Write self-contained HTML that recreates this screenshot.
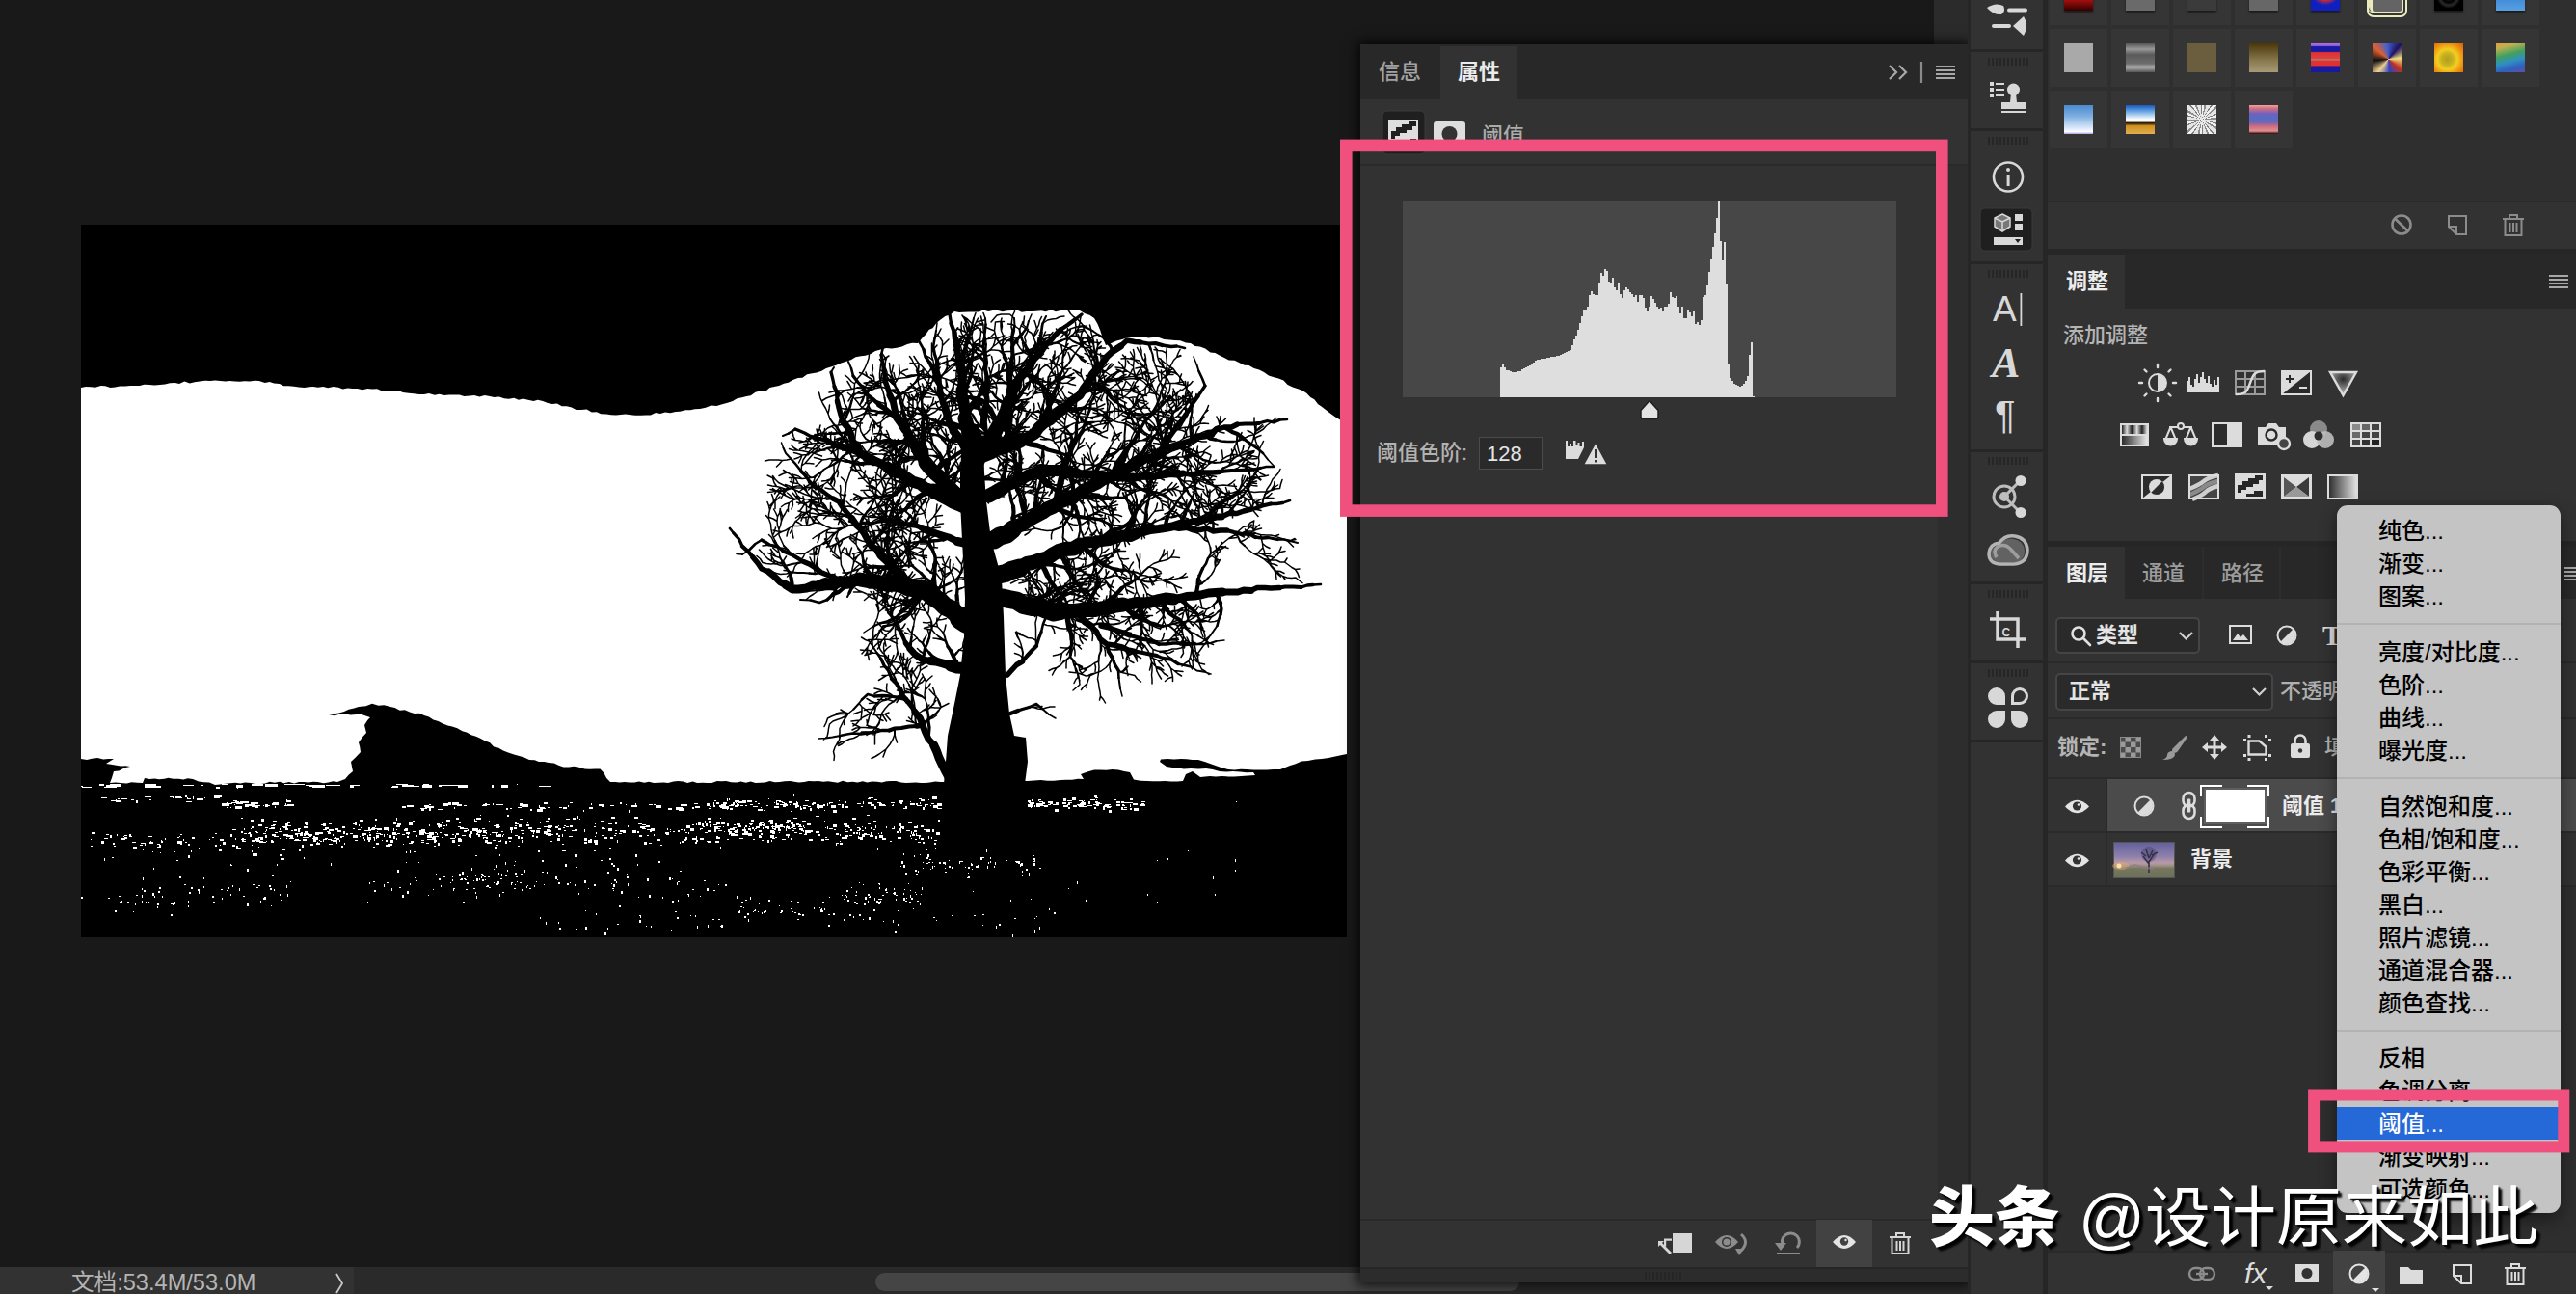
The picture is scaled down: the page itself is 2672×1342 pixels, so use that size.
<!DOCTYPE html>
<html lang="zh-CN"><head><meta charset="utf-8"><title>Photoshop</title>
<style>
html,body{margin:0;padding:0;background:#191919;}
body{width:2672px;height:1342px;overflow:hidden;font-family:"Liberation Sans","Noto Sans CJK SC",sans-serif;}
#root{position:relative;width:2672px;height:1342px;overflow:hidden;background:#191919;}
.abs{position:absolute;}
svg{display:block;}
.t22{font-size:22px;font-weight:500;}
.mi{left:43px;font-size:24px;font-weight:500;line-height:34px;height:34px;white-space:nowrap;}
.wm{color:#fff;font-size:68px;line-height:80px;white-space:nowrap;text-shadow:4px 4px 2px rgba(0,0,0,.9),2px 2px 1px rgba(0,0,0,.8);}

</style></head><body>
<div id="root">
<svg class="abs" style="left:84px;top:233px" width="1313" height="739" viewBox="84 233 1313 739">
<rect x="84" y="233" width="1313" height="739" fill="#000"/>
<polygon fill="#fff" points="84.0,402.0 89.1,401.1 94.3,401.2 98.8,401.7 104.6,399.9 109.1,400.3 114.4,402.0 119.5,401.4 124.2,400.6 130.0,400.4 135.0,399.9 139.3,400.1 145.0,400.1 149.4,398.7 155.0,399.0 160.2,399.6 165.9,398.9 171.1,398.5 176.2,397.3 181.6,397.1 186.0,397.9 191.3,395.6 196.8,397.4 201.9,396.2 207.2,395.6 212.6,394.8 218.2,395.1 223.0,394.5 228.6,395.0 233.8,395.5 238.0,395.0 244.0,395.5 248.7,395.7 253.4,395.2 259.0,395.5 264.0,394.7 268.7,394.9 274.8,397.1 279.7,395.9 284.1,397.5 289.9,397.9 294.3,400.2 299.4,400.2 305.0,400.7 309.9,401.4 315.6,402.0 320.7,401.2 324.8,400.9 329.8,401.8 335.3,400.9 340.1,402.2 345.9,400.9 351.0,401.7 355.5,403.4 360.7,402.5 365.8,403.1 370.9,403.0 375.9,404.2 381.2,403.1 386.0,403.4 391.2,403.3 396.8,405.8 401.7,405.2 407.7,405.4 413.1,405.0 417.9,407.1 423.8,407.7 429.0,408.3 434.8,409.0 440.0,409.0 444.8,407.9 450.9,409.8 455.6,408.8 460.7,409.9 466.0,409.4 471.5,409.6 476.5,409.6 481.4,410.9 487.3,410.6 492.0,410.0 497.3,411.5 502.7,410.0 508.0,411.0 512.6,412.0 517.8,411.4 522.9,413.2 527.7,413.7 533.2,412.8 537.9,414.7 542.6,413.5 547.7,414.7 553.4,415.9 557.8,414.7 563.0,416.0 568.1,417.9 572.8,419.0 577.8,418.4 582.8,421.3 587.9,421.2 592.9,422.5 597.6,425.0 603.0,425.0 608.6,424.5 613.8,427.6 618.9,427.2 623.3,429.3 629.1,429.6 633.9,430.2 639.0,430.6 643.9,429.9 648.8,429.5 654.1,430.3 659.0,430.7 664.8,430.8 670.1,430.6 674.9,430.4 680.1,427.9 685.0,429.0 689.9,427.5 695.3,428.2 700.8,426.9 705.3,426.8 711.0,425.2 716.0,425.2 720.6,424.2 726.0,424.0 732.0,422.8 737.6,420.5 743.3,421.1 748.2,419.5 754.7,417.7 760.0,416.0 764.6,413.2 769.6,412.2 774.4,411.0 778.7,410.3 783.6,406.8 788.4,405.4 794.0,406.0 798.4,402.1 803.0,401.1 808.0,400.0 813.1,397.8 817.7,396.7 822.5,393.9 827.7,391.9 832.4,391.7 837.1,388.3 842.5,387.3 847.1,386.6 852.3,384.8 857.0,382.1 862.0,380.5 867.3,378.7 872.4,376.6 877.1,374.9 882.6,373.3 887.5,370.2 893.1,369.3 897.6,368.8 903.2,366.9 908.0,364.0 913.5,362.4 919.3,361.0 924.9,361.4 930.2,360.8 935.6,359.6 941.1,357.0 946.1,355.7 952.0,356.0 957.0,350.0 960.1,347.1 963.8,341.7 967.5,340.2 971.8,334.4 975.0,332.0 980.4,328.0 985.3,326.5 990.0,323.0 995.1,324.1 999.5,323.7 1005.0,323.6 1009.6,323.4 1015.5,323.5 1019.8,321.6 1025.3,322.9 1029.7,322.0 1035.1,322.0 1039.9,323.3 1044.9,322.2 1049.9,322.1 1055.0,321.4 1059.9,323.7 1064.6,323.1 1070.3,322.9 1075.0,322.8 1080.1,322.3 1084.6,323.3 1090.3,321.2 1095.0,323.3 1100.2,322.0 1104.8,321.3 1110.1,321.3 1114.7,321.6 1120.0,322.0 1125.5,325.2 1130.2,326.8 1135.0,330.0 1138.4,335.8 1141.0,342.0 1142.8,347.6 1144.5,351.9 1147.0,358.0 1152.5,356.1 1158.1,353.5 1164.1,352.1 1169.9,349.9 1175.0,349.0 1180.5,349.1 1186.1,349.3 1191.3,350.4 1196.8,349.8 1202.0,350.0 1207.4,351.9 1213.5,352.6 1218.2,352.9 1224.2,353.3 1230.0,355.5 1235.0,356.0 1239.7,359.1 1244.7,359.5 1250.2,361.6 1255.4,365.5 1260.4,366.1 1264.9,368.4 1270.0,371.0 1274.7,373.5 1280.6,373.7 1285.2,376.1 1290.7,378.7 1295.5,379.1 1300.7,382.1 1306.0,383.4 1311.0,386.0 1315.9,389.6 1320.6,390.9 1326.2,392.5 1331.4,394.5 1335.6,398.9 1340.9,401.4 1346.3,403.3 1351.0,405.0 1355.2,407.8 1359.3,412.0 1363.3,414.2 1367.2,419.3 1370.6,421.5 1374.8,424.7 1379.0,428.0 1385.2,432.6 1391.0,436.0 1397.0,440.0 1397.0,782.0 1390.8,783.3 1385.0,784.5 1378.1,785.9 1371.0,787.0 1364.2,787.4 1356.8,788.9 1350.0,789.5 1343.8,792.3 1338.0,794.0 1328.0,798.0 1321.1,797.9 1314.0,798.4 1307.0,798.6 1300.0,798.5 1293.3,798.1 1287.1,797.7 1280.5,798.4 1274.0,798.0 1265.9,795.8 1258.0,793.0 1250.4,790.2 1243.0,788.0 1236.8,788.1 1230.9,787.3 1225.0,787.0 1217.9,787.5 1211.0,787.1 1204.0,787.5 1203.0,790.0 1210.0,795.0 1216.1,795.9 1222.2,796.5 1228.0,797.5 1235.4,797.0 1243.0,797.5 1251.0,797.0 1257.8,798.0 1265.0,800.0 1272.1,800.5 1278.9,800.0 1286.1,800.5 1293.1,801.2 1300.0,801.0 1302.0,804.0 1294.5,804.6 1287.2,804.9 1280.0,805.5 1273.8,805.4 1267.4,804.9 1261.0,805.5 1255.0,805.0 1245.0,806.0 1237.0,800.0 1230.0,803.0 1227.0,810.0 1221.0,810.4 1214.6,810.5 1208.5,810.1 1202.6,810.2 1196.1,810.2 1190.0,810.0 1183.0,809.7 1176.0,808.5 1172.0,801.0 1166.1,799.9 1160.0,798.5 1153.9,797.9 1147.5,798.7 1141.2,798.5 1135.0,798.5 1128.0,800.4 1121.0,803.0 1124.0,808.0 1118.0,807.7 1112.0,808.7 1106.2,808.8 1100.0,809.0 1093.0,809.7 1086.5,809.8 1079.5,809.1 1072.6,809.5 1066.0,810.0 980.0,811.0 975.4,811.1 970.3,810.6 964.6,811.5 960.0,811.9 955.1,812.0 949.7,811.6 945.2,811.7 939.7,811.9 934.7,811.6 929.3,810.1 924.4,810.0 919.6,810.2 914.7,811.5 909.7,810.8 904.5,810.5 899.4,811.6 894.9,810.2 889.4,811.5 884.5,810.7 879.2,811.2 874.1,809.8 869.0,811.7 864.0,810.9 859.0,810.3 854.0,810.8 848.9,809.9 844.2,810.2 838.7,809.9 834.1,810.9 828.7,811.5 824.0,810.8 819.5,809.9 813.7,810.3 808.7,810.9 803.8,811.3 798.5,810.1 793.7,811.5 788.9,811.7 783.7,812.0 778.6,810.4 773.9,811.8 768.4,810.6 764.2,811.4 758.2,811.2 753.3,809.9 748.2,810.2 743.8,809.9 738.3,812.0 733.6,812.1 729.0,811.7 723.1,812.1 718.6,810.5 713.1,812.1 708.8,810.5 703.3,810.1 698.5,810.6 693.0,812.0 688.5,811.6 683.3,811.8 678.1,812.0 673.0,810.8 668.2,811.7 662.9,810.4 658.2,811.5 653.0,811.5 647.8,811.0 642.6,811.5 638.3,810.9 633.0,811.0 629.1,807.0 626.3,801.4 622.5,797.6 617.4,797.6 611.6,797.8 606.5,797.5 600.7,795.7 595.3,794.7 590.0,795.4 584.5,795.6 579.4,793.7 574.8,791.6 569.1,791.1 564.5,789.9 558.8,790.1 554.6,788.3 549.0,788.0 543.7,785.4 538.5,784.0 533.1,782.6 527.1,780.6 522.0,778.6 516.8,775.5 512.1,774.6 508.2,770.3 503.4,768.4 498.2,765.7 493.8,763.7 488.9,762.3 484.0,759.6 479.5,758.3 474.3,755.3 469.0,753.6 464.5,752.6 459.3,750.6 454.6,748.0 449.4,746.5 444.9,743.6 440.0,742.0 435.1,739.7 429.9,740.0 425.1,738.5 419.9,736.2 414.8,736.8 409.6,734.1 405.0,733.0 398.3,731.2 392.6,731.8 386.0,729.7 379.5,732.2 372.0,733.0 367.2,734.6 361.6,735.8 356.9,738.1 351.3,739.4 346.1,740.3 341.0,741.0 347.1,742.2 352.8,740.5 357.6,740.2 363.5,741.5 369.5,741.0 375.0,741.0 384.0,744.0 381.2,746.9 378.0,752.0 380.0,760.0 375.9,764.5 372.0,770.0 373.2,774.6 374.0,780.0 368.8,785.6 364.0,790.0 364.8,794.0 366.0,800.0 361.6,803.8 358.0,808.0 350.0,811.0 345.3,810.2 340.5,811.6 335.4,812.3 329.7,810.9 325.0,810.8 320.0,811.4 315.3,811.1 310.0,810.9 305.3,812.4 299.8,811.1 294.5,812.3 290.0,810.8 284.7,811.8 279.7,810.7 275.0,812.5 270.3,813.0 264.6,813.1 260.0,812.0 254.2,811.5 249.3,812.4 244.2,811.8 238.7,812.2 233.9,812.8 228.1,813.5 223.0,814.0 217.2,811.4 211.7,811.3 206.0,810.5 200.0,808.0 194.7,807.3 190.3,808.4 185.3,807.7 179.8,807.7 174.5,806.7 170.4,807.7 165.0,808.3 160.4,807.6 155.1,807.9 150.0,807.0 148.0,812.0 142.4,811.8 136.4,811.2 131.5,812.4 125.2,812.1 119.6,811.6 114.0,812.0 116.0,806.7 118.0,800.0 123.3,799.4 129.4,796.2 135.0,795.0 130.3,794.2 125.4,794.6 119.5,793.5 115.0,792.8 110.0,792.0 118.0,787.0 112.1,787.0 107.1,787.5 101.2,786.0 95.3,786.7 90.1,787.9 84.0,787.0"/>
<path fill="#fff" d="M304 813h12v1h-12zM245 814h7v3h-7zM103 813h5v2h-5zM536 813h1v1h-1zM324 814h13v3h-13zM114 813h12v2h-12zM190 814h11v1h-11zM246 816h1v2h-1zM110 814h5v2h-5zM150 814h12v3h-12zM85 816h10v1h-10zM510 814h2v3h-2zM520 814h7v3h-7zM320 815h6v1h-6zM417 813h2v3h-2zM426 815h9v1h-9zM438 814h10v3h-10zM559 815h13v1h-13zM160 815h7v2h-7zM411 813h12v1h-12zM275 813h13v3h-13zM84 815h2v1h-2zM295 813h9v1h-9zM330 814h1v2h-1zM455 814h10v1h-10zM115 813h10v3h-10zM261 813h12v2h-12zM150 813h12v1h-12zM108 816h13v1h-13zM209 814h2v1h-2zM112 814h3v2h-3zM224 816h4v2h-4zM351 814h2v1h-2zM439 813h6v1h-6zM419 814h10v2h-10zM363 814h4v3h-4zM319 814h7v1h-7zM464 814h11v1h-11zM455 814h3v2h-3zM365 814h8v1h-8zM338 814h13v1h-13zM230 813h7v1h-7zM190 814h7v1h-7zM317 814h9v1h-9zM407 815h6v2h-6zM475 814h10v3h-10zM320 814h2v1h-2zM406 816h6v1h-6zM235 837h1v1h-1zM254 834h4v3h-4zM263 833h1v2h-1zM230 833h7v3h-7zM240 832h1v2h-1zM276 835h4v1h-4zM243 834h1v1h-1zM256 834h6v2h-6zM273 835h1v1h-1zM247 837h4v1h-4zM231 833h7v3h-7zM285 836h1v2h-1zM263 832h5v2h-5zM239 837h1v1h-1zM298 834h7v2h-7zM297 829h1v2h-1zM260 832h4v2h-4zM260 834h1v2h-1zM262 832h4v1h-4zM253 832h1v1h-1zM241 832h5v1h-5zM296 833h1v2h-1zM297 830h5v2h-5zM244 831h4v2h-4zM235 832h2v2h-2zM283 832h6v3h-6zM236 833h4v1h-4zM245 832h7v2h-7zM232 834h1v2h-1zM275 834h3v3h-3zM265 836h3v2h-3zM244 836h7v3h-7zM242 830h4v1h-4zM251 831h7v2h-7zM263 835h7v1h-7zM249 831h2v2h-2zM263 835h2v2h-2zM282 833h1v2h-1zM295 835h6v1h-6zM261 834h3v3h-3zM459 833h6v3h-6zM559 837h6v1h-6zM737 835h1v2h-1zM720 833h4v1h-4zM605 840h1v2h-1zM503 833h2v2h-2zM749 836h7v3h-7zM529 838h2v1h-2zM422 835h7v2h-7zM511 833h1v2h-1zM550 839h2v2h-2zM747 837h1v1h-1zM704 838h5v3h-5zM733 833h3v3h-3zM465 832h3v2h-3zM557 839h6v3h-6zM445 838h2v3h-2zM680 835h6v3h-6zM417 836h4v2h-4zM736 836h1v1h-1zM481 835h3v1h-3zM474 834h5v2h-5zM541 834h7v3h-7zM649 834h1v1h-1zM443 836h7v2h-7zM537 837h4v1h-4zM445 834h2v1h-2zM611 837h4v2h-4zM539 833h3v3h-3zM591 832h3v1h-3zM750 835h3v3h-3zM560 838h6v1h-6zM718 837h2v2h-2zM539 833h3v2h-3zM589 835h1v2h-1zM559 835h1v2h-1zM440 835h5v2h-5zM471 837h1v2h-1zM659 833h1v2h-1zM624 835h3v2h-3zM652 840h1v3h-1zM643 832h2v2h-2zM721 836h5v2h-5zM693 838h4v2h-4zM752 832h1v3h-1zM633 835h4v1h-4zM441 836h3v2h-3zM469 832h7v3h-7zM464 834h4v1h-4zM613 833h1v2h-1zM564 832h4v2h-4zM678 834h2v1h-2zM706 834h7v2h-7zM525 838h2v2h-2zM654 835h7v2h-7zM735 838h2v1h-2zM746 835h5v2h-5zM437 839h3v2h-3zM515 834h7v1h-7zM701 837h7v3h-7zM436 838h7v1h-7zM580 837h3v1h-3zM568 837h2v1h-2zM454 839h6v1h-6zM500 835h5v1h-5zM584 837h4v2h-4zM748 834h3v1h-3zM501 834h7v1h-7zM673 834h4v1h-4zM621 834h6v2h-6zM155 829h2v1h-2zM150 826h7v1h-7zM115 830h7v1h-7zM194 828h4v1h-4zM187 827h2v1h-2zM141 830h2v3h-2zM122 828h2v1h-2zM212 827h1v1h-1zM185 826h3v2h-3zM182 826h4v2h-4zM120 829h1v3h-1zM136 829h3v1h-3zM179 826h1v2h-1zM222 825h6v3h-6zM192 825h2v2h-2zM193 831h6v1h-6zM126 828h6v1h-6zM219 824h5v1h-5zM204 828h7v2h-7zM176 826h4v1h-4zM194 827h1v2h-1zM105 827h6v1h-6zM200 826h1v3h-1zM224 825h6v2h-6zM120 830h6v2h-6zM758 864h4v3h-4zM423 864h1v2h-1zM761 862h1v1h-1zM728 854h2v3h-2zM576 858h2v1h-2zM593 861h3v1h-3zM577 864h2v2h-2zM522 865h1v1h-1zM348 869h4v1h-4zM955 856h3v2h-3zM551 861h4v2h-4zM408 853h3v2h-3zM507 851h1v1h-1zM875 854h4v2h-4zM969 874h2v2h-2zM770 860h2v2h-2zM436 861h4v2h-4zM583 882h4v1h-4zM401 865h1v1h-1zM726 869h4v2h-4zM501 868h1v2h-1zM882 860h2v2h-2zM510 863h3v1h-3zM707 872h2v2h-2zM261 858h1v1h-1zM952 873h3v1h-3zM503 861h2v1h-2zM948 857h4v2h-4zM890 867h1v2h-1zM299 856h3v1h-3zM533 858h3v2h-3zM564 857h4v1h-4zM799 866h4v2h-4zM871 872h1v1h-1zM932 854h3v3h-3zM799 867h1v2h-1zM339 858h1v1h-1zM264 866h1v2h-1zM411 860h1v1h-1zM530 861h1v3h-1zM833 856h1v2h-1zM520 862h2v1h-2zM726 859h3v1h-3zM950 866h3v1h-3zM815 865h4v2h-4zM583 875h2v1h-2zM625 859h3v1h-3zM646 861h3v3h-3zM253 859h1v2h-1zM309 864h4v1h-4zM930 862h3v2h-3zM691 863h3v3h-3zM969 871h3v1h-3zM289 862h4v1h-4zM915 869h4v2h-4zM487 866h1v1h-1zM315 864h2v3h-2zM772 862h4v1h-4zM705 873h1v2h-1zM811 870h4v1h-4zM297 869h1v1h-1zM963 867h1v3h-1zM914 863h1v2h-1zM934 857h4v2h-4zM945 869h1v1h-1zM492 859h4v3h-4zM345 865h1v2h-1zM624 858h3v2h-3zM606 860h1v3h-1zM321 865h2v3h-2zM798 850h4v3h-4zM894 861h2v1h-2zM260 850h3v2h-3zM481 859h4v1h-4zM296 859h3v2h-3zM568 848h3v2h-3zM638 853h2v2h-2zM816 850h4v2h-4zM800 857h4v1h-4zM726 860h1v1h-1zM722 854h1v2h-1zM834 865h3v1h-3zM624 866h2v1h-2zM864 855h4v3h-4zM398 865h1v3h-1zM888 863h2v2h-2zM275 858h3v1h-3zM957 873h2v2h-2zM887 855h1v1h-1zM513 863h4v1h-4zM428 851h2v2h-2zM722 871h2v2h-2zM616 871h4v3h-4zM961 860h4v3h-4zM412 854h4v2h-4zM448 868h4v3h-4zM796 858h1v2h-1zM450 871h3v2h-3zM891 863h1v3h-1zM317 853h2v1h-2zM568 864h4v3h-4zM583 865h1v3h-1zM835 861h4v3h-4zM743 857h1v1h-1zM873 868h3v2h-3zM546 855h3v2h-3zM538 855h3v3h-3zM314 868h2v1h-2zM298 853h3v1h-3zM568 856h4v3h-4zM810 852h3v1h-3zM950 864h1v3h-1zM325 868h4v1h-4zM871 874h3v2h-3zM541 871h2v3h-2zM711 863h2v1h-2zM718 855h2v1h-2zM445 855h1v2h-1zM327 863h4v3h-4zM733 872h4v1h-4zM840 861h3v2h-3zM651 856h1v2h-1zM856 870h4v1h-4zM548 858h4v2h-4zM790 871h2v1h-2zM424 853h4v3h-4zM534 866h3v1h-3zM867 864h3v2h-3zM731 851h1v3h-1zM891 858h1v1h-1zM742 872h4v2h-4zM617 854h1v1h-1zM325 867h2v2h-2zM594 848h3v2h-3zM368 853h2v3h-2zM626 868h4v2h-4zM417 865h3v1h-3zM910 879h1v3h-1zM671 860h4v1h-4zM711 868h2v3h-2zM833 861h1v2h-1zM940 861h4v1h-4zM722 867h1v3h-1zM656 861h4v3h-4zM579 856h1v1h-1zM796 871h2v3h-2zM540 861h4v1h-4zM866 855h2v1h-2zM314 870h4v2h-4zM598 856h1v3h-1zM801 863h2v2h-2zM376 864h4v2h-4zM290 859h1v2h-1zM947 865h2v2h-2zM820 852h3v3h-3zM856 868h2v1h-2zM958 860h4v1h-4zM855 851h1v2h-1zM421 863h4v2h-4zM669 857h1v1h-1zM587 849h4v1h-4zM596 860h3v2h-3zM556 867h2v2h-2zM934 862h1v2h-1zM566 851h3v2h-3zM744 869h2v1h-2zM698 862h2v1h-2zM339 862h3v1h-3zM490 859h4v3h-4zM800 871h1v2h-1zM744 868h3v2h-3zM366 854h3v1h-3zM422 867h2v2h-2zM675 859h2v3h-2zM668 873h3v3h-3zM734 861h3v2h-3zM501 861h3v3h-3zM820 869h1v2h-1zM867 874h1v3h-1zM732 852h3v1h-3zM411 856h4v2h-4zM824 863h3v1h-3zM695 862h1v1h-1zM537 877h2v1h-2zM515 876h2v1h-2zM315 857h4v2h-4zM880 858h2v1h-2zM721 873h2v2h-2zM897 858h1v2h-1zM779 850h3v2h-3zM903 863h2v3h-2zM933 860h2v2h-2zM261 857h2v2h-2zM666 855h4v1h-4zM852 870h3v2h-3zM253 864h3v1h-3zM631 854h4v1h-4zM301 866h3v3h-3zM794 857h4v1h-4zM631 859h4v3h-4zM475 857h3v1h-3zM566 865h2v1h-2zM640 871h1v3h-1zM272 873h4v1h-4zM951 856h1v3h-1zM569 861h3v2h-3zM788 868h1v1h-1zM741 861h1v1h-1zM292 856h1v3h-1zM515 856h3v3h-3zM772 860h2v2h-2zM497 860h1v3h-1zM540 868h2v2h-2zM496 866h2v2h-2zM389 856h1v2h-1zM894 865h3v3h-3zM936 858h2v2h-2zM556 861h4v3h-4zM411 848h1v3h-1zM333 855h2v1h-2zM966 868h1v2h-1zM908 867h2v3h-2zM734 848h4v2h-4zM973 850h2v3h-2zM309 860h2v3h-2zM764 854h4v2h-4zM598 846h2v3h-2zM271 872h1v1h-1zM837 854h4v2h-4zM419 860h4v2h-4zM587 857h3v1h-3zM371 860h3v1h-3zM637 866h2v1h-2zM606 873h3v2h-3zM320 854h1v2h-1zM579 866h2v2h-2zM784 857h4v2h-4zM335 856h2v1h-2zM685 876h2v1h-2zM661 862h2v2h-2zM731 863h3v1h-3zM732 855h2v2h-2zM933 859h2v1h-2zM856 858h1v1h-1zM767 869h4v1h-4zM756 862h3v3h-3zM501 868h3v1h-3zM848 852h3v1h-3zM617 874h3v2h-3zM885 863h2v2h-2zM899 845h3v1h-3zM276 860h1v2h-1zM860 859h4v1h-4zM560 852h1v2h-1zM799 861h4v3h-4zM762 865h3v2h-3zM718 869h4v2h-4zM703 861h2v2h-2zM557 859h4v1h-4zM421 861h2v1h-2zM408 859h1v3h-1zM503 871h3v3h-3zM846 862h4v2h-4zM671 866h2v1h-2zM382 860h3v2h-3zM947 863h1v3h-1zM875 868h4v2h-4zM537 867h2v3h-2zM884 848h4v2h-4zM877 856h4v2h-4zM584 858h2v1h-2zM732 854h2v1h-2zM346 869h1v1h-1zM552 866h2v2h-2zM473 848h3v2h-3zM610 871h4v3h-4zM578 869h3v3h-3zM570 842h1v1h-1zM709 860h2v2h-2zM695 860h1v1h-1zM460 859h1v1h-1zM318 868h2v1h-2zM734 873h3v1h-3zM881 866h3v1h-3zM949 870h2v1h-2zM781 870h2v1h-2zM741 857h4v3h-4zM435 861h2v1h-2zM944 866h1v2h-1zM787 867h3v2h-3zM527 868h4v2h-4zM285 863h3v1h-3zM658 847h4v2h-4zM591 856h3v2h-3zM801 862h3v3h-3zM394 859h2v2h-2zM638 861h2v1h-2zM541 864h3v1h-3zM355 857h3v2h-3zM469 865h1v1h-1zM871 865h1v2h-1zM305 860h3v2h-3zM709 870h3v2h-3zM665 866h1v2h-1zM539 849h3v1h-3zM296 854h3v3h-3zM335 854h3v3h-3zM633 868h3v2h-3zM735 851h3v3h-3zM815 857h2v2h-2zM283 855h2v2h-2zM898 865h4v1h-4zM638 864h2v1h-2zM564 862h4v3h-4zM458 852h1v2h-1zM683 852h4v1h-4zM282 865h4v2h-4zM442 874h3v1h-3zM352 862h1v1h-1zM908 856h1v3h-1zM525 880h4v1h-4zM381 867h1v3h-1zM676 859h3v3h-3zM569 856h1v1h-1zM835 863h2v2h-2zM316 862h3v3h-3zM385 859h2v2h-2zM564 864h1v1h-1zM331 871h1v1h-1zM925 859h3v1h-3zM876 860h2v1h-2zM617 867h1v1h-1zM359 864h2v2h-2zM743 867h2v3h-2zM822 855h3v3h-3zM953 866h2v2h-2zM800 866h3v1h-3zM807 860h3v2h-3zM785 858h2v1h-2zM479 866h4v1h-4zM454 855h4v3h-4zM373 867h1v1h-1zM832 851h4v2h-4zM547 853h1v1h-1zM634 847h4v2h-4zM250 848h2v1h-2zM585 856h2v1h-2zM266 863h2v1h-2zM317 854h2v2h-2zM678 865h1v2h-1zM412 864h3v1h-3zM669 859h1v1h-1zM673 874h3v1h-3zM754 870h2v1h-2zM455 857h1v2h-1zM294 857h4v2h-4zM892 868h3v3h-3zM516 857h3v1h-3zM576 857h3v2h-3zM664 857h4v2h-4zM521 866h1v2h-1zM265 869h4v3h-4zM463 855h1v2h-1zM799 866h4v3h-4zM839 870h4v2h-4zM493 851h2v2h-2zM903 858h1v2h-1zM302 861h2v1h-2zM923 872h2v1h-2zM570 872h3v1h-3zM828 857h4v1h-4zM772 863h4v3h-4zM777 857h1v1h-1zM801 856h1v3h-1zM670 856h4v2h-4zM867 874h3v1h-3zM889 861h3v1h-3zM337 858h4v2h-4zM953 868h1v2h-1zM495 861h4v3h-4zM616 857h2v1h-2zM458 868h2v1h-2zM906 851h3v1h-3zM570 865h4v1h-4zM948 861h3v2h-3zM420 859h3v3h-3zM858 857h1v3h-1zM692 859h1v2h-1zM927 857h1v2h-1zM931 868h4v2h-4zM712 856h4v3h-4zM736 855h2v3h-2zM942 852h4v2h-4zM500 866h4v1h-4zM453 854h3v2h-3zM309 859h3v1h-3zM340 863h3v2h-3zM525 852h4v1h-4zM275 862h1v1h-1zM971 863h4v3h-4zM829 864h3v1h-3zM251 872h4v1h-4zM789 864h2v2h-2zM585 861h2v1h-2zM378 861h4v1h-4zM394 865h3v1h-3zM889 858h3v1h-3zM606 869h3v3h-3zM377 868h1v2h-1zM642 864h3v1h-3zM407 863h4v3h-4zM494 862h2v1h-2zM579 859h3v2h-3zM534 856h2v1h-2zM778 861h1v1h-1zM494 865h4v1h-4zM590 867h4v1h-4zM363 864h3v1h-3zM345 871h1v2h-1zM967 860h2v3h-2zM441 864h4v1h-4zM919 857h1v2h-1zM292 857h2v1h-2zM350 861h4v2h-4zM477 858h4v2h-4zM891 859h2v2h-2zM437 860h4v3h-4zM513 878h3v3h-3zM890 868h4v2h-4zM690 863h4v2h-4zM486 865h3v3h-3zM801 869h3v1h-3zM487 866h2v3h-2zM666 857h3v3h-3zM663 866h3v2h-3zM955 869h3v2h-3zM906 860h2v1h-2zM912 866h4v3h-4zM877 862h3v1h-3zM776 859h3v2h-3zM762 861h3v3h-3zM729 855h1v3h-1zM473 864h3v2h-3zM488 862h2v3h-2zM435 863h4v1h-4zM257 864h3v1h-3zM567 860h3v3h-3zM834 858h1v1h-1zM747 878h1v2h-1zM831 861h2v1h-2zM476 853h2v1h-2zM535 854h3v1h-3zM623 851h4v2h-4zM724 853h3v3h-3zM791 858h1v2h-1zM865 860h2v1h-2zM730 857h1v1h-1zM374 858h2v1h-2zM281 856h4v1h-4zM512 856h4v1h-4zM751 862h1v1h-1zM756 865h1v1h-1zM849 865h2v2h-2zM341 854h3v1h-3zM838 861h3v3h-3zM526 845h2v2h-2zM266 869h3v2h-3zM281 858h4v1h-4zM601 849h1v1h-1zM329 873h1v1h-1zM894 857h1v1h-1zM498 845h1v1h-1zM612 870h2v3h-2zM896 864h3v2h-3zM770 864h4v2h-4zM553 863h1v2h-1zM681 870h4v2h-4zM564 863h4v2h-4zM550 861h3v1h-3zM714 863h1v2h-1zM316 853h3v2h-3zM804 868h2v1h-2zM372 855h1v2h-1zM722 870h1v2h-1zM492 849h1v3h-1zM311 865h3v2h-3zM885 863h1v2h-1zM331 863h4v2h-4zM643 861h3v2h-3zM900 854h3v1h-3zM618 863h1v2h-1zM716 859h4v3h-4zM335 860h4v1h-4zM534 853h2v2h-2zM382 858h2v2h-2zM529 858h3v3h-3zM674 861h2v2h-2zM902 866h4v2h-4zM475 869h3v2h-3zM821 861h3v1h-3zM946 865h1v2h-1zM757 859h1v2h-1zM570 856h3v2h-3zM373 850h4v2h-4zM776 864h4v3h-4zM283 851h4v1h-4zM524 872h2v3h-2zM911 864h1v1h-1zM846 846h4v1h-4zM463 850h4v2h-4zM706 860h2v1h-2zM877 866h3v2h-3zM817 866h1v3h-1zM945 862h1v3h-1zM787 866h2v2h-2zM662 854h4v1h-4zM389 849h2v2h-2zM195 875h2v2h-2zM137 873h4v1h-4zM94 870h1v1h-1zM166 884h1v1h-1zM188 872h1v2h-1zM192 873h2v1h-2zM223 876h2v2h-2zM165 876h2v3h-2zM231 873h3v3h-3zM110 865h3v1h-3zM163 875h2v1h-2zM188 874h1v1h-1zM105 872h3v3h-3zM184 872h4v3h-4zM126 869h4v2h-4zM146 874h4v1h-4zM244 869h1v2h-1zM148 880h1v2h-1zM184 868h2v1h-2zM171 869h1v2h-1zM121 865h1v2h-1zM246 879h4v1h-4zM114 866h2v3h-2zM223 864h2v1h-2zM198 882h1v2h-1zM128 867h1v1h-1zM134 867h3v1h-3zM95 863h4v2h-4zM96 863h2v2h-2zM94 877h2v1h-2zM167 871h1v2h-1zM167 872h2v2h-2zM138 878h4v3h-4zM186 867h1v1h-1zM228 876h1v1h-1zM155 873h4v2h-4zM220 868h2v1h-2zM245 877h2v3h-2zM117 874h2v2h-2zM228 870h4v2h-4zM217 870h1v1h-1zM129 866h3v1h-3zM158 883h1v1h-1zM187 865h2v1h-2zM165 875h1v2h-1zM129 868h3v2h-3zM206 879h1v2h-1zM134 865h2v2h-2zM199 868h3v2h-3zM227 881h3v2h-3zM145 876h3v1h-3zM241 876h3v2h-3zM187 875h2v1h-2zM241 860h4v1h-4zM156 872h1v1h-1zM163 878h2v1h-2zM239 865h2v3h-2zM190 870h1v2h-1zM154 867h4v1h-4zM108 869h4v1h-4zM341 860h5v2h-5zM268 878h1v1h-1zM391 862h1v1h-1zM312 863h2v2h-2zM418 875h1v1h-1zM332 872h2v1h-2zM469 865h2v1h-2zM306 870h2v1h-2zM508 865h1v1h-1zM459 856h3v1h-3zM275 866h2v3h-2zM281 871h2v1h-2zM260 859h1v1h-1zM481 861h3v2h-3zM300 869h5v1h-5zM517 865h3v1h-3zM269 872h1v1h-1zM270 868h3v3h-3zM515 866h5v2h-5zM298 866h4v1h-4zM336 870h3v1h-3zM354 877h2v2h-2zM453 864h1v2h-1zM498 861h2v2h-2zM386 858h3v3h-3zM426 872h3v2h-3zM454 874h2v3h-2zM316 864h5v2h-5zM328 874h4v2h-4zM349 869h3v2h-3zM440 863h2v1h-2zM437 871h3v1h-3zM352 871h1v2h-1zM421 863h3v2h-3zM443 866h5v3h-5zM390 874h3v2h-3zM388 869h1v3h-1zM461 865h1v1h-1zM481 861h4v1h-4zM259 865h2v3h-2zM386 859h5v1h-5zM322 875h3v2h-3zM294 865h5v2h-5zM265 870h1v1h-1zM437 873h3v1h-3zM271 849h3v3h-3zM313 876h2v3h-2zM388 859h3v1h-3zM258 863h2v2h-2zM297 866h5v2h-5zM268 855h4v2h-4zM262 885h5v3h-5zM284 867h5v1h-5zM378 870h1v2h-1zM279 859h3v1h-3zM411 869h1v2h-1zM402 875h5v2h-5zM328 868h2v3h-2zM261 871h3v2h-3zM250 862h2v2h-2zM411 865h1v1h-1zM319 865h5v2h-5zM435 863h3v3h-3zM504 868h2v2h-2zM266 871h4v2h-4zM368 871h3v1h-3zM456 863h2v1h-2zM320 858h1v2h-1zM325 870h3v3h-3zM305 871h3v1h-3zM336 870h1v1h-1zM366 859h2v1h-2zM431 866h2v2h-2zM356 862h2v3h-2zM424 874h4v1h-4zM450 877h2v1h-2zM475 876h2v1h-2zM281 872h3v2h-3zM514 864h2v2h-2zM353 867h2v2h-2zM269 872h4v2h-4zM467 869h5v1h-5zM428 862h4v1h-4zM276 872h1v1h-1zM515 855h3v3h-3zM401 876h4v2h-4zM494 864h2v2h-2zM366 866h5v3h-5zM381 866h1v1h-1zM405 871h3v3h-3zM273 864h3v1h-3zM438 863h2v3h-2zM517 872h2v1h-2zM435 862h2v2h-2zM472 866h1v3h-1zM337 869h3v1h-3zM282 859h3v1h-3zM343 871h5v1h-5zM504 863h1v2h-1zM403 866h3v3h-3zM383 863h1v1h-1zM335 870h1v3h-1zM462 865h3v2h-3zM381 868h4v3h-4zM342 863h1v1h-1zM316 868h3v1h-3zM445 863h5v3h-5zM376 865h2v2h-2zM448 868h4v1h-4zM443 870h5v1h-5zM408 867h2v3h-2zM341 875h4v1h-4zM396 871h1v1h-1zM251 869h2v3h-2zM500 859h3v1h-3zM284 855h2v1h-2zM382 871h2v2h-2zM485 860h1v2h-1zM347 868h2v1h-2zM451 863h2v1h-2zM264 862h3v1h-3zM452 867h3v1h-3zM307 871h5v1h-5zM391 859h5v2h-5zM349 873h1v2h-1zM387 868h2v1h-2zM442 864h3v1h-3zM353 867h4v1h-4zM347 859h4v2h-4zM469 871h3v3h-3zM297 865h2v1h-2zM345 871h2v2h-2zM400 871h2v2h-2zM400 876h5v2h-5zM250 870h5v1h-5zM398 858h5v3h-5zM324 869h5v1h-5zM402 859h2v3h-2zM261 876h1v1h-1zM261 882h1v2h-1zM345 871h5v2h-5zM306 864h3v2h-3zM390 864h5v1h-5zM449 867h4v1h-4zM511 871h3v1h-3zM290 869h1v1h-1zM293 880h3v2h-3zM390 866h3v3h-3zM268 868h2v1h-2zM475 870h4v3h-4zM450 873h2v1h-2zM390 868h1v2h-1zM494 848h5v2h-5zM340 870h4v1h-4zM505 873h5v2h-5zM357 874h1v2h-1zM383 865h2v2h-2zM269 873h3v1h-3zM307 870h3v1h-3zM308 865h1v3h-1zM939 836h2v3h-2zM770 830h4v3h-4zM933 831h2v2h-2zM858 833h1v3h-1zM812 834h3v3h-3zM849 835h5v3h-5zM815 834h2v2h-2zM913 834h5v1h-5zM781 836h5v1h-5zM803 836h3v1h-3zM901 827h5v1h-5zM754 828h1v3h-1zM944 833h5v2h-5zM903 834h4v2h-4zM926 834h1v1h-1zM854 834h2v2h-2zM873 835h2v3h-2zM838 836h3v1h-3zM840 838h2v3h-2zM893 836h2v1h-2zM833 835h5v1h-5zM764 833h1v2h-1zM756 828h1v2h-1zM900 828h3v1h-3zM862 835h2v1h-2zM847 834h3v3h-3zM813 833h3v2h-3zM963 829h1v1h-1zM959 834h1v3h-1zM775 830h5v2h-5zM937 838h4v1h-4zM860 832h1v2h-1zM823 823h1v3h-1zM823 833h5v2h-5zM852 836h2v2h-2zM849 837h1v2h-1zM766 831h3v2h-3zM944 831h1v1h-1zM773 835h2v1h-2zM912 834h3v2h-3zM818 831h3v2h-3zM827 832h1v1h-1zM762 830h5v2h-5zM877 836h3v2h-3zM850 835h5v1h-5zM789 837h1v1h-1zM907 836h2v3h-2zM754 838h1v2h-1zM910 832h4v1h-4zM835 830h4v1h-4zM968 835h5v3h-5zM758 834h2v2h-2zM756 835h5v1h-5zM869 834h3v1h-3zM803 836h5v2h-5zM953 828h3v1h-3zM750 832h4v2h-4zM954 832h1v2h-1zM764 834h3v2h-3zM889 833h4v1h-4zM825 835h3v2h-3zM825 836h2v2h-2zM847 837h4v1h-4zM740 835h2v2h-2zM972 838h5v1h-5zM862 835h5v3h-5zM825 835h4v2h-4zM786 833h2v1h-2zM934 832h2v2h-2zM743 832h3v2h-3zM748 837h2v1h-2zM907 829h3v1h-3zM957 837h2v3h-2zM783 831h2v1h-2zM805 831h1v2h-1zM833 837h3v2h-3zM861 832h3v1h-3zM950 833h2v2h-2zM842 833h2v2h-2zM912 833h3v2h-3zM966 833h3v1h-3zM855 840h1v1h-1zM797 828h1v1h-1zM843 832h3v2h-3zM760 832h2v3h-2zM740 832h1v3h-1zM830 838h2v2h-2zM808 831h4v1h-4zM819 834h1v1h-1zM895 831h1v3h-1zM820 841h1v1h-1zM768 835h3v1h-3zM778 834h3v1h-3zM792 840h1v1h-1zM803 832h1v1h-1zM870 830h1v1h-1zM830 836h1v3h-1zM961 834h2v1h-2zM903 833h1v1h-1zM876 831h2v2h-2zM811 832h3v1h-3zM925 835h2v1h-2zM765 831h5v2h-5zM741 830h2v1h-2zM965 835h1v1h-1zM864 840h4v3h-4zM861 832h2v1h-2zM805 830h5v1h-5zM809 834h4v1h-4zM863 835h2v2h-2zM748 834h5v1h-5zM795 835h2v1h-2zM786 839h5v2h-5zM763 832h1v1h-1zM873 834h2v1h-2zM762 835h3v2h-3zM914 835h5v1h-5zM955 829h4v2h-4zM933 830h4v2h-4zM805 833h3v2h-3zM951 835h5v1h-5zM967 826h5v3h-5zM924 832h4v1h-4zM826 831h1v3h-1zM972 833h5v3h-5zM938 838h1v1h-1zM900 832h4v2h-4zM757 838h3v2h-3zM1092 834h4v1h-4zM1139 834h1v2h-1zM1118 834h5v2h-5zM1134 834h4v1h-4zM1170 832h5v1h-5zM1184 833h3v2h-3zM1163 831h3v2h-3zM1117 834h5v1h-5zM1164 834h2v2h-2zM1150 840h3v3h-3zM1066 830h3v2h-3zM1176 838h5v3h-5zM1124 830h1v1h-1zM1172 838h2v2h-2zM1175 833h5v2h-5zM1166 837h3v1h-3zM1131 829h5v1h-5zM1177 833h1v1h-1zM1138 832h3v2h-3zM1077 829h3v1h-3zM1137 833h3v3h-3zM1165 832h5v1h-5zM1108 832h2v3h-2zM1115 835h1v1h-1zM1108 837h2v2h-2zM1069 835h1v3h-1zM1068 832h5v2h-5zM1103 835h5v2h-5zM1103 828h3v3h-3zM1107 830h5v1h-5zM1122 831h2v2h-2zM1102 832h4v2h-4zM1144 837h2v3h-2zM1075 833h4v1h-4zM1164 839h5v1h-5zM1144 836h2v1h-2zM1120 833h4v3h-4zM1147 834h5v1h-5zM1164 835h3v1h-3zM1183 834h5v2h-5zM1172 828h3v2h-3zM1083 835h4v2h-4zM1148 837h4v1h-4zM1166 835h1v1h-1zM1151 836h2v1h-2zM1067 831h1v2h-1zM1112 827h4v3h-4zM1121 832h5v3h-5zM1146 834h4v3h-4zM1094 839h4v3h-4zM1129 831h2v3h-2zM1087 831h5v2h-5zM1184 831h4v1h-4zM1070 829h2v2h-2zM1080 835h3v1h-3zM1158 831h4v2h-4zM1136 827h3v1h-3zM1128 835h5v1h-5zM1136 831h3v2h-3zM1163 837h2v3h-2zM1081 832h3v2h-3zM1119 830h4v1h-4zM1073 835h1v2h-1zM1119 834h5v3h-5zM1137 829h1v1h-1zM1095 832h3v3h-3zM1089 833h3v1h-3zM1145 835h3v1h-3zM1075 834h3v3h-3zM1135 824h3v3h-3zM1155 829h3v1h-3zM1078 833h4v3h-4zM1113 835h4v2h-4zM1138 832h2v2h-2zM1107 834h1v3h-1zM1078 831h4v1h-4zM1135 837h2v2h-2zM1172 834h1v3h-1zM1087 834h3v1h-3zM1140 833h3v1h-3zM1066 834h5v3h-5zM1127 835h1v2h-1zM1150 836h1v1h-1zM1158 834h4v2h-4zM1075 836h4v1h-4zM1103 835h5v2h-5zM1077 830h1v1h-1zM1122 836h5v1h-5zM1177 833h1v1h-1zM1109 832h3v1h-3zM788 853h4v1h-4zM823 859h3v1h-3zM823 848h4v1h-4zM797 851h3v1h-3zM758 859h4v2h-4zM748 853h4v2h-4zM792 854h2v1h-2zM744 859h3v1h-3zM810 857h4v1h-4zM804 854h2v3h-2zM815 859h1v3h-1zM803 859h2v2h-2zM815 853h3v1h-3zM783 859h2v1h-2zM755 860h2v3h-2zM743 853h4v2h-4zM799 851h1v2h-1zM808 856h4v2h-4zM778 855h2v1h-2zM772 858h1v2h-1zM827 855h2v1h-2zM747 848h1v1h-1zM741 860h2v3h-2zM801 859h4v1h-4zM814 852h3v1h-3zM816 856h1v2h-1zM773 863h3v1h-3zM820 858h3v1h-3zM780 858h2v2h-2zM797 852h2v1h-2zM764 860h2v1h-2zM817 859h3v1h-3zM826 854h3v2h-3zM766 856h3v2h-3zM794 858h3v1h-3zM809 855h3v1h-3zM829 855h2v2h-2zM797 858h1v2h-1zM817 857h2v2h-2zM808 863h1v1h-1zM804 856h4v3h-4zM791 855h3v2h-3zM761 855h2v1h-2zM773 856h2v2h-2zM744 857h4v1h-4zM787 854h3v3h-3zM740 855h4v1h-4zM760 858h4v1h-4zM745 861h4v1h-4zM799 852h3v3h-3zM813 857h1v2h-1zM789 855h3v1h-3zM782 860h1v2h-1zM807 858h2v3h-2zM754 854h2v3h-2zM777 854h4v1h-4zM750 857h1v1h-1zM778 859h1v3h-1zM829 859h4v2h-4zM787 861h3v2h-3zM640 900h2v3h-2zM108 890h1v3h-1zM429 883h2v1h-2zM195 887h2v3h-2zM343 895h1v3h-1zM421 883h1v2h-1zM290 886h2v2h-2zM586 896h2v3h-2zM425 882h1v3h-1zM310 881h2v2h-2zM623 892h2v1h-2zM282 907h2v2h-2zM291 890h2v2h-2zM293 890h2v2h-2zM159 900h1v2h-1zM519 871h1v2h-1zM287 896h1v2h-1zM301 914h1v1h-1zM650 909h2v2h-2zM634 895h2v2h-2zM118 877h2v1h-2zM659 886h2v3h-2zM239 896h1v2h-1zM524 894h1v3h-1zM558 882h2v2h-2zM632 879h2v2h-2zM180 883h2v1h-2zM562 892h2v2h-2zM632 890h2v2h-2zM183 892h2v1h-2zM534 893h1v1h-1zM493 887h2v1h-2zM518 886h1v2h-1zM616 882h2v1h-2zM636 897h2v2h-2zM515 897h1v3h-1zM239 897h2v1h-2zM434 894h1v1h-1zM683 893h2v2h-2zM596 886h2v3h-2zM533 897h1v1h-1zM630 904h2v2h-2zM387 878h2v1h-2zM256 901h2v3h-2zM661 896h1v2h-1zM116 889h2v1h-2zM528 872h2v1h-2zM150 874h1v3h-1zM421 894h1v1h-1zM315 889h1v2h-1zM221 935h2v2h-2zM229 922h2v1h-2zM206 924h1v3h-1zM186 909h2v2h-2zM165 920h2v2h-2zM148 910h1v3h-1zM248 921h1v3h-1zM239 927h1v2h-1zM284 922h1v2h-1zM273 931h1v2h-1zM241 918h1v2h-1zM266 920h2v1h-2zM230 931h1v2h-1zM297 918h1v3h-1zM211 919h1v2h-1zM168 929h1v2h-1zM298 927h1v3h-1zM196 925h2v2h-2zM256 937h2v3h-2zM253 929h1v1h-1zM147 921h1v2h-1zM268 918h2v1h-2zM274 930h2v3h-2zM279 918h2v2h-2zM147 928h1v3h-1zM164 924h2v2h-2zM191 917h2v1h-2zM290 927h1v2h-1zM198 920h2v2h-2zM160 929h1v2h-1zM211 910h1v2h-1zM149 923h2v2h-2zM236 920h2v2h-2zM270 934h1v2h-1zM235 923h1v1h-1zM198 920h1v2h-1zM252 929h1v1h-1zM147 934h1v2h-1zM280 921h2v2h-2zM262 917h2v1h-2zM220 929h2v2h-2zM195 934h1v3h-1zM281 939h1v1h-1zM291 933h2v1h-2zM205 922h2v2h-2zM697 934h2v2h-2zM507 920h2v1h-2zM745 917h1v1h-1zM730 913h2v1h-2zM500 912h2v2h-2zM518 927h1v3h-1zM387 914h2v1h-2zM591 915h1v1h-1zM662 930h1v1h-1zM417 928h2v3h-2zM556 914h1v1h-1zM635 921h2v1h-2zM671 911h2v3h-2zM703 914h2v1h-2zM694 910h2v3h-2zM452 906h1v1h-1zM578 912h1v1h-1zM457 918h1v2h-1zM596 917h1v2h-1zM467 915h1v1h-1zM425 916h1v2h-1zM702 915h1v3h-1zM673 928h2v3h-2zM650 906h1v1h-1zM383 915h1v1h-1zM636 923h1v1h-1zM487 911h1v2h-1zM430 910h1v1h-1zM502 909h2v1h-2zM705 903h2v1h-2zM610 921h1v1h-1zM733 921h2v3h-2zM546 919h1v2h-1zM606 913h2v3h-2zM588 916h2v2h-2zM494 929h1v3h-1zM383 915h1v2h-1zM516 914h2v3h-2zM505 918h2v2h-2zM512 901h1v1h-1zM697 911h1v1h-1zM597 899h1v1h-1zM483 922h2v1h-2zM470 921h1v3h-1zM616 917h2v2h-2zM422 924h2v3h-2zM639 914h1v2h-1zM526 902h1v2h-1zM644 924h2v3h-2zM533 921h2v1h-2zM600 926h1v2h-1zM401 915h2v1h-2zM493 925h1v2h-1zM634 916h1v1h-1zM714 927h1v3h-1zM590 908h2v1h-2zM651 916h1v3h-1zM480 935h2v2h-2zM547 918h1v1h-1zM388 923h2v2h-2zM549 921h2v1h-2zM444 928h1v1h-1zM752 917h2v2h-2zM412 902h2v3h-2zM541 922h2v2h-2zM455 911h2v2h-2zM534 917h1v1h-1zM637 912h2v2h-2zM499 909h1v2h-1zM687 930h1v2h-1zM539 915h2v1h-2zM733 923h1v1h-1zM726 929h1v1h-1zM398 917h1v3h-1zM406 921h1v3h-1zM740 923h2v1h-2zM497 911h1v2h-1zM636 917h2v3h-2zM554 918h1v2h-1zM579 915h2v2h-2zM504 919h1v1h-1zM576 909h2v3h-2zM449 922h1v1h-1zM718 922h2v1h-2zM432 913h1v1h-1zM521 925h2v1h-2zM414 920h2v1h-2zM381 935h1v2h-1zM491 921h2v1h-2zM713 927h2v1h-2zM564 917h1v1h-1zM481 911h2v1h-2zM530 915h1v3h-1zM567 904h1v2h-1zM477 912h2v1h-2zM491 913h1v1h-1zM549 908h2v1h-2zM562 904h2v1h-2zM536 914h1v1h-1zM499 906h2v1h-2zM520 906h1v3h-1zM531 915h1v1h-1zM482 912h2v1h-2zM494 911h2v3h-2zM460 909h2v1h-2zM478 911h2v2h-2zM489 900h1v3h-1zM479 904h2v3h-2zM524 907h2v2h-2zM535 908h2v2h-2zM493 907h1v2h-1zM540 906h2v1h-2zM512 915h1v1h-1zM500 907h2v1h-2zM497 912h1v1h-1zM469 908h1v2h-1zM534 905h2v2h-2zM544 902h1v3h-1zM519 911h2v1h-2zM470 921h2v1h-2zM484 915h2v2h-2zM503 912h1v1h-1zM515 916h2v2h-2zM484 909h1v1h-1zM502 908h1v1h-1zM476 906h2v2h-2zM507 908h1v1h-1zM517 905h1v2h-1zM469 912h1v2h-1zM506 909h2v1h-2zM954 886h1v1h-1zM1053 893h2v1h-2zM1054 893h2v2h-2zM1059 895h2v3h-2zM1071 887h2v1h-2zM967 898h1v3h-1zM948 887h1v2h-1zM939 905h2v2h-2zM1060 903h1v2h-1zM935 893h2v3h-2zM1019 889h2v1h-2zM1024 898h1v3h-1zM964 891h2v1h-2zM950 906h2v1h-2zM1014 897h1v3h-1zM1056 893h2v3h-2zM1004 905h1v1h-1zM1058 896h1v3h-1zM1007 896h2v2h-2zM1071 887h1v2h-1zM1007 895h1v1h-1zM1025 895h1v1h-1zM1031 898h1v2h-1zM965 901h1v1h-1zM937 897h2v3h-2zM1027 893h1v2h-1zM974 894h2v2h-2zM1004 899h2v2h-2zM969 898h1v1h-1zM963 894h2v1h-2zM1060 895h1v1h-1zM980 894h1v3h-1zM1072 895h2v3h-2zM934 898h1v1h-1zM937 885h1v2h-1zM1027 889h1v2h-1zM1032 894h1v3h-1zM957 894h1v1h-1zM1017 889h2v3h-2zM1012 898h2v2h-2zM980 900h1v1h-1zM970 879h1v1h-1zM949 902h2v2h-2zM1072 890h2v2h-2zM961 895h2v1h-2zM997 893h2v1h-2zM1067 905h1v3h-1zM1003 910h2v1h-2zM957 900h1v1h-1zM961 880h1v2h-1zM1064 901h2v2h-2zM980 904h2v1h-2zM978 894h2v2h-2zM952 903h1v2h-1zM1025 894h1v1h-1zM1072 893h2v1h-2zM984 892h1v1h-1zM995 893h1v3h-1zM995 893h2v1h-2zM961 889h2v2h-2zM1004 909h2v2h-2zM962 886h2v3h-2zM987 899h2v2h-2zM1078 900h2v1h-2zM1008 901h1v1h-1zM967 894h1v1h-1zM1001 899h1v1h-1zM1044 892h1v1h-1zM1043 902h1v3h-1zM984 898h2v2h-2zM927 921h1v2h-1zM887 928h2v1h-2zM911 935h2v3h-2zM927 925h2v3h-2zM939 934h2v1h-2zM954 936h1v3h-1zM911 916h1v1h-1zM938 922h1v1h-1zM877 928h1v1h-1zM945 931h2v2h-2zM942 916h1v1h-1zM879 933h2v2h-2zM919 925h2v1h-2zM938 931h1v1h-1zM875 932h1v1h-1zM873 928h1v1h-1zM937 931h2v3h-2zM932 929h1v1h-1zM896 937h2v2h-2zM900 927h2v2h-2zM909 934h2v3h-2zM907 931h1v3h-1zM929 932h1v2h-1zM878 929h1v2h-1zM926 926h2v1h-2zM895 917h1v1h-1zM904 919h1v3h-1zM912 920h1v2h-1zM897 930h2v3h-2zM943 935h2v1h-2zM911 932h2v1h-2zM919 921h1v1h-1zM944 923h1v1h-1zM946 931h1v1h-1zM883 920h1v1h-1zM929 928h2v1h-2zM912 916h1v2h-1zM951 934h2v1h-2zM944 928h1v3h-1zM918 923h2v1h-2zM900 934h1v2h-1zM955 927h1v1h-1zM918 922h2v2h-2zM949 925h1v1h-1zM937 926h1v2h-1zM913 934h1v2h-1zM915 928h2v1h-2zM878 923h2v2h-2zM940 931h1v1h-1zM891 915h1v1h-1zM956 920h1v3h-1zM950 927h1v1h-1zM900 927h1v1h-1zM901 930h2v1h-2zM888 924h1v2h-1zM891 948h2v2h-2zM792 945h2v2h-2zM850 941h1v1h-1zM853 935h2v2h-2zM767 944h1v1h-1zM851 943h1v3h-1zM768 940h2v1h-2zM783 943h1v2h-1zM790 946h1v2h-1zM885 950h1v2h-1zM859 948h2v1h-2zM827 953h2v1h-2zM844 941h1v2h-1zM832 948h2v2h-2zM781 945h1v1h-1zM859 959h2v2h-2zM809 946h2v1h-2zM810 944h2v2h-2zM772 950h2v2h-2zM820 942h1v1h-1zM786 945h1v1h-1zM901 951h2v3h-2zM864 947h2v2h-2zM808 939h1v1h-1zM855 942h1v2h-1zM852 944h2v2h-2zM764 929h1v3h-1zM830 948h1v1h-1zM766 945h2v2h-2zM886 935h2v1h-2zM778 930h1v3h-1zM852 942h1v2h-1zM828 947h2v2h-2zM769 935h2v1h-2zM906 943h2v2h-2zM773 933h2v1h-2zM775 947h2v2h-2zM888 937h2v1h-2zM895 953h1v1h-1zM827 935h2v1h-2zM787 937h1v1h-1zM782 944h2v1h-2zM765 945h1v1h-1zM881 948h2v2h-2zM821 945h2v1h-2zM820 934h1v1h-1zM860 930h1v1h-1zM786 936h1v1h-1zM797 933h2v2h-2zM824 946h2v1h-2zM765 940h1v3h-1zM904 941h1v3h-1zM875 953h1v2h-1zM776 953h1v3h-1zM771 941h1v1h-1zM851 943h2v1h-2zM902 929h1v2h-1zM913 932h2v1h-2zM793 944h2v2h-2zM811 945h1v1h-1zM181 935h1v3h-1zM140 937h1v2h-1zM123 929h2v1h-2zM177 937h2v1h-2zM119 944h2v2h-2zM163 937h2v2h-2zM112 931h2v1h-2zM138 945h1v1h-1zM154 935h1v1h-1zM177 948h2v2h-2zM84 930h2v2h-2zM163 940h1v2h-1zM141 928h2v1h-2zM124 935h2v2h-2zM158 926h2v3h-2zM195 939h1v2h-1zM125 934h2v2h-2zM179 937h2v2h-2zM132 935h2v1h-2zM151 935h1v1h-1zM721 949h1v2h-1zM700 945h2v1h-2zM580 962h2v3h-2zM670 960h1v1h-1zM664 950h1v2h-1zM579 956h1v2h-1zM642 939h2v2h-2zM747 960h2v1h-2zM734 959h1v3h-1zM618 947h1v2h-1zM560 951h1v2h-1zM675 960h1v2h-1zM663 954h2v3h-2zM739 953h2v1h-2zM663 949h2v1h-2zM702 951h2v2h-2zM640 958h2v1h-2zM703 933h1v2h-1zM627 967h2v3h-2zM597 963h1v1h-1zM716 949h1v1h-1zM566 956h1v3h-1zM630 962h1v2h-1zM723 960h1v3h-1zM607 961h2v3h-2zM696 964h1v2h-1zM748 959h2v3h-2zM745 953h2v1h-2zM607 944h1v1h-1zM916 955h1v1h-1zM1075 950h1v1h-1zM1019 948h2v1h-2zM1093 946h2v2h-2zM1073 965h1v3h-1zM926 954h1v3h-1zM1010 949h2v1h-2zM987 949h2v1h-2zM968 951h2v1h-2zM1036 958h2v2h-2zM931 944h1v1h-1zM1033 960h1v3h-1zM947 942h1v1h-1zM1032 964h2v1h-2zM971 954h1v1h-1zM1052 952h2v1h-2zM1050 969h1v3h-1zM931 958h2v2h-2zM928 966h2v2h-2zM1281 902h1v2h-1zM1073 891h1v2h-1zM1088 942h1v2h-1zM1258 909h1v3h-1zM1048 933h1v2h-1zM1108 921h1v1h-1zM1260 927h1v2h-1zM1060 907h1v2h-1zM1069 932h1v1h-1zM1117 914h1v3h-1zM1073 952h1v1h-1zM1078 961h1v3h-1zM1023 881h1v3h-1zM1206 908h1v1h-1zM1126 933h1v2h-1zM1200 935h1v1h-1zM1232 882h1v1h-1zM1211 890h1v2h-1zM1190 927h1v2h-1zM1282 831h1v1h-1zM1281 891h1v3h-1zM1019 959h1v1h-1zM1009 924h1v1h-1zM1200 892h1v1h-1z"/>
<g fill="none" stroke="#000" stroke-linecap="round" stroke-linejoin="round">
<polygon fill="#000" stroke="none" points="979,813 981,790 983,763 990,730 996,700 1000,660 1001,620 1000,600 998,560 996,520 996,490 998,456 1006,440 1014,440 1020,456 1021,490 1023,520 1028,560 1039,600 1041,640 1043,700 1047,740 1052,763 1064,765 1066,790 1063,813"/><g transform="scale(.5)">
<path d="M1945 877l-9 0M1980 884l-6-6l-8-5l-7-6M1962 882l-9 0l-8 2M1936 877l-7 6l-6 6M1936 877l-8 1l-9 1M1976 847l2-9M1970 864l8-4l9-2M1976 847l-2-9l-2-9M1978 838l0-9l-1-9M1978 838l4-8l3-8M1949 849l-9-2l-9 0M1949 849l-5-7l-3-9M1931 847l-6 7l-7 6M1931 847l-8-4l-7-5M1926 799l-4-8l-6-7l-7-6M1932 806l-9-2l-9-2M1916 784l0-9l-2-9M1909 778l-9 0l-9 0l-9 2M1909 778l-5-7l-3-9l-5-7M1904 771l2-9l0-9M1896 755l-4-9l-5-7M1949 792l3-9l5-7M1945 809l8-4l9-2M1957 776l5-8l3-8l1-9l-2-9M1957 776l8-5l7-6l7-6l5-6l8-6M1979 759l8-3l8-5M2069 832l12 2M2034 838l7 6l5 7l3 9M2046 851l8 3l8 5M2049 860l6 6l6 7M2049 860l2 9l3 8M2069 832l0 9l1 9M2081 834l9-1l9 0l8-1l9-1M2090 833l8-3l8-4M2116 831l9-2l9-2M2116 831l9 3l9 0M2081 834l7 5l9 2l8 4M2097 841l8-4l9-3M2105 845l9-2l8-3M2105 845l7 6l7 6M2044 833l9 0l9-2l9 1M2053 833l7 6l5 7M2063 778l8-3l8-5M2055 781l-1-9l-2-9M2071 775l1-9l0-9M2079 770l3-8l3-9M2079 770l9-2l9 0M2019 722l-6-10l-5-11M2033 741l-8 4l-8 3l-9 2l-8 4l-8 4M2008 750l-8-4l-8-4M2008 701l-9-2l-9-3M1999 699l-4-8l-3-8M2008 701l-3-9l-4-8l-2-8M2005 692l3-8l2-9M2046 714l-1-11l-4-12M2045 726l-5-7l-8-4M2041 691l-7-6l-6-6l-8-5l-7-6M2028 679l-8 5l-8 5M2013 668l-6-6l-8-5M2041 691l-1-9l0-9l-3-8l-2-9M2040 673l-9-3M2027 811l9 3M2009 812l6 7l4 8M2036 814l8-3l9-1M2036 814l7 5l8 4M2043 819l8-3l8-5M2024 764l3-9M2024 764l-7-6l-7-6M2008 738l-1-9l-2-8M2008 738l-6-6l-8-5M2005 721l-7-6l-7-6M2005 721l0-9l-2-9M2018 746l1-9l-1-9l-8-5l-6-6M2018 728l0-8l4-9M1991 763l-3-8M1996 771l-8-2l-9 0M1988 755l-7-6l-8-5M1988 755l-1-9l-2-9M2018 734l6-6l6-7M2019 713l-2-9l-1-9M2019 713l7-6l7-5M2016 695l-4-8l-3-8M2016 695l2-8l3-9M2026 716l7-5l7-5l9-3M2026 716l8 3l8 3M2049 703l7-5l6-6M2049 703l9-1l9-2M2002 733l3-8l2-9M2002 733l8-4l7-6M2007 716l-2-9M2007 716l3-8l5-8M2033 736l5 8l7 6M2038 744l7-5l9-3M2054 726l6-7l7-5l7-6l8-4M2060 719l3-8l2-9M2082 704l8-4l9-3M2082 704l9 3l9 0M2054 726l9 0l9 1l8 3M2072 727l7 6l7 5M2080 730l9-1l9 0M2080 730l6 7l4 8M2000 697l7-9M1991 706l8 3l9 2l8 4l9-1l9-2M2016 715l7 6l6 6M2007 688l-2-9l-4-8M2007 688l-1-9l-2-9l-3-8l-5-8M2004 670l2-9M2007 688l7-6l7-5l4-9l4-8M2025 668l8-2l9-2M2021 677l9-3l9 0M2081 918l7 6M2098 887l-5-8l-8-1l-9 0M2111 866l2-9l1-9l1-8M2113 857l3-8l6-7M2132 868l5-7l7-6M2126 875l2-9l1-9M2137 861l7 5l8 5M2144 855l2-9l-1-9M2144 855l9-1l8-2M2043 852l-9-3M2052 854l-3-8l-1-9M2034 849l-9-1l-8-2M2034 849l-8-4l-8-2M2022 840l-5 7M2029 835l4 8l2 8M2017 847l-4 9l-5 7M2017 847l-8 5l-7 5M1979 827l-6-7l-5-7l-6-7M1973 820l4-8l1-9M1962 806l-7-5l-8-4M1962 806l1-9l-1-9M1949 846l-9 8l-11 6l-10 6M1969 833l-1 9l-3 9l-5 7l-3 9M1965 851l-2 9l-4 8M1957 867l-1 9l-4 8l-5 8M1957 867l-5 7l-4 8l-5 8M1929 860l-9 0l-9-2M1919 866l-4 8l-3 8l0 9l0 9M1912 882l5 8l3 8M1912 900l4 8l5 8M1912 900l-4 8l-3 9M1919 866l-9 3l-8 4l-7 5l-7 6l-7 6M1895 878l-9 3l-8 4M1953 821l-9-1l-9-1l-8-3M1962 821l-6-6l-6-7M1944 820l-3-8l-2-9M1927 816l-9-1l-9-1M1918 815l-8 4l-9 1M1927 816l-9-3l-8-2l-8-4l-9-3l-9-2M1902 807l-7-6l-6-6M2129 853l9 2M2112 847l8-5l7-6M2138 855l9-1l8-3M2138 855l8 4l7 6M2123 797l0-9l0-9l-5-8l-6-6M2123 779l4-8l3-9M2143 760l4-8l4-8M2142 769l6-6l5-8M2151 744l0-9l1-9l3-9l3-8M2155 717l6-6l7-6M2151 744l8-4l6-6M2158 767l6-6l8-5l9-3M2153 775l2-9l2-9M2181 753l3-8l2-9M2181 753l5-7l7-6l7-5l6-7M2186 746l2-9l0-9M2206 728l5-8l5-7M2206 728l8-3l8-4M2181 753l9 2l8 4l6 6l9 1l9-2M2204 765l4 8l1 9M2054 797l-9-1M2089 795l-7-5l-7-5M2045 796l-7-6l-5-7M2045 796l-8 5l-6 7M2045 796l-7-5l-8-6l-8-3M2115 765l8-5l5-7M2098 771l4 8l5 7M2128 753l2-9l4-8l5-7l4-8l5-8M2139 729l9-2l9-3M2128 753l7-6l4-8l5-8M2135 747l8-2l9-4M2144 731l2-9l2-9M2144 731l5-7l7-6M2078 718l7-6l6-6l8-5M2091 706l9 3l9 1M2099 701l4-8l2-9M2099 701l9 1l9-1M2068 703l-3-9l-2-8M2068 703l8-4l8-3M2063 686l-8-3l-9-4M2063 686l1-9l1-9l9-1l9 0M2081 707l0-12l-4-9l-1-9l0-9l2-8M2077 686l2-9l-1-9M2169 792l9 1l9-1M2145 781l1 9l-2 9l-1 9M2146 790l-9 2l-9 3M2143 808l0 9l-1 9M2143 808l-7 6l-6 7M2187 792l6-6l6-7M2187 792l8-4l9-3l8-3l8-4l8-4M2212 782l9 2l9-1M2187 792l9 0l9 3l9-1M2196 792l7-5l8-5M2214 794l7-5l8-5M2214 794l8 3l9 2M2179 820l7-6l6-6M2203 842l7 5l9 4l8 2l8 4M2203 842l9 2l8 2M2235 857l5 8l3 9M2235 857l9 0l9 3M2235 857l6 7l4 8l6 7l9 1l8 4M2251 879l5 8l6 6M2201 844l7 6l9 3l7 5l8 4l9 2M2208 850l6 7l7 6M2232 862l3 9l3 8M2241 864l9 0l9 2l8 3M2241 864l6 7l7 5l8 4l6 6M2254 876l2 9l3 9M2268 886l8 5l8 5M2268 886l6 8l5 7M2122 729l-6-7l-5-8M2122 729l1-9l-2-9M2111 714l-5-6l-7-6M2111 714l1-9l1-8M2127 717l1-9l-3-9l5-8l3-8M2115 683l4-8l3-8M2115 683l-7-5l-8-5l-9-1M2224 695l10-8M2192 711l9 4l8 4l8 3l8 5l6 6M2201 715l2 8l1 9M2217 722l8-4l9-1M2231 733l8 5l8 3M2231 733l7 6l7 5l8 5M2238 739l5 7l8 5M2224 695l9 3l9 2l9 1M2242 700l2-9l4-8M2251 701l8 4l6 6M2234 687l3-8l3-8l1-9l2-9M2237 679l9-2l9-1M2246 677l8 4M2237 713l10 6l11 7l7 9l5 11M2216 701l9-4M2237 713l8-3l9-1l9-2l8 3l9 1M2258 726l7 4l9 3l8 3l9 2l9 1M2282 736l8 6l8 3M2270 746l6 10l9 9l9 7l10 7l10 7M2285 765l7-5l7-6M2304 779l8-5l9-2M2314 786l9 1l9 0l9-1l9-1M2332 787l7 6l6 6M2350 785l9 0l9-1M2350 785l8 2l9 0M2314 786l3 8l5 8l5 7l9 3l9 0M2327 809l1 9l2 9M2270 746l1 9l3 8l1 9l4 9l5 7M2271 755l-1 9l0 9l-1 8M2270 773l7 6l5 7M2269 781l3 9l3 8M2269 781l-7 6l-8 4M2275 772l9 0l9-3M2284 788l7 5l7 6M2284 788l2 9l2 8l3 9M2288 805l8 4l9 1M2291 814l7 5l9 3M2291 814l-4 8l-3 9M2049 806l-8-9M2082 828l-3-8M2065 823l2-9l1-9l-2-9M2068 805l-8-4l-9-2M2066 796l-5-7l-7-6M2066 796l4-7l6-7M2070 789l2-9l3-9M2041 797l-9-1l-9 2M2041 797l-7-6l-8-4l-8-5M2034 791l-8 4l-8 4M2018 782l-9 0l-8-1M2018 782l-6-7l-7-5M2041 797l-2-9l-1-9l0-9l-4-8l-5-8M2038 770l2-9l4-8M2126 749l7-10M2111 781l-3-9l-2-8l-1-9M2106 764l-6-7l-6-6M2105 755l-6-6l-6-7M2105 755l0-9l-1-9M2133 739l4-8l6-7l7-5l9-3M2143 724l8-3l9 1M2159 716l7-4l8-5M2159 716l8 3l8 4M2133 739l6-6l7-7l4-8l7-6l5-7M2139 733l9-2l9-1M2150 718l3-8l1-9M2162 705l3-9l4-8M2165 696l8-2l9-1M2162 705l8-3l9-1M2121 753l8-5l7-5M2113 757l2-9l0-9M2136 743l0-9l-2-9M2136 743l1-9l-1-9M2136 743l9-1l8 2M2127 730l8-4l8-4l8-4M2118 732l7-5l8-4M2135 726l8 5l7 6M2151 718l3-9l3-8l4-8l0-9l0-9M2151 718l8-3l7-6l5-7M2166 709l-4-8l-6-6M2171 702l7-6l6-7M2101 689l-3-11l1-12l2-12l4-8l-1-9M2104 660l-9-8l-9 0l-9 0l-9 2l-6 7l-6 7M1959 900l-5-7l-4-9M1965 907l-2-9l-2-8M1950 884l4-8l6-7M1950 884l-5-6l-4-9M1950 884l3-8l6-8M1949 904l-5-8l-2-9M1926 898l-9 0l-9 3l-9 3l-6 6l-4 8M1899 904l-9-1l-8-4M1926 898l-7-6l-8-6l-5-7l-6-7l-6-6M1919 892l-2-9l-3-8M1894 866l1-9l-1-9M1894 866l-9-3l-7-5M1885 863l-2-9l0-9M1894 866l-5-7l-6-7M1891 853l-12-3M1938 877l-8 4l-8 5l-7 5M1938 877l-5 7l-4 8M1915 891l2 9l3 9M1915 891l-3 9l-4 8M1915 891l-9 2l-9 0M1902 857l-6 6l-6 7l-3 8M1890 870l-9 0l-9 2M1887 878l-1 9l1 9M1887 878l-8 5l-9 3M1879 850l-8 3l-9 2l-9 0l-9 0M1871 853l-3 8l-1 9M1844 855l-8-4l-7-6M1844 855l-8 5l-6 7M1844 855l-9 0l-9-1M1879 850l-4-8l-2-8l-3-9l-2-9l-5-7l-5-8M1873 834l3-9l2-8M1863 809l-9-1l-9 1M1858 801l-7-5l-6-7l-5-8M1851 796l-2-9l-4-8M1840 781l-6-7l-6-6M1840 781l0-9l-3-8M1858 801l-2-9l-4-8l-3-8M1852 784l-7-5l-8-5M1849 776l2-9l2-9M1979 793l5-11M1964 825l9 2l8 3l8 4M1981 830l2 9l1 9M1989 834l9 0l9-1M1989 834l3 9l3 8M1979 793l7-7l7-5M1984 782l0-9l2-9l0-9M1984 773l7-6l8-4M1986 755l-4-8l-6-7M1986 755l2-9l0-9M1984 782l8-5l9-1l9 0M1992 777l7 6l7 6M2010 776l9-1l9 0M2010 776l8 4l9 2M1895 780l-12 3l-12 1l-12 2M1930 781l-5-8l-6-6l-6-7l-7-6M1919 767l-9 3l-8 2M1906 754l-9 0l-9-1M1906 754l-5-7l-5-8M1883 783l-7-6l-8-4M1859 786l-9 1l-9 1l-9 0l-8 2l-8 4l-7 6M1824 790l-5 8l-6 7M1809 800l-9-2l-8-4M1809 800l-5 8l-5 7l-6 7M1799 815l2 9l-2 9M1793 822l-3 9l-5 7M1793 822l-9 3l-9 1M1809 800l-7 6l-6 7M1859 786l-12 2l-11 3l-12 4l-10 5l-9 8M1847 788l-9-1l-8-3M1824 795l-8-3l-9-3M1805 808l-8-4l-8-5M1805 808l-5 8l-2 9l0 9l4 8l4 7M1798 834l-5 7l-7 6M1805 808l-8 4l-9 3l-9 1l-9 1M1797 812l-4 8l-3 9M1770 817l-5 7l-5 8M2028 800l-4-8l-4-8M2044 822l0-9l2-9M2024 792l3-8l4-8M2020 784l-7-6l-5-8l-5-7l-8-4l-9-2M2003 763l-4-8l-6-7M2020 784l-3-8l-3-9l-4-8l-6-6M2014 767l-9-3l-8-3M2004 753l-9-2l-8-3M2004 753l-8-5l-7-6M1996 748l-8 3l-9 3M2004 753l-4-9l-2-8M2000 744l7-5l8-5M2081 769l11-5l12-1l12-1M2059 779l8 5l8 3M2104 763l6 6l6 6l6 8M2110 769l8 4l9 2M2116 762l8-4l7-6l7-5l8-4l9-2M2124 758l8 3l9 2M2138 747l3-9l0-9M2155 741l6-6l5-8M2155 741l9 2l8 1M2116 762l7 6l6 7l5 7l3 8M2123 768l8 4l7 5M2137 790l7 6l4 8M2137 790l-1 9l-3 8M2030 725l-6-7l-5-7l-4-8l-5-7M2030 725l2-8l1-9l1-9l1-9l-1-9M2015 703l-9 0l-9-3M2010 696l-6-7l-9-4l-8-3M1995 685l-1-8l1-9M2010 696l1-9l1-9l-4-9l-5-7M2044 660l-4-11M1985 984l5-7M1980 1002l7-6l7-6M1990 977l-4-9l-6-6M1990 977l1-9l2-9M1990 977l7-5l8-5l5-7M1953 956l5-8l5-7M1953 956l9 2l8 4M1963 941l4-8l2-9M1963 941l9-3l7-6M1915 949l-8 3l-9 2l-9 0l-8 4l-9 1M1889 954l-9-1l-9-1M1880 950l-12-2l-12-4M1903 949l-5-7l-7-6M1880 950l-7 7l-4 7M1856 944l-9 1l-9 0l-8-3l-9 0M1847 945l-7 5l-8 4M1821 942l-9 1l-9 2M1821 942l-9-1l-9-3M1856 944l-7-5l-7-5l-7-6M1849 939l1-9l-1-9M1835 928l-9-2l-9-1M1835 928l-7-6l-6-6M1910 923l-2-9l-4-8M1914 941l-5-8l-5-8M1904 906l1-8l-1-9M1904 906l-7-6l-4-8M1904 906l1-9l2-8M1983 980l6-7M1969 990l9 1l9 1M1983 980l8-5l9-2M1989 973l3-9l4-7M1989 973l9-3l9-1M1961 963l-6-7M1972 929l3-8l4-8M1972 929l-1-9l2-8M1979 913l3-9l3-8M1979 913l7-6l7-6M1954 911l-5-8l-4-8M1960 917l3-9l4-7M1945 895l-6-6l-6-7M1945 895l0-9l2-9M1974 909l4-9M1969 916l9 3l8 3M1978 900l3-8l6-7M1978 900l5-7l7-6M1942 939l-6-6M1947 946l-8-1l-9 0M1936 933l-9-1l-9-2M1936 933l-4-9l-2-8M2001 921l6-7M1997 929l-5-8l-5-7M2007 914l0-9l2-9M2007 914l7-5l6-7M2064 913l9-1l8-2l9-3M2048 921l3-9l1-8M2073 912l3-9l3-8M2090 907l6-6l5-8M2090 907l8-3l9-4l7-4M2107 900l4-7l5-8M2114 896l3-9l0-9M2114 896l9-1l9 0M2070 945l9 8l9 8l10 6M2052 930l8-4l7-6M2060 926l-2-9l-5-8M2079 953l9 0l8 2l8 4l9 1l9 0M2104 959l5 8l3 8M2098 967l9 2l8 3l9 1l9-2l9-3M2107 969l-1 9l-2 9M2133 971l6-6l8-5M2142 968l7-5l8-5M2142 968l8-3l9-1M2098 967l3 9l2 9l1 9M2101 976l-6 6l-4 8M2104 994l5 7l4 8M2104 994l0 8l-1 9M1875 922l-12 1M1910 932l-1-9l2-9l0-9M1909 923l5-8l4-8M1875 922l-7 6l-6 7M1863 923l-7 6l-5 7l-4 8l-4 8M1851 936l-9 3l-8 3M1843 952l-1 9l-2 9M1843 952l-9 3l-9 1M1863 923l-8-3l-9-1l-9-2l-9 0M1855 920l-9 2l-9 0M1828 917l-8 4l-7 6M1828 917l-7-5l-6-7M1923 875l0-9l-1-9M1920 893l8-4l8-5M1922 857l-4-8l-5-7M1922 857l3-8l1-9M1905 849l-9-2l-9-3M1896 847l-5-7l-8-6M1912 830l2-9l5-8l2-8l4-9M1919 813l-3-8l-3-9M1925 796l2-8l3-9M1925 796l8-3l7-6M1908 803l-3-8l-1-9l0-9M1911 821l4-8l1-9M1904 786l5-8l5-8M1904 777l-3-9M1904 777l1-9l0-9M1931 799l4-11l4-11l2-12M1924 809l8 3l8 3M1939 777l6-7l5-8M1941 765l-4-8l-1-9l-3-9l0-9M1936 748l-7-6l-8-4M1933 730l0-9l0-9M1933 730l5-7l6-7M1941 765l6-7l8-5l8-3l9-3M1955 753l8 3l8 5M1972 747l5-7l5-7M1972 747l9-1l9-1M1850 926l-8 3M1858 922l-5 7l-3 8M1842 929l-9 3l-8 4M1842 929l-9 0l-9-2M1838 905l-8-5M1845 910l-2-9l-4-8M1830 900l-9-1l-9 1M1830 900l-3-9l-3-8M1786 918l-9-2l-9 0l-8-2M1786 918l-5 7l-4 8M1760 914l-5-8l-4-8M1760 914l-9 1l-9 4l-7 4M1751 915l-7 6l-8 5M1735 923l-5 8l-5 8M1735 923l-9 0l-9-1M1760 914l-8-4l-7-6l-7-6l-9 0l-9-1M1738 898l-5-7l-7-6M1791 903l-5-8l-2-9M1791 903l7-5l6-7M1784 886l-7-6l-4-8M1784 886l1-8l1-9M1902 846l2-9l4-7M1887 869l9 2l9 1M1908 830l-3-9l-4-8M1908 830l2-9l1-9M1908 830l6-7l7-6M1914 823l9 1l9 0M1856 814l-8-4l-8-4l-9-3M1848 810l-5-7l-6-7M1831 803l-9 1l-8 2l-8 4M1831 803l-8-2l-9 0M1854 797l6-7l4-7l3-9M1860 790l-4-8l-2-9M1867 774l-1-9l-1-9M1867 774l7-5l9-3M1841 784l-4-8l-1-9l0-9l1-9l-2-9l-5-7M1837 749l3-9M1850 779l-3-8l-1-9l-1-9M1834 869l-7 7l0 9l-2 9M1827 876l-8 3l-8 3M1817 859l-9 2M1802 851l0-9l0-9M1791 847l-9 2l-9 0l-9 0l-7 6l-6 7M1764 849l-9 0l-9-2M1791 847l-7-6l-5-7l-6-7l-7-6M1784 841l3-9l4-8M1766 821l-7-6M1906 787l12-4M1878 816l9-1l8-4M1878 816l6 7l6 7M1895 811l7-5l8-5M1895 811l9 0l9 0M1897 795l5-8l3-8M1918 783l5-7l6-7l6-6M1929 769l4-8l5-7M1935 763l6-7l6-7M1935 763l8-5l7-6M1918 783l9-1l8-1l9 1l9 1l9 3l8 3M1935 781l5-8l7-6M1962 786l2 8l2 9M1970 789l9-2l9-2M1970 789l8 5l7 4l8 4M1985 798l9-1l9 1M1993 802l9-1l9 1M1993 802l3 9l1 9M1832 755l-7-10M1831 724l6-10l7-6M2031 1027l8 4M2005 1021l4-8l4-8M2031 1027l0 8l-2 9M2039 1031l9-1l9-3l8-2M2057 1027l0-9l3-8M2065 1025l9-4l6-6M2065 1025l9 4l9 1M2039 1031l7 6l5 7M2057 982l8-3l9-4M2050 987l6 6l8 6M2074 975l7-5l6-7l7-5M2081 970l0-9l2-9M2074 975l9 1l9 1l9 0M2081 996l4-9l1-8M2116 989l12-1l12 0M2104 990l8 5l6 6M2128 988l8-4l9-2M2140 988l9-1l9 0l9 2l8-2l8-4M2167 989l6 7l8 4M2140 988l9 2l8 4l7 5l9 3l8 3M2164 999l2 9l1 9M2112 1013l11 6l12 3M2103 1006l9 2l8 1l9 0M2112 1008l4 7l5 8M2129 1009l8-5l5-7M2129 1009l9 1l9 2M2135 1022l7-6l8-3M2135 1022l9-2l8-4l8-4l8-4M2144 1020l1-9l0-9M2168 1008l4-8l4-8M2168 1008l9 1l8 3M2135 1022l8 2l8 5l8 4l9 0l9 1M2159 1033l5 8l6 6M1987 979l3-8M1976 994l8 2l8 5M1990 971l-3-9l-4-7l-2-9l-6-7l-8-5M1981 946l1-9l1-9M1990 971l6-7l7-5M1984 955l9-8l8-9M1972 976l-4-8l-4-8M1993 947l9 2l8 4M2001 938l2-9l5-8M2001 938l7-6l6-6l7-6l6-7M2014 926l-1-9l-3-9M2027 913l2-9l4-8M2027 913l8-3l7-6M1937 946l-9-1l-9 0l-9 0M1946 949l-6 7l-5 7M1910 945l-8 4l-7 5M1910 945l-8 4l-9 1l-9-1M1902 949l-6 6l-6 8M1884 949l-7 5l-8 4M1884 949l-7-5l-8-4M1910 945l-9 0l-8 2l-9 0M1893 947l-7 5l-8 5M1884 947l-9 3l-9 1M1884 947l-9-2l-9-1M1935 921l-3-9l-2-8l-1-9l-2-9M1932 912l-7-5l-8-4M1927 886l-3-9l-3-8M1927 886l0-9l3-9M1907 898l-7-9l-6-11l-4-11M1925 914l-1-9l2-9l0-9l-2-9M1924 905l9-1l9-2M1924 878l-5-7l-7-5M1924 878l1-9l1-8M1900 889l-8-5l-8-3l-9-4M1890 867l-3-9l-2-8l1-9l0-9M1885 850l-7-6l-6-6M1886 832l-3-9l-5-7M1886 832l7-6l8-4M1890 867l2-9l2-9l0-9l0-9l-6-7l-3-8M1894 831l4-8l4-8M1926 886l-5-11l-4-11M1929 898l3-8l6-7l6-7M1938 883l9 1l9 3M1944 876l5-8l3-8M1944 876l9-2l8-4M1917 864l-1-9l0-9M1917 864l-6-7l-5-7l-3-9l-1-9M1911 857l-9 0l-9 1M1902 832l-7-5l-9-3M1902 832l-6-6l-5-7M1902 832l1-9l3-8M1917 864l3-8l5-8l6-6M1920 856l-6-6l-8-4M1931 842l4-8l2-9M1931 842l8-5l8-4M1904 1041l-5 8M1909 1034l-8-3l-9-2M1899 1049l-3 8l-3 8M1899 1049l-8 4l-9 2M1897 1058l1 8l1 9l2 9M1898 1066l-3 9l-1 9M1859 1058l-9 0l-9 2M1859 1058l-6-7l-7-6M1841 1060l-5 8l-5 7M1841 1060l-9 3l-8 4M1841 1060l-9 0l-9 0M1832 1060l-5-7l-5-8M1851 1097l-1 9l0 9M1854 1079l6 7l7 6M1851 1097l-7 4l-9 2M1850 1115l-6 6l-8 5M1850 1115l4 8l5 7l6 7M1859 1130l-3 8l-3 9M1865 1137l7 5l8 5M1865 1137l3 9l4 7M1850 1115l-4 8l-5 7M1841 1077l-9 0l-9-2M1849 1075l-8-5l-8-3M1823 1075l-9 4l-7 5M1823 1075l-7-5l-8-6M1856 997l-8-5M1873 1002l-7 5l-5 8M1856 997l-2-9l-3-9M1848 992l-9 1l-9-1M1848 992l-4-8l-4-8M1845 1026l-9 1M1839 1062l0 9l1 9M1839 1062l-5 8l-2 9M1840 1080l6 7l6 7M1840 1080l-3 9l-5 8M1823 1051l-9 4l-6 6l-7 6M1814 1055l-8 2l-8 4M1851 947l-5-7M1857 954l-9 0l-9 0M1846 940l-8-4l-9-2M1846 940l0-9l2-9M1846 931l-5-8l-6-6M1857 934l-6-7M1863 940l-1-8l-5-8M1851 927l4-8l1-8M1851 927l-8-3l-9-3M1851 927l-2-8l-2-9M1881 926l-4-8l-1-9M1888 910l3-9l4-8M1884 918l-4-8l-5-8M1891 901l-3-8l-2-9M1895 893l4-8l4-8M1895 893l8-5l9-2M1888 921l7-6l8-5l4-8l6-7M1903 910l9 0l9-1M1787 947l-5-7l-4-9M1787 947l-9-1l-9 0M1778 931l-5-7l-5-8M1778 931l-2-8l-2-9M1756 954l-8-4M1732 952l-9-1l-9 2l-8 1M1732 952l-6 6l-5 8M1706 954l-7 7l-7 6M1706 954l-9-3l-8-2M1730 940l-2-9l-1-9l-3-9M1730 940l-8-5l-6-6M1727 922l4-8l1-9M1724 913l-8-4l-7-5M1724 913l-1-8l2-9M1739 918l-9-1l-9-1l-9 2M1756 925l-9 0l-9 2M1721 916l-7 6l-7 5M1712 918l-8 4l-7 6l-7 4l-7 6l-7 6M1690 932l-9-2l-9-1M1712 918l-9 1l-9 0l-9 1M1703 919l-7-4l-9-4M1685 920l-7-6l-5-6M1685 920l-8 3l-7 5M1685 920l-9 1l-9 0M1737 888l3-9l2-8l5-8M1742 871l9 2l9 3M1747 863l4-8l5-8M1747 863l6-7l7-6M1722 869l-4-11l-5-11l-6-10l-5-11l-3-12M1718 858l2-9l1-9M1751 907l-4 8l-5 7l-4 9M1751 907l-9 1l-8 3M1738 931l0 9l-1 8M1738 931l-7 5l-7 5M1717 900l-7 6l-6 6M1717 900l-9 0l-9 3l-8 2l-8 4l-7 6M1699 903l-9-2M1676 915l-1 9l-4 8M1675 924l-8 4l-8 4M1676 915l-9 1l-9 2M1717 900l-9-2l-9 1l-8 3l-8 5l-8 4l-7 5M1699 899l-5 8l-4 8M1668 916l-9-2l-9-1l-8-3M1650 913l-4-8l-2-9M1771 820l1-12l1-12M1760 854l-3-9l-5-8l-2-8l-3-9l-6-6l-7-6M1771 820l8-5l8-5l7-6M1779 815l9 2l9-1M1794 804l4-7l6-7M1794 804l9-1l9 0M1773 796l-7-5l-6-7l-7-6M1773 796l6-11l8-9l6-10l5-11l4-11l1-9M1709 974l-10 7l-8 9M1748 947l-5 8l-3 8l-3 9l-3 8l-5 7M1743 955l-9 0l-9 0M1737 972l2 9l-2 8M1729 987l-4 9l-2 8M1729 987l-7 7l-6 6l-7 5M1722 994l-8 3l-9 1M1709 1005l-4 8l-1 9M1709 1005l-8 4l-8 5M1730 963l0 9l1 9l-1 9M1731 981l-5 8l-5 7M1730 990l2 9l-2 9M1730 990l-3 8l-4 8M1709 974l-5 7l-4 8l-6 7l-6 7M1704 981l-9 3l-7 5M1688 1003l-5 7l-6 6M1688 1003l-9 2l-8 5M1691 990l-9 0l-9 2l-6-7l-7-6M1691 990l-3 8l-3 8l-1 9l-1 9l0 9l1 9M1688 998l2 9l2 9M1684 1015l6 7l6 7M1684 1042l7 7l5 7M1691 1049l9 2l9 0M1684 1042l-2 9l-2 9l0 9M1680 1060l-8 5l-6 6M1680 1069l4 7l4 9M1680 1069l-4 8l-1 9M1691 990l-9 1l-9 1l-9 1l-9-1l-9-1M1682 991l-6-6l-5-8M1664 993l-7-5l-9-3M1646 991l-9 0M1646 991l-6-7l-7-4l-8-5M1633 980l-9 3l-8 4M1704 934l-11 4l-12 1M1728 928l-5-8l-6-6l-7-6M1717 914l-3-9l0-9M1710 908l-5-8l-3-8M1704 934l-6-6l-6-7M1681 939l-8 4l-9 1l-3 8l-4 8M1664 944l-7 5l-9 3M1664 944l-9-3l-8-2M1681 939l-8-2l-9-2l-9-1l-9 0l-9-3M1655 934l-8-5l-6-6M1712 906l-2-9l1-8M1835 825l-3-12l-4-11M1837 837l-9-2l-8-3l-9-3l-9 2l-7 5M1811 829l-5-7l-7-6M1828 802l-8-4l-8-3l-8-4M1812 795l-9-2l-9 1M1828 802l-7-6l-7-5l-7-5l-8-5l-8-5l-8-3M1814 791l-1-9l-4-8M1813 782l-8-4M1809 774l2-9l-1-9M1799 781l-3-9M1828 802l-1-9l-2-9l0-9l1-9l1-9l2-9M1827 793l1-9l1-9M1829 748l7-5l8-5M1794 859l-5 11l-8 9l-5 11M1798 847l4 8l3 9l6 7M1802 855l8 4l9 2M1811 871l-4 8l-3 9M1811 871l6 6l5 8M1811 871l3 8l1 9M1814 879l-3 9l-1 9M1776 890l-9-2l-9-3M1776 890l-1 8l-1 9l-2 9l-4 8M1774 907l-8 5l-8 5M1768 924l-3 9l-2 9M1765 933l-7 5l-7 7M1768 924l-7 6l-4 8M1761 930l3 9l2 9M1776 890l-8 4l-7 6l-7 5l-8 5M1768 894l-9 0l-9 3M1754 905l-4 8l-6 7M1746 910l-4 8l-5 7M1742 918l2 8l4 9M1746 910l-8 3l-8 4M1738 913l-1 9l-1 9M1779 804l-12 3l-12 2M1767 807l-4-8l-5-8M1755 809l-8 5l-6 6l-5 8l-2 8M1747 814l-8 3l-8 3l-9 3l-8 3l-8 5M1755 809l-9 1l-9 0l-8 2l-9 2M1737 810l-1 9l1 9M1982 1252l-6-6M1995 1220l8-3M1977 1195l-4-8l-3-9M1980 1204l7-7l5-6M1973 1187l3-8l2-9M1970 1178l-8-4l-7-4M1962 1174l-7 5l-8 5M1970 1178l0-9l1-8M1995 1187l3-9l4-8M1987 1203l9-1l8-2M2002 1170l2-8l3-9l1-9M2002 1170l5-7l7-6M1958 1207l2-9M1959 1234l7-6l8-3M1960 1198l-2-9l-3-8M1960 1198l0-9l0-9l1-9M1960 1189l-6-6l-6-8M1961 1171l-4-8l-2-9M1961 1171l4-8l4-8M1960 1198l7-6l6-6M1911 1199l-9 1l-9 2l-6 7l-5 8M1893 1202l-9-3l-8-4M1858 1178l-12 1l-12 3M1881 1173l-7-6l-6-7l-7-5M1868 1160l-7 5l-9 4M1861 1155l-9 0l-9-1M1861 1155l-5-8l-4-8M1834 1182l-9 2l-8 3l-9 2M1825 1184l-6-6l-7-6M1808 1189l-9 2l-8 4M1808 1189l-9-2l-8-2M1834 1182l-8-4l-9-1l-9-2M1826 1178l-5 8l-6 7M1808 1175l-8 4l-7 5M1808 1175l-8-3l-7-5M1880 1140l-4-11l-5-11M1888 1163l-3-9l-1-9l-2-8M1885 1154l-6-6l-7-6M1882 1137l-5-8l-7-5M1882 1137l1-9l-3-9M1871 1118l-7-5l-5-8l-3-9l-2-8M1864 1113l2-9l5-8M1854 1088l-6-6l-5-8M1854 1088l3-9l2-9M1871 1118l2-8l0-9l3-9l4-8M1873 1101l-2-9l-4-8M1880 1084l3-8l5-8M1880 1084l5-8l5-7M1980 1204l10-7M1952 1212l3-8l1-9M1955 1204l-7-7l-5-7M1956 1195l-3-9l-3-8M1956 1195l8-5l8-4M1990 1197l2-9l3-8l0-9M1992 1188l-6-6l-8-5M1995 1171l-6-8l-5-7M1995 1171l3-9l2-9M1990 1197l9 1l8 2l8 5l9 3l8 3M2015 1205l6 6l8 5M1924 1181l-5-8M1931 1187l4-9l1-9M1919 1173l-6-6l-7-5M1919 1173l-1-9l-2-8M1936 1143l2-9l-1-9M1902 1111l-10-6l-11-6l-10-6M1912 1119l2-9l1-9M1871 1093l-8 4l-7 6M1871 1093l-9-2l-8-2l-9-2M1854 1089l-8 4l-8 5M1845 1087l-9 0l-9 2M1845 1087l-5-8l-3-8M1871 1093l-4-8l-3-8l0-9M1864 1077l6-8l4-8M1864 1068l-3-9l-1-9M1864 1068l3-9l2-9M1926 1097l-1-12l-5-11l-3-12M1927 1108l-8-3l-8-5M1925 1085l6-7l6-6l5-8M1937 1072l9-2l9-1M1942 1064l1-9l1-9M1942 1064l5-7l5-8M1917 1062l-6-7l-7-6l-6-6l-5-8l-3-8M1911 1055l0-9l-2-9M1898 1043l-9-2l-9-1M1890 1027l-8-4l-8-5M1890 1027l-2-9l-3-9l-3-8M1917 1062l4-8l2-9l4-8M1923 1045l-6-6l-7-5M1927 1037l1-9l-1-9M1927 1037l7-5l7-6M1871 1254l-8 3M1887 1246l-8-5l-7-6M1871 1254l-1 9l-1 9M1863 1257l-8 6l-5 7l1 9l1 9M1863 1257l-9 3l-8 4l-9 2M1861 1286l-8 3l-8 3M1868 1280l-3 8l-6 7M1845 1292l-6 6l-7 6l-8 4M1832 1304l-6-7l-6-7M1845 1292l-9 0l-9 1M1846 1309l-6 6l-5 8l-6 7M1846 1309l-9-1l-8-4M1835 1323l1 9l2 8M1829 1330l-3 8l-5 8M1829 1330l-8 4l-6 6l-6 7l-5 8M1815 1320l-5 7l-6 7l-4 8M1827 1307l5 7l7 6M1810 1327l-9 0M1800 1342l-1 9l2 9l2 9M1799 1351l-4 8M1800 1342l-6 7l-6 7M1869 1178l1-9M1869 1187l-9-1l-9-3M1870 1169l-4-8l-4-7M1870 1169l4-8l4-8M1858 1168l4-7M1858 1168l9 1l8-3M1862 1161l-1-9l-3-9M1862 1161l6-7l7-5M1832 1143l3-9l1-9M1815 1122l-6-7l-4-8l-4-8M1826 1136l-9-2l-9-1M1815 1122l1-9l-2-9M1801 1099l-8-4l-7-6l-8-5M1793 1095l3-9l2-9M1778 1084l-9-1l-8-3M1778 1084l-9 0l-8-2M1778 1084l-7-5l-8-4M1801 1099l0-9l-2-9M1829 1125l-2-9l-2-8M1829 1125l6-7l6-7M1825 1108l-2-9l-2-9M1825 1108l5-8l8-5M1830 1100l1-9l-2-8M1877 1172l5-7M1850 1196l8 4l7 5M1862 1183l9-2l9 1M1877 1172l9 1l9-1M1882 1165l2-9l0-9l1-9l-3-8l-5-8M1885 1138l2-8l2-9M1882 1165l8-5l8-3M1890 1160l-1-9l-1-9M1845 1152l-4-8l-2-9M1851 1159l-9-1l-9 1M1839 1135l-4-8l-2-9M1839 1135l-1-9l-1-9M1880 1142l8 4l8 4l9 2M1888 1146l6 7l6 7M1905 1152l9 0l9 1M1905 1152l9 3l9 2M1887 1116l2-8l1-9l-3-9M1884 1134l9-1l8 2M1887 1090l-8-4l-8-3M1887 1090l-7-5l-8-4l-8-6l-8-2l-8-4M1864 1075l-2-8l-2-9M1887 1090l4-8l6-7l5-8l3-8l5-8M1902 1067l9-1l8-3M1903 1129l6-7l6-7l8-4M1897 1135l9 1l8 3M1909 1122l-2-9l0-9M1923 1111l5 7l8 5M1923 1111l5-7l5-8l7-6M1933 1096l9-1l9-1M1940 1090l2-9l0-9M1940 1090l8-3l9-1M1923 1111l9 0l8-2M1795 1167l3-9M1780 1137l-4-8M1786 1144l-9 3l-8 2M1776 1129l-7-6l-6-6M1776 1129l0-9l1-9M1796 1136l6-7M1791 1143l9-2l9 0M1802 1129l2-9l2-9M1802 1129l8-4l9-1M1758 1219l-8 2M1758 1219l-7-5l-8-4M1730 1236l-2 9M1625 1166l-9 1l-8 3M1618 1157l-9-3l-5-7l-5-8M1609 1154l-8-4l-8-3M1618 1157l-1-9l-3-9l-4-8l-5-7M1617 1148l-7-6l-7-6M1605 1124l-4-9l-6-6M1702 1221l-7 6M1717 1211l-9 3l-9 0M1695 1227l-7 5l-8 5l-7 6M1643 1187l-12 3l-12 1M1691 1190l-2-9l0-9l0-9l0-9M1689 1172l-5-7l-4-9M1689 1154l-1-9l0-9M1689 1154l2-9l4-8M1643 1187l-8-3l-7-6l-5-8M1635 1184l-9-1M1623 1170l3-8l5-8M1623 1170l-8-3l-8-4M1623 1170l-2-9l-3-8M1619 1191l-8-2l-9-3l-8 1l-9 0M1632 1173l-12 0l-12-4M1655 1168l-6 7l-3 9l-4 8l-3 8M1646 1184l-6 6l-7 6M1608 1169l-3-8l-5-8M1608 1169l-9 1l-9-1l-8-2l-5-8l-7-6M1608 1169l-7-5l-8-5l-6-6M1601 1164l0-9l-1-9M1587 1153l-6-7l-6-6M1626 1132l-5-11l-5-11l0-12M1635 1141l-9-4l-9-1l-9-1l-8-4M1617 1136l-5-7l-5-8M1600 1131l-9 0l-9 1M1600 1131l-7-5l-8-5M1616 1098l-3-8l-1-9l1-9M1612 1081l-8-5l-8-3M1613 1072l-4-9l-4-7M1613 1072l4-8l2-9M1616 1098l3-8l2-9l3-8M1621 1081l-1-9l-2-9M1624 1073l-3-9l-3-8M1624 1073l5-8l4-8M1608 1122l-5-11l-3-12l-1-12l-4-11M1603 1111l4-9l2-8M1595 1076l-6-7M1595 1076l0-9l2-9l3-8l5-8M1597 1058l-2-9l-3-8M1605 1042l-1-9l-3-8M1605 1042l7-6l6-6M1540 1150l-12-1M1832 1194l-4 8M1836 1186l3 8l5 8M1828 1202l1 9l-2 9M1828 1202l-5 7l-7 6M1802 1178l-6 7l-7 5M1790 1176l-8 4l-8 3l-9 3M1782 1180l-5 7l-4 8M1765 1186l-8 5l-7 4M1765 1186l-8 2l-9 0M1784 1170l-8-5l-7-5l-6-6M1784 1170l-7 6l-6 6M1763 1154l1-9l3-9M1763 1154l-8-5l-8-4M1763 1154l-5-8l-2-9M1854 1116l1-9l-1-9l2-8M1847 1133l-2-9l0-9M1854 1116l8-3l9 0M1854 1098l8-4l8-5M1856 1090l1-9l3-9M1857 1081l8-4l7-6M1856 1090l6-8l7-5l7 5l6 7M1844 1092l-3-8l-3-9l-3-8M1841 1084l5-8l2-9M1853 1058l-2-9l-2-9M1853 1058l-1-9l-4-8l-5-8l-4-8l-3-8M1852 1049l7-6l5-7M1836 1017l9-4l8-3M1836 1017l-4-8l-3-9l-1-9l-7-6l-6-6M1828 991l-1-9l2-9M1836 1017l2-9l4-9l5-7M1838 1008l-3-9l-6-7M1847 992l3-8l2-9M1847 992l7-5l5-8M1853 1058l5-8l5-8l3-8l4-8l3-9l5-7M1858 1050l-4-8l-4-8M1873 1017l2-8l2-9M1878 1010l2-9l1-9l-1-9M1881 992l-4-8l-5-7M1880 983l-2-9l-3-8M1880 983l2-8l1-9M1878 1010l8-5l8-4l9-1l9-2M1894 1001l8 4l9 2M1912 998l7-4l7-6M1912 998l7 5l8 5M1852 1038l0-12M1812 1105l-3-8l-4-8M1812 1105l-8-2l-9-2M1805 1089l-5-8l-6-6M1805 1089l-3-9l-1-9M1848 1101l9-2l9 0l9-1l8-4M1848 1101l8 4l7 6M1856 1105l-3 9l-1 9M1866 1099l8 3l7 6M1883 1094l-2-8l-3-9M1883 1094l3-8l6-7M1883 1094l9-2l8-1l3-8l1-9M1842 1084l-2-9l-2-8l0-9M1840 1075l-9-1l-9-2M1838 1058l-2-9l-1-9M1838 1058l6-7l4-8M1849 1062l7-7l6-6l8-5l6-6l5-8M1862 1049l4-8l2-9M1881 1030l-1-9l-2-9M1880 1021l-6-7l-4-8M1881 1030l6-7l4-8l2-8l1-9l-1-9M1893 1007l8-5l8-4M1852 1026l7-6l8-4M1852 1026l0-9l-1-9l0-9l-1-9l0-9l1-9M1852 1017l5-8l3-8M1851 972l9-2l8-3M1851 972l1-9l4-8l5-7l4-8M1852 963l-1-9l-1-9M1865 940l4-9l5-7M1865 940l6-7l7-6M1851 972l3-8l2-9l2-9M1854 964l7-6l7-5M1858 946l-1-9l1-9M1858 946l1-9l1-9M1852 1026l6-10l7-10l3-12l6-10l2-12l0-12M1858 1016l0-9l-1-9l0-9l-2-9M1858 1007l-9-3l-8-3M1855 980l-8-4l-9-3M1855 980l1-9l3-8M1868 994l9-2l9 0l9 1l3 8l3 9M1895 993l9 1l8 2M1895 993l8 3l9 1M1876 960l-5-7l-5-8l0-9l1-9M1876 960l-5-7l-6-8l-3-8l-3-8M1865 945l-8-1l-9-1M1859 929l-9-2l-9 0M1859 929l-3-9l-4-8M1859 929l2-9l2-9M1876 960l5-8l4-8l1-9l-1-9M1885 944l-7-5l-6-7M1885 926l-6-6l-5-7M1885 926l2-9l2-8M1817 1020l2-12M1791 1072l9-1l9-2l8-4M1809 1069l8 3l9 3M1817 1065l4-8l4-8M1817 1065l9 1l9-1M1816 1032l9-1l9-1l9-1l8-3l9-1M1843 1029l9-1l9-1M1819 1008l-1-9l-1-9l2-9l2-8l5-8l4-8M1818 999l-8-5l-8-2M1830 957l9-3l8-3M1830 957l4-8l5-7M1830 957l5-8l5-7M1819 1008l6-7l5-8l7-5l6-7l6-7M1830 993l5-7l4-8M1849 974l5-7l7-6M1849 974l8-4l7-6M1709 1060l-12-3l-12-2M1756 1070l-9 1l-9-1l-9 0l-9 0l-9-1l-9-1M1747 1071l-5 8l-3 8M1742 1079l5 7l7 7M1702 1068l-6-7l-7-5M1702 1068l-9 3l-8 1M1702 1068l-6-6l-8-6M1733 1064l-9 2l-9-1l-9 0l-9 2M1724 1066l-8 4l-7 6M1697 1067l-4 8l-6 7M1697 1067l-9-2l-9-1M1685 1055l-7 5l-9 4l-7 5l-5 7l-7 6l-5 8M1669 1064l-4 8l-3 8M1645 1090l-2 8l-4 8M1643 1098l1 9l2 9M1645 1090l-7 5l-8 5l-8 3M1638 1095l-4 8l-2 9M1622 1103l-8 4l-7 6M1622 1103l-9-1l-9-2M1685 1055l-8-3l-7-5l-8-5l-6-6M1670 1047l-3-9l-1-9M1656 1036l-9-2l-9-2l-8-4M1647 1034l-7-6l-7-6M1630 1028l-8-4l-8-4M1630 1028l-5-8l-6-6M1656 1036l-6-7l-6-7M1755 1004l4-11l4-12l4-11M1752 1028l-9-3l-7-5l-6-6M1743 1025l1-9l-1-9M1730 1014l-9 0l-9-2M1730 1014l-6-7l-6-6M1755 1004l-4-8l-6-6M1767 970l2-9l-1-9l-2-8l-2-9M1769 961l6-7l6-6M1764 935l-5-7l-7-6M1764 935l1-9l-1-9M1767 970l4-8l5-7l7-6l8-5l7-5l6-7M1776 955l8 5l7 6M1798 939l-5-7l-5-7M1804 932l4-8l4-8l4-8l6-6M1808 924l-1-9l1-9M1822 902l3-9l5-7M1822 902l9-1l9 0M1804 932l7-5l8-5l6-7M1819 922l9 0l8 2M1825 915l2-8l1-9M1825 915l8-3l9-1M1681 1029l-12-4l-11-5l-11-5l-11-3M1704 1033l-8 3l-9 1l-8 4l-9 3M1687 1037l-6 7l-3 9M1670 1044l-5 8l-5 7M1670 1044l-9 0l-8-2M1661 1044l-3-8l-5-7M1681 1029l-6-7l-6-7l-6-7l-7-5M1675 1022l-3-8l-4-8M1663 1008l-9 0l-9 2M1656 1003l-9-1l-8-3M1647 1002l0-9l-2-9M1656 1003l-4-8l-6-7M1636 1012l-6 7l-7 6M1636 1012l-12 4l-7 6l-5 7l-4 8l0 9l0 9M1608 1037l-6 7l-6 6M1624 1016l-9 2l-9-1l-8-2M1636 1012l-11-6l-10-5l-7-7l-8-4l-8-4M1608 994l-5-7M1672 1011l-9 1l-9 0l-9 0l-9 3M1672 1011l-8 4l-7 6M1636 1015l-8 3l-9 1l-9-1M1628 1018l-4 9l-4 7M1610 1018l-8 2l-9 1M1610 1018l-7-5M1636 1015l-8-1l-9-3l-8-2M1619 1011l-7 6l-5 7M1611 1009l-9-1l-9-2M1611 1009l-5-8l-3-9M1662 977l1-11l3-12l7-10l7-9l9-8l7-10l7-10l5-11M1663 966l7-5l6-7l6-7l6-7M1670 961l9 0l9 1M1688 940l8 3l9 3M1688 940l6-6l6-7M1694 934l9 0l9 0M1688 940l8-3l9-3M1696 917l0-9l0-9l-2-9M1696 899l4-9l2-8M1708 896l9-8l11-5l12-1l11-2l11-6l7-6l8-4l8-3M1769 868l-2-9l-3-8M1785 861l8-4l8-5M1785 861l9-3l9-1M1762 874l9 0l9 3l9 1M1771 874l8-4l9-3M1641 952l-9 2l-9 1l-9-1l-9 0l-9 0l-9 2M1623 955l-6 7l-6 6M1625 929l-4-11M1750 1183l-5-11l-1-12M1763 1203l1-9l3-9l2-9l2-8M1764 1194l9-3l9-1M1771 1168l0-9l1-9M1771 1159l8-5l7-6M1771 1168l4-8l5-8M1744 1160l-8-3l-8-6M1744 1160l-6-6l-7-6l-6-7l-4-8M1731 1148l1-9l2-9M1721 1133l-6-7l-4-8M1721 1133l-4-8l-4-8M1744 1160l0-9l-2-9l-2-9M1744 1151l3-9l5-7M1740 1133l-3-8l-4-8M1740 1133l0-9l-3-8M1705 1224l-12 1l-12 1l-12 0l-12 0M1729 1223l-4-8l-2-9l-2-9M1723 1206l5-8l4-8M1721 1197l-7-6l-8-4M1721 1197l-1-9l-4-8M1810 1300l-18 12M1857 1242l-10-5l-11-5l-12-3M1869 1245l-8 5l-7 5M1824 1229l-4-8l-4-8l-6-6M1816 1213l1-8l3-9M1824 1229l-8 3l-9 1l-9-1l-9-4M1807 1233l-7 6l-7 6M1789 1228l-9 0l-9 0M1789 1228l-8-3l-7-5M1824 1229l-7-5l-7-5l-8-5l-8-5M1810 1219l-1-9l-2-9M1794 1209l-8-2l-9-1M1794 1209l-4-8l-2-8M1860 1292l-3 12l0 12l3 11l0 12l2 12M1857 1304l8 3l9 1M1865 1307l8-5l5-8M1862 1351l3 9l3 8l2 9l3 8M1865 1360l8 3l7 6M1873 1385l8 5l8 4M1881 1390l0 9l3 9M1873 1385l1 9l0 9M1862 1351l-2 9l-4 8l-5 7l-5 8l-5 7M1851 1375l-8 4M1885 1126l-11 2M1941 1111l-9-2l-9-2l-8-4M1941 1111l-8 4l-6 7M1915 1103l-9 1l-9 1l-9 3M1906 1104l-5 8l-5 7M1915 1103l-6-6l-6-7l-5-8M1927 1128l-6 7l-6 6M1927 1128l-9 0l-9 0M1915 1141l-1 9l1 9M1915 1141l-8 5l-8 4M1885 1126l-6-6l-4-8M1874 1128l-8 5l-8 3l-9 2l-9 2M1858 1136l-4 8l-5 8M1840 1140l-8 4l-9 1M1840 1140l-8-2l-9-3M1832 1138l-8 5l-7 5M1874 1128l-12-5l-11-2l-12 0l-12 0l-12 2M1851 1121l-6-7l-7-7l-7-5M1845 1114l-9 2l-9 1M1831 1102l-9-1l-9 0M1831 1102l-7-5l-6-7M1827 1121l-7-6l-9-3M1815 1123l-8 3l-9 2M1815 1123l-9 1l-9 0l-9-2l-8-3M1806 1124l-7 5l-8 5M1780 1119l-9-1l-8-4M1780 1119l-8-5l-7-5M1879 1140l-7 10M1923 1125l4 8l5 7l4 8l3 9M1927 1133l9 2l9 1M1939 1157l9 0l9 0M1939 1157l4 8l5 7M1939 1157l-1 9l-2 9M1889 1133l-2 9l-1 9l0 9M1887 1142l8 3l8 3M1886 1160l1 8l-2 9M1886 1160l-1 8l1 9M1872 1150l-6 7l-4 8l-5 7l-6 7l-5 7M1862 1165l-9 3l-9 0M1846 1186l-1 9l-3 8l-1 9l4 9l5 7M1841 1212l-5 7l-6 7M1846 1186l-8 6l-7 4l-9 2M1838 1192l-1 8l-2 9M1822 1198l-7 5l-9 4M1822 1198l-9 1l-8 3M1872 1150l-8 5l-7 5l-6 7l-8 5l-8 2M1864 1155l-8-2l-9-4M1835 1174l-4 8l-7 7M1835 1174l-5 8l-3 8M1835 1174l-9 1l-9-2l-9 1l-9 2l-7 5M1808 1174l-9-3l-9-1M1869 1054l-10-7l-9-7M1895 1079l4-8l4-8l4-8l5-7M1903 1063l-6-6l-8-4M1912 1048l4-8l4-8M1912 1048l6-7l5-8M1879 1061l5-7l6-7M1850 1040l-9-2l-9-2l-8-1l-9-1l-9-2M1832 1036l-7-5l-7-6M1815 1034l-8 5l-7 6M1806 1032l-9 0l-9 1l-9-1M1788 1033l-5 8l-5 7M1806 1032l-8-5l-6-7M1850 1040l-7-5l-8-4l-7-6l-6-7M1835 1031l-9-2l-9 0M1822 1018l-8-4l-6-7M1814 1014l-8-4l-9-2M1822 1018l-6-6l-8-5M1852 1057l-9-9l-10-6l-9-7M1864 1077l-9 0l-9 1l-9-1l-9 1l-9 3M1837 1077l-6-6l-6-7M1833 1042l-6 7l-8 4M1824 1035l-9-1l-9-3l-9 1l-9 0M1815 1034l-7 5l-8 4M1797 1032l-8 4l-6 7M1788 1032l-8 4l-9 2M1788 1032l-8-4l-9-4M1780 1028l-8 5l-7 5M1824 1035l-6-8l-7-5l-7-6M1818 1027l-9 2l-8 2M1804 1016l-9 1l-9 0M1804 1016l-1-9l0-9M1820 1050l-4-11l-2-12l-4-11l-6-10M1835 1069l-9 2l-9 2l-9 0l-9-2l-8-4M1826 1071l-7-6l-6-6M1791 1067l-9 0l-9-2M1791 1067l-7-5l-7-6l-8-4M1777 1056l-6 6l-8 5M1769 1052l-9-2l-9 1M1769 1052l-7-6l-6-6M1820 1050l5-7l5-7l4-8M1830 1036l1-9l2-9M1834 1028l0-9l0-9M1834 1028l7-6l9-3M1804 1006l3-9l6-7M1807 997l9-1l9-1M1804 1006l-7-7l-6-6l-6-7l-5-7l-5-7M1791 993l2-8l2-9M1780 979l-8-4l-7-6M1775 972l-5-8l-6-7M1770 964l0-9l-1-9M1775 972l-2-9l-3-9M1804 1006l-2-9l-4-8l-6-7l-6-7M1798 989l-8 3l-9 1M1786 975l-9 0l-9 0M1786 975l-3-8l-6-7M1809 1086l-11 6l-9 7l-10 6l-11 6l-11 4M1798 1092l-1 8l-3 9M1779 1105l-2 9l-5 8M1757 1115l-8 4l-7 5l-8 4l-7 7l-4 8M1734 1128l-9 4l-8 2M1757 1115l-9 3l-7 5l-6 6M1748 1118l-2 8l-5 8M1760 1090l-6-7l-7-6l-7-5l-7-6l-8-3M1747 1077l-9 0l-8 0M1733 1066l-5-7l-3-9M1725 1063l-9 0l-9-2M1725 1063l-8-5l-8-4l-8-5M1717 1058l-4-8l-6-7M1701 1049l-8-3l-9-1M1701 1049l-2-8l1-9M1737 1097l-12-1l-11-4l-11-6l-12-2M1749 1095l-8 4l-7 6l-6 7l-4 7M1734 1105l-9 0l-9 0M1724 1119l-4 9l-5 7M1724 1119l-8 6l-8 4M1725 1096l-8 3l-8 4l-8 5M1717 1099l-3 8l1 9M1701 1108l-2 9l-3 8M1701 1108l-8 4l-7 5M1703 1086l-6-6l-7-6M1691 1084l-8 3l-9 3l-9 0M1674 1090l-2-9l0-9M1665 1090l-9 1l-9 0M1665 1090l-7-5l-8-4M1691 1084l-5-7l-7-6l-6-7M1679 1071l-8 2l-9 1M1673 1064l-9-2l-8-2M1664 1062l-6 7l-7 5M1673 1064l0-9l0-9M1739 1101l-10 6l-9 9l-9 8l-9 7M1739 1101l-3 8l-2 9M1702 1131l-2 9l-2 9l-2 8l-2 9M1698 1149l-9 1l-9 0M1694 1166l3 9l2 8M1694 1166l0 9l0 9M1694 1166l-2 9l-2 9M1702 1131l-9 2l-8 5l-7 5l-8 5M1693 1133l0 9l0 9M1670 1148l-4 8l-6 7M1670 1148l-9 1l-9-1M1740 1077l-10-7l-8-9l-9-8l-9-8M1740 1077l1-9l4-8l1-9l2-9M1741 1068l-7-5l-6-7M1748 1042l-3-8l-3-9M1748 1042l3-8l4-8M1722 1061l1-9l0-9M1704 1045l1-9l2-9M1705 1036l8-4l6-7M1704 1045l-8-2l-9-4l-8-3l-9-1l-9-2M1696 1043l-9-1l-9-4M1670 1035l-6 6l-7 5M1661 1033l-9 2l-8 3l-7 5M1644 1038l1 9l-3 9M1637 1043l-2 9l0 9M1637 1043l-9 3l-7 5M1661 1033l-7-6l-4-8l-5-7l-8-4l-8-3M1645 1012l-1-9l-2-9M1704 1045l-1-9l-1-9l-3-8M1702 1027l-8-4l-7-6M1699 1019l-4-8l-3-9M1699 1019l0-9l-2-9M2020 660l4-11M2148 710l-4-11l6-7l4-8M2144 699l-4-8l-8-5l-7-6l-7-5M2144 699l3-9l4-8l4-8l2-9l4-8M2151 682l-2-8l-3-9M2163 671l10-7l9-2l9-1l8-4l9-1M1942 686l2-16M1965 766l9-8l10-6l10-7M1965 766l-1-9l0-9M1994 745l0-9l1-9l-2-9M1995 727l-9 0l-9-1M1993 718l-4-8l-2-9M1993 718l4-8l4-8M1994 745l8-4l7-6l6-7l8 3l8 4M2015 728l3-8l6-7M2015 728l8-2l9-2M1948 742l4-8l2-9l1-8l0-9M1948 742l9-3l8-1M1955 717l7-7l6-6M1955 708l-5-8l-6-7M1939 702l8-10l5-10M1944 670l-4-8M2134 666l6-14M2130 680l-7-6l1-9l1-9M2078 911l7-6M2063 921l-1-9l-1-9M2085 905l1-9l3-9M2085 905l8-4l7-6M2093 901l9-1l9 0M2020 867l-4-8l-5-7M2038 887l-9-3l-8-4M2025 874l-3-9l-5-7M2011 852l-8-6l-8-4l-8-2M1995 842l-7 5l-8 4M1987 840l-9 1l-9 1M1987 840l-8-4l-7-6M2011 852l-4-9l-6-7M2007 843l2-8l0-9M2027 835l-8-5l-8-4l-8-1l-9-4M2019 830l-6 7l-6 7M1994 821l-9-1l-8-3M1994 821l-7-5l-8-4M2011 813l-5-7l-5-7M2016 821l-9 1l-9-1M2001 799l-9-4l-7-6M2001 799l1-9l3-9M2037 800l8-9l8-8M2030 823l8-4l6-7l5-7M2044 812l-2-9l-5-7M2049 805l4-9l4-8M2049 805l9-1l9-2M2053 783l9-3l8-3M2062 780l8 3l9 3M2053 783l3-9l2-8l3-9l-2-9l-2-9M2061 757l6-6l8-5M2053 783l8-4l8-4l8-5M2061 779l9 1l9 0M2077 770l2-9l3-8M2077 770l9 0l9-2M2111 896l7-6M2103 900l1-9l0-9M2118 890l3-8l4-8M2118 890l8-3l9-1M2100 865l7-6M2103 850l9-2l9-2M2112 848l3-8l6-7M2106 832l4-8l5-8M2106 832l9-2l9-1M2115 816l9 0l9 2M2115 816l0-9l0-9l-2-8M2115 807l-8-4l-7-6M2115 816l5-7l5-8M2125 834l7-5l8-5l6-7M2110 844l8 2l9 2M2146 817l8-2l9-1M2146 817l3-9l0-9l-1-9M2149 808l7-4l8-6M2148 790l-3-8l-3-9M2148 790l3-8l4-8M2146 817l7-6l8-3l9-2M2161 808l3 8l2 9M2170 806l8-2l9 0M2170 806l8 4l8 3M2147 900l5-7M2141 907l9-1l9-1M2152 893l0-9l3-9M2152 893l8-6l7-5M2165 955l-1 9l-3 8M2165 946l-6 7l-7 6M2164 964l4 8l2 9M2161 972l1 9l1 9l1 9M2162 981l4 8l3 9M2161 972l-5 8l-3 8l-3 9M2156 980l2 9l3 8M2150 997l-1 9l0 9M2150 997l-5 7l-6 7M2208 954l3 8M2208 954l-5 8l-4 8M2211 962l5 8l3 8M2211 962l1 9l0 9M2263 988l11 4l12 3l12 2M2242 976l1 9l3 8l4 8M2243 985l-3 8l-4 8M2250 1001l7 5l9 4M2250 1001l0 9l-1 9M2263 988l8-5l6-6l5-8M2271 983l9 2l8 2M2282 969l3-8l1-9M2282 969l7-5l9-3M2298 997l7-5l8-4M2298 997l8-2l9-1l9 1l9-3l3-8l4-8M2333 992l8-2l9-3M2333 992l9 1l8 3M2298 997l7 5l9 2l9 0l9 0l9-2M2314 1004l7-6l7-5M2332 1004l8 4l7 6M2341 1002l8-3l9-2l9-3M2341 1002l8 3l8 5M2243 1016l6 11l7 9l7 10M2237 981l8 3l8 6l7 5M2253 990l-2 9l0 9M2260 995l7 5l7 7M2260 995l6 7l7 5M2249 1027l-2 9l-2 8M2263 1046l6 6l7 6l8 4l9 3l8 3M2269 1052l9 0l9-1l9-1M2293 1065l-1 9l-2 8M2301 1068l9-1l9 1l8 3M2301 1068l9 3l7 5l6 6M2263 1046l4 8l2 9l0 9l3 8l1 9l3 9M2269 1063l8 3l7 5M2276 1098l-6 7l-8 5M2276 1098l4 8l6 7l3 8M2276 1098l-5 8l-6 6M2167 829l2-11M2161 853l-4-8l-3-9M2167 829l7-5l6-7M2169 818l-3-9l-5-7l-4-8l-3-9M2161 802l2-9l1-9M2154 785l-7-5l-8-4M2154 785l0-9l1-9M2169 818l4-9l6-6l6-7l4-8M2179 803l-2-9l2-9M2189 788l0-9l-1-9M2189 788l5-7l7-6M2169 820l-5-7M2175 827l2-9l4-8M2164 813l-7-6l-7-6M2164 813l-3-9l-5-7M2190 782l-5-7l-4-8l-6-7l-8-5M2181 767l0-9l-1-9M2207 731l4-12l2-11M2205 742l5-7l3-8M2213 708l0-9l-2-9M2213 699l1-9l1-9M2213 708l6-7l7-7l5-7l9 1l9-2M2231 687l1-9l-1-9M2231 687l8-3l9-1M2227 738l7-10l7-9M2221 748l-2-9l-3-8M2241 719l9 2l9 0M2241 719l2-9l-3-9l-4-8M2243 710l-5-8l-5-7M2243 710l4-8M2241 719l7-7l8-4l7-5l6-7M2248 712l8 5l9 2M2269 696l9-2M2190 823l5-8M2186 831l-6-7l-5-7M2195 815l0-9l-1-9M2195 806l4-8l1-9M2195 815l6-6l5-8M2175 800l7-6l6-6M2175 782l4-8l5-8l6-7M2175 782l9-3l9-2M2190 759l-6-7l-6-7M2190 759l3-8l3-8M2190 759l8-4l8-4M2190 790l7-5l8-4M2190 790l3-9l4-7M2205 781l6-7l5-7M2205 781l9 0l9-2M2233 833l-1-9M2233 833l-8-3l-9-4M2232 824l-7-6l-8-4M2232 824l4-8l5-7M2272 847l9 2l8 5l9 0l9 1M2289 854l5 8l5 7M2272 851l7 5l8 5M2272 851l9-2l8-2M2287 861l8 4l7 5M2287 861l5 7l7 5M2275 797l5-7l1-9l2-9M2280 790l7-6l8-5M2297 807l5 7l5 8M2317 809l9 0l9-2l9 1M2326 809l6-8l3-8M2344 808l4-8l4-8M2344 808l8-4l9-3M2352 804l3-9l6-7M2344 808l8 5l9 3M2316 815l8 4l8 4l9 3M2316 815l2 9l2 9M2341 826l9-2l9 0M2341 826l6 6l5 8M2271 822l-3 8l-6 7M2271 804l8 5l6 6M2271 822l8 4l7 5M2262 837l-2 9l-2 9M2262 837l-8 4l-8 4l-7 6M2254 841l-3 9l0 9M2239 851l-6 6l-7 7M2239 851l-9 2l-8 3M2298 839l-1 12l0 12l2 11M2296 827l7 6l6 7l4 8M2303 833l-1 9l-2 9M2299 874l-5 8l-5 7M2299 874l6 8l5 7l3 9l5 7l4 8M2313 898l-4 8l-3 8M2299 874l-1 9l-1 9M2321 827l9-3l7-5l7-6M2321 827l8 5l8 4M2344 813l5-8l6-6M2344 813l7-5l7-6M2344 851l3 9l1 9l2 9l8 4l7 6M2352 860l9 2l9 0l9-1l9-3l7-5M2370 862l7 5l8 4M2395 853l4-8l4-8M2395 853l7-5l6-7l7-6l6-7l5-7M2415 835l7-5l7-7M2395 853l9 0l9 1M2352 860l6 11l4 11l7 10l8 9l7 10l4 11M2362 882l-1 9l0 9l1 9M2361 891l7 6l7 5M2388 922l-5 7l-4 9M2388 922l6 6l7 7l5 7l6 7M2394 928l3 9l2 9M2412 949l6 6l6 7M2412 949l0 9l-1 9M2388 922l1 9l1 9l-2 9M2389 931l-7 5l-8 5M2388 949l1 9l0 9M2388 949l-5 7l-3 9M2275 741l-9-2l-8-1M2269 718l-3-9l-4-8l-5-7l-6-7l-4-8M2262 701l-9 1l-9-1M2269 718l0-9l-2-9l-3-9l-1-9M2269 709l-7-6l-5-8M2263 682l-2-8M2257 681l-10-6l-9 2l-8 2l-9 3l-8 5M2238 677l-2 8l-4 9M2221 682l-2 9l-5 7M2213 687l-6 6l-6 7M2213 687l-8 3l-9 0l-5-8M2247 675l-6-7l-6-6l-8-5l-6-6l-5-8M2393 747l4 12l4 11l8 4l7 5M2409 774l7-4l7-6M2416 779l9-2l9 0M2416 779l6 7l4 8M2401 770l2 9l1 9l5 8M2403 779l-7 5l-8 4M2409 796l7 5l5 7M2409 796l2 8l-1 9M2094 990l6-7M2094 990l9-3l9-1M2100 983l2-9l0-9M2100 983l8-5l6-6M2072 954l-5-7M2077 962l6-6l8-5M2067 947l-6-7l-7-6M2067 947l0-9l1-9M2083 934l-3-8M2068 913l-8-5l-8-2M2083 923l3-8l2-9M2086 915l-7-7l-5-7M2068 913l-3-9l0-9M2052 906l-9-2l-9 1l-9 1l-9 3l-8 3M2025 906l-9 2l-9 2M2052 906l-9-4l-7-6M2101 906l5-8l4-7M2097 914l6-6l7-6M2110 891l5-8l4-8M2110 891l9-4l8-2M2110 966l-3-8M2112 975l-9-2l-9-2M2107 958l-4-9l-4-8M2107 958l1-9l1-9M2107 932l-7-5M2109 907l-5-8l-8-5l-7-5M2104 899l-2-9l-4-8M2115 906l-1-9l-3-9M2115 906l6-7l5-8M2111 888l-7-5l-9-4M2104 883l-9-1l-9-1M2111 888l1-9l-2-8M2197 1007l9 3M2172 998l7-5l8-5M2188 1006l9-2l9-1M2206 1010l8-2l8-4l7-6l6-7l5-7M2229 998l9-2l9-2M2206 1010l4 8l3 9l2 9M2210 1018l9 0l9-1M2215 1036l5 7l5 7M2215 1036l0 9l1 8M2181 1021l-5 7M2245 1024l9-1l9 1M2236 1027l4-8l2-9M2263 1024l9 1l8 2M2272 1025l6 7l6 6M2263 1024l7 5l7 6M2270 1029l9 2l8 3M2245 1034l9 1l9 1M2236 1032l6 6l7 6M2263 1036l8-2l9-1M2263 1036l8-3l9-1M2263 1036l8 4l9 1M2233 981l8 4M2217 973l7-5l8-5M2241 985l5 8l3 9M2241 985l9 1l9 0M2241 985l5 8l4 8l5 8M2250 1001l9 1l9-1M2255 1009l7 5l8 4M2255 1009l0 9l-1 9M2209 887l-10-7l-10-7M2223 906l-8 3l-9 4M2199 880l0-9l-3-8M2189 873l-7-5l-9-3l-7-5M2173 865l-1-9l0-9M2166 860l-8-4l-8-3M2166 860l-1-9l-1-9M2189 873l-3-8l-5-7l-3-9M2186 865l-8 4l-7 6M2178 849l-3-8l-3-9M2178 849l1-9l-1-9M2238 859l-7-6l-7-6l-7-5l-8-4l-8-3M2217 842l-4-8l-4-8M2217 830l-8-8l-6-11l-7-10M2233 848l-9-3l-8-2l-8-5l-8-3M2224 845l-9 0l-8 2M2200 835l-9 0l-9-2l-8-4M2200 835l-9-4l-8-3l-8-4M2217 830l-8 2l-9 0l-9-3M2209 832l-7-6l-6-8M2191 829l-9-2l-8-3M2191 829l-8-4l-8-5M2196 801l-7-5l-9-3l-9-1l-9 0l-9-2M2180 793l-8 4l-7 5M2153 790l-9 0l-9 1M2153 790l-8-4l-8-3l-8-3M2196 801l-2-9l0-9l0-9l-1-9l-3-8M2194 783l-7-5l-6-7M2190 757l-4-8l-2-9M2190 757l4-8l2-9M2260 830l6-11l7-9l5-11M2253 840l9-1l9-2M2266 819l0-9l1-9l-3-8M2266 810l-3-8l-5-7M2264 793l-6-7l-5-7M2264 793l-2-9l-1-9M2278 799l1-9l3-8M2278 799l2-9l4-8l5-7l6-6M2280 790l9 2l8-2M2295 769l5-8l6-7M2295 769l8-6l6-6M2278 799l7-5l9-4l8-1l9-1l9-3M2294 790l6-6l5-7M2311 788l9 2l9 1M2320 785l7-5l9-3M2320 785l9-2l8-1l9-1M2248 1012l7 6l8 5M2227 996l9 1l9 1M2241 1007l1 9l0 9M2263 1023l9 1l9 1M2263 1023l6 6l5 8l2 9l6 6l6 7M2276 1046l1 9l3 8M2245 1044l4 8l4 7l4 9M2233 1030l-4 8l-2 8M2249 1052l1 9l-1 9M2257 1068l2 8l1 9l-1 9M2259 1076l7 6l8 4M2259 1094l4 9l4 7M2259 1094l-4 8l-5 7M2257 1068l1 9l-1 9M2258 1077l-6 6l-8 5M2219 1071l-8 4l-7 5l-5 7M2205 1115l1 12l4 12l0 12M2205 1115l7 7l6 6l5 7M2218 1128l1 9l2 8M2223 1135l9 4l8 3M2223 1135l5 8l7 6M2210 1151l5 7l4 8l-5 8l-5 7M2210 1151l-3 8l-1 9M2184 1100l-12 1l-12-2l-12-3M2184 1100l-3 9l0 9M2148 1096l-7-5l-8-4M2148 1096l-8 2l-9 2l-9 1l-9-1M2140 1098l-6 7l-8 5M2113 1100l-3-8l-5-8M2113 1100l-9 3l-9 1M2113 1100l-8-4l-8-3M2148 1096l-7-6l-7-5l-6-6M2141 1090l2-9l1-9M2128 1079l-9-4l-8-4M2128 1079l-3-9l-2-9M2268 971l-2-9l-5-7M2269 980l7-5l6-7M2266 962l6-6l6-6M2261 955l-8-5l-6-7M2261 955l-2-9l-4-8M2325 976l7 6l7 5l8 5M2332 982l-2 9l-1 9M2347 992l9 2l8 4M2347 992l6 7l6 7M2333 971l5-7l6-7l5-7M2333 971l-3-8l-4-9M2344 957l-4-8l-2-9M2349 950l2-9l2-9M2349 950l9-2l9-2M2343 975l9 0l9-2l9-3l9-1M2343 975l9-4l8-3M2379 969l7-5l6-6M2386 964l9 1l9 0M2379 969l8 3l9 0l9 0M2396 972l5-8l6-7M2405 972l8-4l7-6M2405 972l7 7l4 8M2297 1013l-2 9l4 8l5 8M2295 1022l-6 7l-5 7M2329 1015l7-5l9-3M2349 1017l9 1l9-2l9-1M2349 1017l9-3l9-1M2376 1015l7-6l5-7M2376 1015l8 4l7 6M2340 1018l6 6l4 8l3 9l7 6l7 5M2353 1041l1 9l-2 8M2372 993l9-2l9-1l8-1M2363 993l6 7l7 6M2398 989l9 3l8 4M2398 989l8-5l8-5l7-5M2406 984l9 1l9 1M2421 974l6-6l8-5M2421 974l9-2l8-5M2398 989l9 1l9-1l9-1l9-2M2416 989l5-8l5-8M2434 986l6-7l4-8M2434 986l9 1l9 1M2388 1020l6 6l7 6l6 6l9 3l8 3M2407 1038l4 8l0 9M2431 1039l-3 8l-2 9M2431 1039l9 1l8 3l8 4l6 7l7 6M2440 1040l7 5l6 7M2469 1060l3 8l1 9M2469 1060l9 0l9-1M2469 1060l6 6l9 4M2431 1039l5 7l8 5l8 3l9 3l7 6M2444 1051l9-3l8-2M2468 1063l9 1l8 2M2477 1064l4-8l3-8M2468 1063l3 8l5 8l4 8M2444 917l10-7M2370 963l-2-8l-5-8M2370 963l-8-2l-9 0M2363 947l-5-7l-6-7M2363 947l-1-9l-1-9M2409 949l9 0l9 0l9-2l9 1l9 0l9 2M2427 949l9 1l9 1M2454 948l8-4l9-3M2463 950l8-3l8-4l8-4l9-2M2479 943l4-8l2-9M2496 937l7-6l7-5M2496 937l8 3l8 4M2463 950l5 7l4 8l7 7M2472 965l-5 8l-5 7M2479 972l8 3l8 4M2479 972l5 7l8 5M2444 917l7 5l8 4l7 6M2459 926l-4 8l-2 9M2466 932l9 2l8 4M2466 932l1 9l3 9M2454 910l5-11l5-11l4-11l4-12l0-11l0-12M2464 888l8-4l9-1l8-4M2472 884l3 9l1 9M2489 879l4-8l5-7M2489 879l9-1l9 1M2472 842l-4-9l-6-6l-7-6M2468 833l-1-9l-2-8M2472 842l4-9l4-7l2-9M2454 910l8-4l9-2l9-3l8-1l9-4M2462 906l-1-9l-3-9M2461 897l-8-4l-9-2M2480 901l3-8l5-8M2497 896l8-3l9-1l9 0M2514 892l7-6l8-3M2523 892l9-3l9-1M2523 892l8 4l9 2M2497 896l9-1l9-1M2410 923l-6-10M2412 977l8-4l9-3M2412 977l9 0l8 3M2429 970l7-5l8-4M2429 970l9 0l8-3M2410 923l-8-3l-9-1M2404 913l-8-4l-8-4l-8-5l-7-5M2388 905l1-9l3-9M2373 895l-9 1l-9-2M2373 895l-6-7l-6-7M2404 913l-2-9l-1-9l-3-8l-5-8l-6-6l-7-6M2401 895l-7-5l-8-4M2380 867l-9-2l-9 1l-9 0l-8 2M2371 865l-6 6l-7 7M2345 868l-9 1l-8 4M2345 868l-9-4l-8-3M2380 867l-6-7l-6-7l-5-7l-7-6l-7-5M2363 846l-3-9l-1-9M2483 1040l12 3l11 4M2455 998l7 5l7 5l9 3l8 3M2469 1008l6 7l7 5M2474 1033l2 8l5 8M2476 1041l9-1l9-3M2506 1047l9-4l6-6l7-6M2521 1037l8 5l8 4M2528 1031l2-9l3-8M2528 1031l9-1l9-1M2506 1047l9-1l9-2l9-1l9 2l8 4M2515 1046l8 4l8 3M2550 1049l6-7l7-5M2550 1049l9-1l8-4l8-4M2567 1044l2-9l-1-9M2550 1049l6 7l6 7M2556 1056l1 9l0 9M2506 1047l8 5l9 2l9 0l8-2M2514 1052l4 7l5 8M2540 1052l6-7l3-9M2540 1052l9 1l9 0M2512 1005l10 7l9 8M2494 990l8-2l9-4M2522 1012l2 9l5 8M2531 1020l8 3l9 0l9-1l9-3l9-1M2557 1022l9 0l9-2M2531 1020l2 9l2 9l0 9M2533 1029l8 3l8 5M2535 1047l2 8l0 9M2535 1047l0 9l1 9M2571 958l11-6l9-8l10-6M2549 966l4-8l6-6l8-6l7-5M2553 958l0-9l2-8M2567 946l-2-8l-4-9M2574 941l4-8l2-9M2574 941l8-4l8-3M2591 944l9 2l9 2M2566 972l9-7l9-2l9 0l9-3M2584 963l6-7M2575 965l7-10l5-11l3-12l6-10l4-11M2582 955l8-4l8-5M2590 951l9 1l9-1M2600 911l8-5l8-3M2600 911l2-9l4-8l8-5l7-5M2606 894l0-9l1-9M2606 894l6-7l7-6M2600 911l3-9l1-9l-1-9l-1-9M2603 902l-7-5l-8-4M2602 875l0-9M2575 965l9 1l9 3l7 5M2584 966l4 8l3 9M2600 974l4 8l5 7l7 6M2126 1062l8-3M2109 1070l9 2l9 3M2126 1062l5-8l3-8M2134 1059l8-4l7-6M2142 1055l8 5l6 6M2134 1059l9 0l9-2M2143 1059l4-8l5-7M2104 1033l6-7l4-8M2110 1026l7-5l6-6M2114 1018l-2-9l-2-9M2114 1018l6-7l5-7M2081 992l-6-7l-5-7M2091 1007l2-9l2-9M2070 978l-7-5l-9-3M2070 978l1-9l3-9M2071 969l6-7l7-6M2105 991l2-8l2-9l3-9M2096 1007l9 0l9 1M2107 983l8-4l7-6M2112 965l-3-8l-2-9l-2-9M2109 957l-7-5l-6-7M2105 939l-8-4l-7-5M2105 939l-7-5l-9-4M2105 939l0-9l1-9M2112 965l4-8l7-6M2123 1014l3-11M2127 1050l-5-8l-2-9M2123 1026l7-6l8-4M2126 1003l-5-8l-3-8M2126 1003l3-9l2-9l1-9M2131 985l9 0l9 0M2126 1003l6-7l5-7l8-5M2132 996l9-1l9-1M2145 984l3-9l6-7M2145 984l9 0l9-2M2132 992l8-2l9-3M2116 1001l8 2l9 4M2140 990l5 8l5 7M2149 987l6-6l5-8M2155 981l9 1l9 1M2149 987l9 1l9-1l9-1l7-6l6-7M2176 986l9 0l9 1M2104 956l-8-3l-8-4l-8-4l-7-6M2096 953l-8 4l-8 3M2073 939l-8-4l-9-1M2073 939l-5-7l-3-9M2078 919l-8-8l-10-7l-12-3M2095 937l-9 2l-9 0M2070 911l-9 1l-8 4l-7 6l-3 8l-5 8M2046 922l-9 1l-9 1M2048 901l-6-7l-5-7M2048 901l-9-1l-9-1l-9 3l-8 1M2039 900l-6-7l-6-6M2013 903l-8 6l-6 6M2013 903l-9-2l-9-3M2048 901l-8-4l-7-5l-8-5l-9-2M2033 892l-9-2l-9-3M2016 885l-8 2l-9 1M2016 885l-7-5l-7-6l-7-6M2109 909l0-12l2-12M2107 921l7-6l8-4M2111 885l1-9l2-9l4-8l2-8M2112 876l-5-7l-6-7M2120 851l1-9l-2-9M2120 851l5-8l6-7M2111 885l6-7l6-7l6-6l3-9l5-7M2129 865l5-8l3-8M2159 1042l2-9M2154 1049l0-9l1-9M2161 1033l3-9l2-8M2161 1033l7-7l6-6M2160 1021l9 0M2165 989l9-1l9-1M2174 988l6 6l7 6M2165 971l-2-9l-3-9M2165 971l6-7l4-8M2160 953l-4-7l-7-6M2160 953l1-9l1-8M2182 983l9 2l9 1M2173 985l3 8l3 9M2191 985l9-3l8-4M2200 986l9 0l9-2M2200 986l8 5l7 5M2212 1078l5 7M2207 1070l-2 9l0 9M2217 1085l9 3l9 1M2217 1085l4 8l4 8M2277 1062l7-5l9-4l8-3M2269 1066l9 1l9 2M2301 1050l5-8l6-7M2301 1050l7-6l8-4M2301 1050l9-1l9-2M2286 1075l9 0M2286 1075l3 9l4 8M2334 1091l12-3l12 0l12-2M2322 1090l3 9l3 9l4 7l6 7l5 7M2332 1115l1 9l2 9M2370 1086l8 4l7 4M2370 1086l8-4l6-7l5-7l6-7M2378 1082l8 4l8 3M2395 1061l4-8l2-9M2395 1061l9-2l9-1M2370 1086l8 4l9 2l9 0l8 2M2387 1092l4-8l6-7M2404 1094l9-2l9-2l8-4M2404 1094l8 4l9 2M2317 1117l1 12l0 12M2312 1106l-6 7l-4 8M2318 1141l8 2l9 0M2318 1141l2 9l3 8l5 8l2 9M2323 1158l9 2l9-1M2330 1175l6 6l6 7M2330 1175l0 9l-3 8M2318 1141l-6 7l-6 6l-8 6l-7 5l-7 5M2298 1160l-8 4l-8 3M2239 1035l7-6l6-6l7-6M2246 1029l9 1l9 0M2229 1070l-6 6M2249 1124l0 9l3 8M2248 1115l7 5l6 7M2252 1141l7 7l4 8M2252 1141l2 9l0 9M2237 1116l1 9l2 9M2237 1116l6 7l7 6M2240 1134l5 7l3 9M2240 1134l1 9l-2 9M2281 998l7-5M2261 1016l-1-9l-2-9M2288 993l8-6l6-6M2288 993l8-4l7-6M2293 1045l6 7M2287 1038l9-2l9 1M2299 1052l8 3l9 3M2299 1052l2 8l4 8M2321 1023l4-8l6-7l4-8M2325 1015l-4-7l-3-9M2335 1000l-1-9l-3-8M2335 1000l8-3l8-4M2355 1019l8-2l9-2M2346 1023l-1-9l-1-9M2372 1015l6-7l5-8l7-5M2383 1000l9 1l9 1M2390 995l2-9l0-9M2390 995l8-2l9-2M2372 1015l9 1l9 0M2350 1049l3 9l2 9l1 8M2345 1042l0 9l-1 9M2355 1067l-1 8l-2 9M2356 1075l5 8l4 8l3 9M2365 1091l-6 7l-6 6M2368 1100l3 8l4 8M2368 1100l1 9l0 9M2356 1075l-2 9l-3 9l-2 9l-1 8l-1 9M2349 1102l-5 7l-3 9M2290 986l7-7M2275 995l0-9l3-9M2297 979l2-8l4-8M2297 979l8-1l9-3M2293 946l9-3l8-3M2302 930l4-8l4-8M2302 930l9 1l9 4M2310 914l1-9l0-9M2311 905l8-4l8-4M2310 914l7-5l6-7M2310 940l8-5l4-8l4-8M2318 935l8-3l9-1M2325 975l8 4M2325 975l8-4l7-5M2346 915l2-9l4-8M2343 923l8-4l8-4M2352 898l3-8l2-9M2352 898l5-8l6-6M2354 919l7-4l9-2M2347 925l7 5l7 7M2361 915l2-9l2-9M2370 913l8-4l8-5M2370 913l9 1l9 3M2378 955l8-5l8-3M2361 958l2-8l2-9M2394 947l9 2l9 1M2394 947l4-9l4-8M2394 947l9 0l9 1l9 3l9 0l8-1M2421 951l6 6l7 5M2379 919l2-9l3-8M2397 866l-8-10l-7-9l-8-10M2401 877l7-7l6-6l6-7M2414 864l-3-8l-3-9M2420 857l1-9l-1-9M2420 857l6-6l6-7M2389 856l-9 2l-9 1M2374 837l-8-2l-8-5l2-8l4-9M2374 837l-1-8l-4-9l-6-7l-8-3l-8-5M2363 813l-4-7l-7-6M2418 879l6-7l5-8l5-7l5-7M2418 879l2-9l1-9l-1-9M2439 850l2-9l0-9l-1-9M2441 832l-8-5l-6-7M2440 823l-3-9l-3-8M2440 823l3-8l6-7M2439 850l8-5l7-5l8-4M2454 840l1-9l-2-9M2462 836l7-5l8-5M2462 836l9-2l8-4M2417 957l8-4l9-3M2408 958l7-6l6-6M2434 950l7-5l7-6M2434 950l9 2l7 5M2441 970l6-7l7-6l6-6M2441 970l-3-9l-3-8M2460 951l0-9l2-9M2460 951l5-8l3-8M2460 951l7-5l9-4M2467 946l5-8l4-8M2467 986l9 2l9 3l8 4l9 1M2476 988l9-1l9-1M2502 996l9 0l9-1M2502 996l8 4l7 5M2486 996l8 3l8 4l9 2l9 2M2486 996l4 8l7 5M2502 1003l6-7l6-7M2520 1007l9 0l9-1l9 1l8-5l7-6M2547 1007l9 1l9 1M2520 1007l8 5l6 6l7 6l8 3l9 1M2541 1024l5 7l7 6M2480 1002l1 9l1 8l4 9l2 8l4 9M2481 1011l8 3l9 2M2492 1045l6 6l7 6M2492 1045l3 8l3 8l6 8M2498 1061l9 3l8 5M2504 1069l6 7l6 6M2504 1069l5 7l3 9M2432 902l6-7l7-5M2420 915l9 1l9-1M2445 890l6-7l4-8M2445 890l9-3l9-1M2423 888l9 3l9 2M2435 868l8-5l5-7l6-7M2443 863l8 2l8 4M2435 868l-2-9l-2-9l-5-8l-3-8M2433 859l-8-5l-8-3M2423 834l-6-6l-6-7M2423 834l3-9M2435 868l8-5l6-6l5-8l6-7M2443 863l8 4l6 6M2454 849l9-1l9-3M2460 842l5-7l6-7M2470 924l7-5l8-5M2462 928l9 4l7 5M2485 914l5-7l5-8M2485 914l9 2l9 0M2485 957l6 8l4 7l4 8M2485 957l9 4l8 2M2499 980l9 1l9 1M2499 980l6 7l6 7l5 7M2505 987l9 0l9 2M2499 980l-1 9l-2 9M2531 959l6-7l8-5l8-3M2537 952l-1-9l-1-9M2553 944l5-8l4-8M2553 944l9-1l9 2M2543 957l8-4l9-4l8-3l9-2l8-3M2560 949l-3-8l-2-9M2585 941l8-4l9-2M2585 941l9-1l8-4M2543 957l12 3l11 2l11 5l12 2l12 3M2566 962l6-7l8-5M2601 972l8 4l6 6l9 4M2473 843l2-12M2476 883l7-5l7-6l4-8l5-7M2476 883l1-9l-1-9M2499 857l5-8l3-8M2499 857l7-6M2473 843l-5-8l-3-8M2468 835l1-9M2475 831l-4-12l-7-9l-6-11l-6-10l-7-10M2471 819l-9 3l-8 3l-8 4l-9 1l-6 7l-7 5M2437 830l-9 1l-9-1M2458 799l-9-2l-9-2M2445 779l-7-5l-9-3l-8-4l-7-4M2429 771l-6 7l-7 6M2414 763l-9-2l-9-2M2414 763l-5-8l-5-7M2445 779l-6-7l-5-7l-8-5l-7-5M2439 772l-9 0l-8 0M2419 755l-7-6l-7-6M2581 909l10-5l12-3M2517 905l6-8l3-8l4-8M2517 905l4-9l2-9M2530 881l1-9l1-9M2530 881l-2-8l-4-9M2530 881l7-7l6-6M2569 914l4-8l3-9M2603 901l10-6l8-5l6-7l7-5l7-6l7-5M2152 1219l5 11M2142 1198l8 4l8 4l7 5M2150 1202l0 9l2 9M2165 1211l9-1l9-2M2165 1211l6 6l7 7M2157 1230l5 7l6 8l3 8M2162 1237l9 0l9-4M2171 1253l5 7l5 8M2171 1253l0 9l-1 9M2157 1230l-3 8l-6 7l-3 9l-3 8M2154 1238l-9-1l-8-4M2145 1254l-9 1l-9 1M2142 1262l2 9l3 8M2142 1262l-6 7l-7 5M2188 1199l-2 9l-2 8M2187 1181l5 8l7 6M2184 1216l-3 9l-4 8M2181 1225l6 7l6 6M2184 1216l-5 8l-4 8l3 8l2 9M2213 1185l5 8l3 8l8 6l6 6M2221 1201l-1 9l0 9M2260 1173l8-5l7-6l6-6M2251 1175l1-9l-2-9M2268 1168l9 3l7 5M2281 1156l4-8l1-9l-1-9l-3-8M2285 1148l8-4l7-6M2282 1122l-5-8l-7-5M2282 1122l0-9l1-9M2281 1156l9-3l8-2l9-4M2290 1153l6 6l5 7M2307 1147l7-5l9-3M2307 1147l8-3l9-1M2268 1193l11 5l11 2M2256 1191l7 5l8 5l7 6l9 1l9 1M2278 1207l3 8l5 8M2290 1200l5-7l5-8M2290 1200l9-3l8-3l9 0l9 2M2307 1194l6-7l6-6M2325 1196l9 2l9 1M2325 1196l8 4l8 5M2290 1200l5 8l4 8l6 7l7 5M2295 1208l7 6l8 5M2312 1228l8 4l9 1M2312 1228l5 8l3 8M2142 1190l-5 7M2156 1179l-4 8l-5 7M2142 1190l-8 3l-8 4M2137 1197l-2 9l-1 9M2137 1197l-8 4l-8 4M2176 1229l-4 8l-3 9M2176 1229l-8 4l-9 3M2169 1246l-7 5l-9 3M2169 1246l-1 9l0 9M2169 1246l-4 8l-4 8l2 9l2 9M2214 1252l-2 9l-3 9M2234 1284l9 4l8 1M2227 1278l9 1l9-1M2251 1289l8-5l9-2M2251 1289l7 6l4 8l4 8M2258 1295l-4 9l-5 7M2266 1311l7 6l6 6M2266 1311l1 9l-1 9M2226 1289l3 9l0 9l-1 9M2222 1281l8 5l8 3l9 3M2230 1286l1 9l-1 9M2247 1292l8 2l9 2M2247 1292l7 6l8 3M2229 1298l-8 4l-7 6M2228 1316l0 9l1 9l-1 8M2229 1334l7 5l7 7M2228 1342l2 9l0 9M2228 1342l-4 8l-2 9M2228 1316l-3 8l-2 9l-2 9M2223 1333l8 4l9 2M2221 1342l2 9l-1 9M2221 1342l-3 8l-5 8M2227 1160l8-3l6-6l5-8M2235 1157l9 3l9 1M2246 1213l9-2M2272 1247l8 10l5 11M2257 1229l4 8l2 9l3 8M2261 1237l8 3l9 2M2266 1254l6 7l5 7M2266 1254l-1 9l0 9M2280 1257l7 4l7 6M2285 1268l2 8l4 9l6 7l6 5l7 6M2297 1292l3 8l5 8M2285 1268l1 9l0 9l4 8l4 8M2262 1244l8 5l8 5M2255 1239l-4 8l-5 8M2278 1254l8 2l9 3l8 4M2286 1256l1 9l1 9M2303 1263l9 1l8 2M2303 1263l5 7l5 8M2278 1254l5 7l8 5l6 7M2283 1261l9-1l9 0M2297 1273l7 5l8 4M2297 1273l0 9l2 8M2282 1131l8-5M2267 1141l0-9l0-9M2282 1131l9-2l8-4M2290 1126l3-8l4-8M2290 1126l8-3l8-4M2268 1187l-4 8M2274 1170l-9 2l-7 5M2264 1195l0 9l-2 9M2264 1195l-3 8l-3 9M2318 1193l6 6l6 7l4 8M2314 1185l9-1l9 1M2323 1184l7 6l7 5M2334 1214l-5 7l-8 5M2334 1214l9 3l8 3M2334 1214l2 9l3 8M2336 1223l8 4l8 4M2368 1193l9 1l8 3M2352 1186l3 8l2 9M2385 1197l2 9l4 8M2385 1197l9-1l9 0M2385 1197l5 8l4 8M2369 1209l5 11l5 11l2 12M2353 1191l1 9l1 9l1 9l2 9M2354 1200l-6 7l-6 6M2358 1227l4 8l2 9M2358 1227l-4 8l-2 9M2369 1209l7 5l6 6M2379 1231l8 4l8 3M2381 1243l5 7l7 6l7 5l8 5M2393 1256l9 2l9-1M2408 1266l9 0l8-3M2408 1266l9 0l9 1M2408 1266l5 8l4 8M2381 1243l-4 7l-3 9l-4 8l-5 8M2377 1250l4 9l6 6M2365 1275l-7 5l-9 3M2365 1275l1 9l-2 9M2365 1275l-7 5l-7 5M2308 1079l0-9M2307 1088l-5-8l-3-9M2308 1070l-1-9l-2-9M2307 1061l-8-4l-9-3M2308 1070l2-9l5-8M2310 1061l-4-8l-4-8M2346 1063l-4-8l-1-9l-2-9M2346 1063l3-8l3-9M2339 1037l-6-7l-3-8M2339 1037l-1-9l-4-8M2355 1026l-3-12l0-12M2358 1049l-8-3l-9-2M2352 1002l-5-7l-4-8M2352 1002l-5-7l-5-7l-6-7l-4-8M2342 988l-9 2l-9 2M2332 973l-6-7l-4-8M2332 973l-3-9l1-9M2352 1002l3-8l2-9l3-9l4-8M2357 985l-1-9l1-9M2364 968l2-8l2-9M2364 968l8-5l6-6M2383 1037l10-6l11-5M2373 1044l1-9l1-9M2393 1031l3-8l4-8M2404 1026l5-7l8-5M2404 1026l9-2l8-3l7-5M2413 1024l7 4l7 6M2428 1016l7-6l6-7M2428 1016l9-3l8-4M2362 1091l9 1M2353 1091l7 6l7 4M2371 1092l9-2l8-2M2371 1092l6 6l7 7M2345 1054l-4-8l-4-8M2345 1054l3-9l4-8M2337 1038l-5-8l-3-8M2337 1038l-1-9l0-9M2378 1030l1-9l1-9l1-9M2380 1012l4-7l3-9M2381 1003l-3-8l-3-9M2381 1003l5-7l6-7M2388 1005l0-9l2-9l3-8M2382 1022l-5-7l-4-8M2393 979l-6-6l-8-5M2387 973l-1-9l-3-8M2393 979l3-9l-1-9l1-9l-2-9M2396 970l-8-5l-7-6M2394 943l-6-6l-4-8M2394 943l-2-8l-5-8M2394 943l0-9l0-9M2393 979l8-5l8-4l9-2l6-6l7-6M2418 968l8 4l9 2M2395 1024l9-2l8-3l8-4M2395 1024l7 6l8 5M2420 1015l8 5l5 7M2420 1015l6-7l6-7M2420 1015l9-1l9 1l9 3M2429 1014l7 6l4 8M2447 1018l8 1l9-2M2447 1018l4 8l3 9M2398 1081l8-3M2382 1088l8 3l8 4M2406 1078l8-5l8-5M2406 1078l9-2l9 0M2371 1062l-5-7M2385 1021l7-6l4-8M2382 1012l0-9l-1-9l-1-9M2382 1012l9-2l8-4M2380 985l-4-8l-4-8M2380 985l4-8l2-8M2388 1012l5-7l4-8l3-9M2393 1005l-3-9l-6-7M2400 988l-3-8l-1-9M2400 988l8-4l7-6M2440 1071l9-3M2431 1073l5-8l5-8M2449 1068l6-6l5-7M2449 1068l7 5l9 3M2441 1042l9 3l9 0M2456 1013l0-9l1-9l2-8l4-9M2456 1013l9-2l9-1M2463 978l0-9l0-9M2463 969l-8-5l-8-3M2463 978l5-7l3-9M2461 1016l6-7l5-7l5-8l4-8l4-8M2467 1009l9-2l8-5M2485 978l0-9l1-9l1-9l-1-9l-2-8M2487 951l7-6l5-7M2485 978l8-4l8-5l6-6M2493 974l4-8l4-8M2507 963l2-9l3-8M2507 963l8-5l8-4M2441 1064l-8-4l-7-6M2447 1070l-9-1l-8-4M2433 1060l-9 3l-8 3M2426 1054l-7-5l-8-4M2426 1054l-2-9l0-9M2461 1046l1-9M2461 1046l-5-8l-3-8M2479 1010l-3-8l-3-9l0-9l-2-8l-3-9l-4-8M2476 1002l-8-4l-9 0M2464 959l2-9l0-9M2464 959l-6-7l-5-7M2464 959l-3-9l-1-9l-2-9M2460 941l4-8l3-8M2458 932l-3-8l-4-8M2458 932l0-9l0-8M2479 1010l3-8l0-9l1-9l1-9M2482 1002l6-7l6-6M2484 975l-3-9l-4-8M2484 975l6-7l8-5M2544 1036l11-6M2487 1059l2-8l0-9M2487 1059l-3-8l-4-8M2489 1042l-5-8l-3-8M2489 1042l3-9l1-9M2535 1043l8-3l8-4l8-5l7-5M2551 1036l0-9l-1-9M2551 1027l-5-7l-3-9M2566 1026l3-9l5-7M2566 1026l8-4l9-2M2555 1030l7-5l7-6l5-7l5-8l5-7M2569 1019l-6-7l-3-8M2584 997l9 1l8 4M2584 997l4-8M2584 997l8-5l8-4l6-7M2600 988l8 3l7 5M2606 981l5-8M2555 1030l8-3l8-4l7-6l6-7l6-6M2563 1027l5-7l4-8l4-9l0-9l2-8M2576 1003l4-8l3-8M2590 1004l9 3l9 1M2590 1004l5-8l3-8M2590 1004l8-4l9-2M2568 1022l10-6M2528 1053l8-3l9-3M2528 1053l4-8l4-8M2568 1022l7 5l7 5l8 5M2582 1032l0 9l-1 9M2590 1037l9-1l9-1M2590 1037l4 8l3 8M2578 1016l6-6l6-8l4-8M2590 1002l8 0l9 1M2594 994l-1-9l-1-9M2594 994l8-3M2578 1016l12 3l12 2l12-1l12 0l12-3M2590 1019l4 8l4 8l6 6l9 2l9 3M2604 1041l8 6M2604 1041l5 8l3 9M2638 1017l6-6l7-5M2638 1017l8-3l9-1l2-9l3-9M2593 1008l5-11l3-12l6-10M2564 1046l9 2l9 2l8 4l8 3M2573 1048l7-6l7-6M2598 1057l9 0l9 2M2598 1057l6 7l6 7M2598 997l7-5l9-3l9-1l8-2M2607 975l3-9l2-8l-1-9l2-9l0-9l-5-8l-3-8l-2-9M2608 923l-9-1l-9 1M2613 931l4-8l4-8M2600 1045l-1-9l-3-9l-4-8M2599 1036l-7-6l-6-6M2592 1019l-6-6l-7-6M2592 1019l-4-8l-2-8M2592 1019l-2-9l1-9M2600 1045l7-5l8-4l9-3l8-4l6-6M2624 1033l9 0l9 0M2624 1026l4-11l7-10l5-11M2624 1026l7-5l7-6l5-8l1-8M2640 994l6-6l6-7l4-8M2503 1076l5-7l4-8M2489 1086l3-8l4-8M2512 1061l0-9l-1-9l-2-9l-4-8l-1-9M2509 1034l1-9l0-9M2512 1061l5-8l6-7l7-5M2511 1067l-1-9l-4-8M2517 1084l-9-3l-8-4M2506 1050l-9 1l-8 2M2506 1050l-4-8l-6-7l-7-5l-7-5l-8-5M2489 1030l-6-7l-4-8M2506 1050l1-9l1-9l1-9M2508 1032l-7-6l-5-7M2509 1023l-5-7l-3-9M2509 1023l7-6l7-6M2582 1132l8 8l10 8l11 5l10 6M2573 1124l9-4l7-5l5-8l6-6M2589 1115l-2-9l-4-8M2600 1101l0-9l1-9M2600 1101l6-7l7-6M2600 1101l9-3l8-2M2600 1148l9-1l9 2l8 4M2618 1149l9-1l8 1M2626 1153l9 1l8 3M2626 1153l6 7l4 7M2621 1159l9 2l9 1l9 0l8 4l9 0M2630 1161l3 8l5 7l6 7M2633 1169l9 1l8 3M2644 1183l6 7l7 6M2644 1183l3 9l1 9M2665 1166l5-8M2665 1166l7 5l8 6l7 4l9-1M2687 1181l5 8l3 8M2621 1159l7 6l7 6l6 6l6 7l7 6l7 5M2628 1165l8-3l7-6l7-6l5-8l3-8M2650 1150l7-5l9-2M2647 1184l9 1l8 4M2661 1195l9 3l9 1l9-1l7 6l7 5M2661 1195l5 7M2604 1106l11 3l12 1M2615 1109l2 9l2 9l1 9M2619 1127l7 6l8 4M2620 1136l3 8l1 9M2620 1136l-6 6l-6 7M2627 1110l9 0l9 2l8 3l9 3l8 3M2645 1112l8-3M2670 1121l9 0l9-2M2670 1121l7 7l6 6M2676 1122l10-5M2133 1233l1-9M2134 1242l8-5l8-5M2134 1224l0-9l0-9M2134 1224l5-8l7-6M2176 1221l2-9M2172 1229l0-9l0-9M2207 1221l9 3M2227 1209l8-4l8-4M2218 1211l7 6l8 4M2243 1201l3-9l6-7M2243 1201l9-2l9-1M2235 1227l9 1l8 2M2218 1219l9-1l9-2M2244 1228l6 6l6 7M2252 1230l9-4l7-5M2252 1230l9 4l8 4M2198 1230l9-2M2190 1235l9-2l9-1M2207 1228l8-4l8-4M2207 1228l8 3l9 2M2230 1232l8 5M2230 1232l-2 9l-1 9M2251 1205l6-7l7-5M2241 1220l9 1l9-1M2264 1193l5-8l6-6M2264 1193l9-3l8-3M2260 1225l9-2l8-3M2251 1225l7-6l6-7M2269 1223l6 8l6 6M2277 1220l4-9l2-9M2277 1220l8-4l8-5M2201 1234l1-8M2195 1251l9 0l9 0M2202 1226l-1-9l-3-9M2202 1226l5-8l3-8M2227 1233l9 0l6-6l9-3M2236 1233l8 4l8 4M2231 1195l0-9l-2-8M2231 1204l-3-8l-3-9M2229 1178l-8-5l-7-5M2229 1178l-1-9l-2-9M2245 1209l9-2l9 0M2236 1210l9 3l9 1M2263 1207l8-4l7-5M2263 1207l9 1l8 3M2272 1208l0 9l2 9M2232 1299l7 5l9 0l9 2M2239 1304l4 8l6 7M2217 1344l-8 5l-6 6M2217 1344l-9 0l-9-1M2203 1355l-2 9l-2 9M2203 1355l-9 3l-9 2M2220 1362l6 6l5 7l7 7M2231 1375l-1 9l2 9M2238 1382l7 4l9 4M2238 1382l2 9l5 7M2228 1378l4 8l3 8M2228 1378l9 1l8 4M2235 1394l3 9l1 9l1 8M2238 1403l-6 6l-4 8M2240 1420l-7 6l-7 6M2235 1394l1 9l4 9M2206 1373l-6 7l-8 5M2213 1368l-1 9l0 9M2192 1385l-5 7l-4 8M2192 1385l-8 2l-8 4M2291 1276l6 6M2262 1258l6-6l8-5M2286 1268l7 5l7 6M2297 1282l9 2l9 1l8 3M2297 1282l2 9l4 8l1 9l6 8l4 7M2304 1308l0 9l-2 9M2282 1212l5-7l7-6M2282 1212l0-9l-2-9M2294 1199l1-9l-1-9M2294 1199l9-2l8-3M2269 1199l-8-5l-8-3M2269 1199l3-8l3-9M2253 1191l-9 2l-9 0M2253 1191l-7-6l-5-7M2269 1166l0-9l2-9l3-9M2270 1175l7-7l7-6l7-4M2284 1162l6 6l5 8M2291 1158l7-6l7-6M2291 1158l9-1l9-3M2271 1148l2-9l-1-9M2274 1139l2-8l0-9l1-9M2276 1131l7-6l6-7M2274 1139l6-6l5-8l3-8M2280 1133l-3-8l-3-9M2288 1117l-2-9l-1-9M2288 1117l-2-9l-2-9M2288 1117l6-7l7-5M2297 1162l8-9l5-11M2290 1172l9-2l8-5M2310 1142l-1-9l2-9l0-9M2310 1142l7-6l5-7l4-9M2317 1136l0-9l-2-9M2326 1120l2-8l5-8M2326 1120l5-7l7-5M2303 1227l1-9l-5-7l-6-7M2304 1218l3-8l3-8M2346 1199l-2-9l-2-8M2346 1199l3-9l2-8M2342 1182l-6-7l-8-5M2342 1182l4-9l5-7M2383 1176l10-7l11-4M2366 1193l0-9l-3-8l0-9l-3-9l-3-8M2363 1167l2-9l0-9M2383 1176l9 2l8 3l8 5M2392 1178l5 7l4 8M2404 1165l5-8l4-8l2-9M2409 1157l7-6l6-6M2404 1165l9-2l8-2l8-5M2421 1161l1-9l0-9M2429 1156l5-8l2-8M2429 1156l9 0l9 1M2384 1207l9 0l8-3l9-1M2366 1203l8-4l9-3l9 0l8-4l9-3M2392 1196l8 2l9 2M2393 1207l6-7l7-6M2410 1203l8 4l9 3M2410 1203l9-2l9 1l9-1l9-2M2419 1201l1 9l1 9M2446 1199l8-4l6-6M2446 1199l9-1l8-2M2410 1203l9 1l8 4l8 5M2419 1204l8-4l8-4M2435 1213l8 4l8 3M2435 1213l4 8l3 8M2364 1276l9 2M2364 1276l9-3l8-2M2373 1278l9-1l9 0M2373 1278l6 7l8 5M2374 1269l5-8l0-9l-2-9M2379 1261l5-7l4-8M2424 1297l7-6l5-8l3-8M2431 1291l8-3l8-4M2439 1275l-2-9l0-9M2439 1275l7-6l7-5M2450 1290l9-1l9 0l9 2M2433 1294l8 2l9 1l9 1M2441 1296l4 8l6 7M2450 1290l3-9l2-9M2477 1291l9-2l8-4l8-4M2486 1289l9 1l8-2M2502 1281l7-5l8-5M2502 1281l9-1l8-4M2477 1291l7 6l6 7M2445 1314l6 7l4 8M2438 1308l2 9l1 9M2455 1329l7 5l7 6l5 7M2462 1334l9 0l9-1M2455 1329l-1 8l0 9l1 9l-5 8M2351 1273l-6 6M2359 1268l-4 8l-3 9M2345 1279l-4 8l-6 7M2345 1279l-9 1l-9-1M2375 1302l7 5M2375 1302l5 8l4 8M2381 1333l5 7l6 7M2374 1316l9 4l7 5M2381 1333l9 1l9 1M2392 1347l9 3l9 2l8 3l9-1l8-4M2418 1355l6 7l8 5M2392 1347l0 9l-2 9M2364 1335l-5 7l-3 9M2367 1326l2 9l4 8M2356 1351l-9 3l-8 4M2356 1351l2 9l0 9M2356 1351l-8 5l-8 4M2413 1279l1 9M2414 1261l-8 6l-7 5M2413 1279l-6 7l-5 7M2414 1288l4 8l2 9M2414 1288l-3 9l-4 8M2452 1266l9 0M2443 1267l8-5l9-2M2461 1266l8-4l9-3M2461 1266l9 3l8 4M2452 1302l1 9l2 9M2450 1293l-6 7l-7 6M2455 1320l-1 9l-1 9M2455 1320l5 7l7 6M2460 1327l-2 9l-1 8M2455 1320l-2 8l-5 8M2486 1319l8 5l7 5l8 5l8 3M2473 1338l1 9l0 9l2 9M2473 1329l5 8l2 9l1 9l4 8l1 9M2474 1347l7 5l7 6M2476 1365l6 7l8 4l9 2M2476 1365l-2 9l1 9M2462 1275l2 9M2460 1266l-7 6l-7 4M2464 1284l5 7l6 7M2464 1284l-4 7l-3 9M2460 1291l-9 1l-9-1M2488 1284l-7 5l-6 7M2495 1303l3 9l2 8l-2 9M2491 1304l2 9l3 8M2491 1304l8 5M2507 1198l6-6l5-8l3-8M2493 1210l-4-9l-3-8M2521 1176l-1-9l1-9M2521 1176l1-9l1-9l3-9l-2-9l-2-8M2526 1149l6-7l4-8M2521 1176l6-7l4-8M2527 1169l-3-9l-4-8M2506 1158l8-5l7-6l5-6M2514 1153l7 5l8 4M2526 1141l5-8l4-8M2526 1141l9-3l8-5M2511 1136l-4-12l-5-11l-1-12l1-11M2507 1124l-8-4l-6-7l-6-6M2499 1120l1-9l0-9M2487 1107l-9-3l-8-4M2487 1107l-6-7l-5-7M2502 1090l-5-8l-5-7l-4-8l-9-4l-7-6M2488 1067l-1-9l0-9M2502 1090l7-6l6-7l4-8M2509 1084l9 1l8 3M2519 1069l1-9l0-9M2519 1069l5-8l2-8M2522 1141l8-8l9-8l10-8l10-6M2530 1133l9 1l9 3M2549 1117l9-1l8-1M2559 1111l7-6l6-6l7-6l9-2M2566 1105l7 5l8 4M2588 1091l8 3l7 6M2588 1091l6-7l8-4M2588 1091l9-1l9 1M2559 1111l9-3l8-2l8-4M2576 1106l9 3l7 5M2584 1102l7-6l5-8M2584 1102l9 0l9 0M2518 1254l-7 6l-8 4M2518 1254l1 9M2503 1264l-4 8l-2 8M2503 1264l-9-2l-8-4M2494 1262l-2-9l-2-9M2527 1269l-6 6l-8 5l-5 7M2513 1280l-9-2l-9-2M2528 1286l-8 3l-9 1l-9-2l-9 0l-9-2M2502 1288l-9-2l-7-5M2511 1318l-5 7l-4 8l-6 7l-5 7l-5 7l-1 9l-1 9M2511 1318l-9 7l-9 8l-11 4l-12 1l-12 1M2502 1325l3 9l2 8M2470 1338l-4-8l-4-8M2458 1339l-8 5l-9 2l-9 0l-8 3l-9 3l-9 1M2424 1349l-9 1l-9 1M2458 1339l-9-1l-9-4M2449 1338l-6-7l-7-6M2324 1428l4 16M2322 1293l11-5l10-7M2274 1294l4-8l3-8l4-8l4-9l4-8M2278 1286l8-3l8-6M2289 1261l-1-9l2-8M2293 1253l1-8l2-9M2293 1253l6-7l5-7M2298 1295l6 6l8 5l8 3l9 0l9-2l9-4M2329 1309l9 2l9 2M2343 1281l7-5l7-6l8-4l6-6M2350 1276l2-9l-1-9M2371 1260l3-9l4-8M2374 1251l-1-9l0-9M2371 1260l9-3l9-1M2343 1281l9-2l9 0l8 1l9 4l6 6M2361 1279l5 7l3 8M2384 1290l1 9l0 9M2384 1290l9 1l9 3M2384 1290l6 7l8 4l9 3M2390 1297l1 9l-3 8M2279 1372l1 12l-1 12l-2 12M2284 1337l7 6l8 3l9 2l9 0l9-1M2291 1343l2 9l0 8M2308 1348l9-2l8-4M2326 1347l2 9l2 9M2326 1347l7-6l5-7l5-8M2326 1347l9 3l8 2l8 4M2335 1350l4 8l4 8M2351 1356l8 4l8 5M2351 1356l5 8l3 8M2279 1372l-8 3l-8 6l-7 4M2271 1375l2 9l-1 9M2256 1385l-6 7l-7 6M2256 1385l-9 2l-8 3M2277 1408l2 9l1 9l2 9l1 9l6 7l4 7M2283 1444l-2 8M2302 1376l-8 9l-10 7l-11 4l-11 5M2302 1376l0 9l2 8M2273 1396l-9 2l-8 4M2262 1401l-4 8l-3 9l-1 9M2255 1418l-7 6l-5 7M2262 1401l-9 1l-8-3l-9-3l-9-1l-9-1M2236 1396l-3-8l-5-8M2320 1390l8 5l8 2l9 2l9 2M2328 1395l7-6l5-7M2354 1401l5 7l8 6M2496 1393l16 5M2334 1312l5-8l8-5M2316 1331l1-9l2-8M2317 1322l-6-6l-7-6M2347 1299l-3-8l-3-9M2347 1299l6-6l7-5l8-5l7-6l4-8M2368 1283l9-1l8-4M2347 1299l8-3l8-4M2355 1296l9-1l9 1M2337 1366l-1 9l1 8M2337 1366l7 5l8 4M2337 1383l-6 7l-7 5M2337 1383l1 9l2 9M2385 1357l8 9l8 3l9 2M2393 1366l8 3l9 2M2401 1369l6 7l6 6M2393 1366l2 9l3 8l2 9M2398 1383l9 2l7 5M2400 1392l4 8l5 8M2412 1365l6 7l6 6l5 8l7 5l7 6l8 5M2436 1391l9 1l9 1M2429 1386l2 9l2 9l0 9M2433 1404l-9 3l-7 6M2523 1330l17-2M2331 1325l8 3l9 2M2324 1320l7-5l7-6M2348 1330l8-3l9-2M2348 1330l8-3l9-1l9-2M2356 1327l7-5l7-7M2348 1330l8 4l9 2l9 3M2356 1334l7 6l8 5M2375 1340l7 10l4 11l3 12M2366 1332l1 9l3 8M2389 1373l-2 9l-2 8M2389 1373l6 7l6 6l8 4l6 7l8 5M2389 1373l1 9l0 9l-1 9l1 9l0 9M2400 1330l9 0l9-2l9 0M2409 1330l4-8l2-9M2427 1328l8-3l9-1M2427 1328l9 0l9-1M2426 1328l9-9l7-9l8-9l8-10M2435 1319l9-1l9-2M2444 1318l4-8l6-7M2450 1301l9 1l9 1M2458 1291l6-6l5-7l6-7M2469 1278l9-1l9 0M2475 1271l2-9l5-8M2475 1271l7-6l5-8M2458 1291l8-3l7-5l8-5M2466 1288l-1-9l0-9M2481 1278l7-5l8-5M2481 1278l9-2l8-4M2466 1335l6 10l5 11l5 11l6 11l5 10M2472 1345l-1 9l-2 9l-3 8M2469 1363l4 8M2466 1371l3 9l4 8M2466 1371l-8 5l-6 6M2493 1388l8 5l7 6M2483 757l-7-17M2403 843l-2-12l-3-12M2408 902l7-5l5-7l4-8M2420 890l-7-6l-7-5M2424 882l0-9l0-9M2424 882l6-8l4-7M2403 843l4-8l6-6l6-7l6-7M2413 829l-2-9l-1-9M2425 815l2-9l1-9M2398 819l-7-9l-9-8l-8-9l-10-7l-9-8M2391 810l-5-8l-4-8M2355 778l-9-3l-7-5l-7-5M2339 770l-9 1l-9-1M2332 765l-9-2l-9-1M2332 765l-5-8l-6-7M2355 778l-3-9l-1-9l1-9l1-8M2351 760l-7-5l-5-7M2353 743l0-9l-2-9M2398 819l2-8l2-9l5-8l3-8M2400 811l9 0l9-1M2410 786l-1-9l0-9M2410 786l7-6l7-6M2432 863l4-8l4-9M2430 890l-7-7l-6-6M2436 855l8-5l7-5M2440 846l-3-8l-4-8l-6-7M2433 830l0-9l1-9M2427 823l-9-2l-8-4M2440 846l6-6l5-7l7-6M2446 840l-1-9l-1-9M2458 827l4-8l3-9M2460 848l0-12l-6-7l-7-6M2460 836l-1-9l0-9l2-9l-1-9l-1-9M2461 809l2-8l1-9M2460 836l5-7l5-7l3-9M2234 999l11-5M2214 1019l9 1M2245 994l3-9l1-9l0-9M2248 985l-8-4l-7-6M2249 967l-3-8l-2-9M2249 967l0-9l0-9M2245 994l9 0l9 3l8 3M2269 968l10-6l12-4M2216 981l2-8l2-9l3-9l2-8M2218 973l9-1l8-4M2223 955l-4-8l-5-7M2225 947l-3-9l-2-9l2-9M2220 929l7-6l4-8M2222 920l0-9l-2-8M2222 920l5-7l4-8M2225 947l5-8l5-7l3-9M2235 932l8-5l8-4M2238 923l0-9l3-8M2238 923l7-6l4-8M2269 968l0-9l-3-8l-3-9l-1-9M2269 959l5-7l4-8M2262 933l-4-7l-5-8M2262 933l4-8l6-7M2291 958l5-7l7-5l9-3l7-6l6-7M2296 951l3-8l2-9M2325 930l9 0l9 2M2325 930l4-8l2-8M2325 930l7-6l7-5M2291 958l11-2l12 1l12 3l12 3l12 1M2302 956l6-7l5-8l5-7M2308 949l-5-6l-8-5M2318 934l4-8l4-8M2318 934l8-4l6-6M2350 964l4 8l2 8M2350 964l7-5l6-7l6-6M2363 952l-1-9l-1-9M2369 946l3-9l2-9M2369 946l9-4l8-4M2350 964l7 5l7 6l7 5M2357 969l4 8l5 7M2371 980l9 0l9 1M2371 980l5 8l4 7M2198 934l-5-10l-8-10M2205 958l4-9l4-7M2185 914l2-8l1-9M2185 914l-8-3l-9-2l-8-4l-8-3M2177 911l-9 1l-9-1M2152 902l-9-2l-8-3M2152 902l-7-6l-8-5M2185 914l-2-8l-2-9l-3-9l-2-8M2183 906l2-9l-1-9M2176 880l2-9l0-9M2176 880l-6-7l-7-6M2176 880l-1-9l-1-9M2211 905l-2-12l0-12M2217 928l3-8l3-9M2209 881l-6-6l-7-5l-8-4M2196 870l-9 1l-8 3M2188 866l-9-1l-9 0M2188 866l-6-8l-7-5M2209 881l1-9l2-9l1-8M2210 872l-5-7l-4-8M2213 855l-1-9l1-9M2213 855l4-8l5-8M2266 885l12-4l12-2l11-3l11-5l9-8M2255 890l9 4l8 3l8 3M2264 894l8-2l9 1M2280 900l9-4l8-3M2280 900l8 5l9 3M2290 879l5-7l5-8l2-9M2295 872l0-9l-1-9M2312 871l-1-9l1-9l1-9M2321 863l0-9l0-9l-2-9l0-9l-6-7l-4-8M2319 827l1-9l3-8M2321 863l7-6l7-5l8-4l9-3M2335 852l-1-9l-1-9M2352 845l-1-9l-1-9M2352 845l5-7l6-7M2352 845l8 3l9 1M2254 867l12-2l12-2l11-4l11-5l12-2l12 1l12 1l11 5M2278 863l-1-9l-1-9l-1-9M2276 845l8-3l8-4M2275 836l-3-8l-3-8M2275 836l4-8l5-8M2336 854l5 8l7 6l4 8l7 6M2347 859l9-2l9 1l9 1l9-2l9-1l8-3M2365 858l6 6l5 8l6 7l6 6l5 8M2382 879l3 8l4 8M2400 853l6-7l3-8l4-8M2409 838l7-6l7-5M2413 830l2-9l3-8M2413 830l6-7l5-8M2400 853l9 2l9 0l8-3M2409 855l8 4l9 2M2426 852l6-7l6-7M2426 852l9 0l9-1M2347 859l6 6l7 5l9 3l8 4l8 3l8 6M2360 870l9-3l9-1M2377 877l3 8l5 8M2393 886l9-1l8-1l9-3M2402 885l4-7l4-8M2419 881l7-6l5-7M2419 881l9 1l9 0M2393 886l6 6l4 8l6 7l5 7l7 6M2409 907l1 9l0 9M2270 820l-6-7l-5-7l-6-7l-4-8l-4-8M2259 806l-9 1l-8 4M2245 783l-7-5l-7-7M2245 783l-3-8l1-9M2242 775l-8-4l-8-4M2273 796l-3-11l-1-12l-2-12l-3-12M2272 808l8-5l7-4l8-6l6-6l8-5M2287 799l8 4l7 6M2301 787l9 0l9-2M2309 782l4-8l7-6M2309 782l6-6l7-6M2269 773l6-8l6-6l4-8M2275 765l-2-8l-3-9M2285 751l-1-9l-1-9M2285 751l7-6l7-6M2264 749l-4-8l-4-8l-5-7l-4-8M2260 741l6-7M2247 718l-5-7l-4-9M2247 718l-1-9l-3-9M2264 749l5-8l3-8l3-9l3-8M2269 741l-7-6l-4-8M2275 724l9-2l9 0M2278 716l6-7M2274 797l-1-12l-2-12l1-12l-2-12M2274 797l9-3l9-2l9 0l8-2M2283 794l8 3l9 2M2309 790l9-3l9-2M2309 790l9 0l9-3M2272 761l-7-5l-9-3M2270 749l-4-8l-1-9l-2-9l-2-8l-4-9M2266 741l-8-4l-8-4M2261 715l1-9l-2-9M2270 749l3-9l2-8l2-9M2275 732l-8-5l-7-6M2277 723l0-9l-1-9M2277 723l8-5M2292 810l11-4l10-7l10-6l8-9M2292 810l0-9l0-9l-1-9l-3-9M2292 792l5-8l7-5M2288 774l-3-8l-3-9M2288 774l-1-9l0-9M2331 784l0-9l2-9l2-9l0-9l0-9M2331 775l-6-6l-9-3M2325 769l-9 4l-7 5M2331 784l9-2l9-1l8-2l9-3M2340 782l5-7l4-9M2357 779l5-8l5-7M2366 776l8-4l8-4M2374 772l9 2l9 1M2366 776l9-2l9 0M2417 795l3-15M2265 964l-12 0l-12-2M2300 973l-9 3l-8 1M2241 962l-6 7l-6 7M2241 962l-8-2l-9-2l-9-2l-9-1M2224 958l-8-5l-6-7M2206 955l-8 4l-8 4M2206 955l-7-5l-7-6M2241 962l-8-2l-9-4l-7-5l-6-7M2233 960l-4-8l-4-9M2211 944l-8-3l-9-2M2211 944l1-9l-3-9M2335 879l2-12l6-10l5-11l7-10M2333 915l9-2l9 0l9 1l9-1l8-2l9-3M2342 913l7 6l7 5M2377 911l6-7l7-6M2386 908l7-5l9-3l8-4M2402 900l2-9l2-9M2410 896l6-6l7-6M2410 896l9 2l9 0M2386 908l9-1l9 2l8 3l9 0l9 1M2412 912l8 5l6 6M2343 857l8-5l8-4l8-2M2351 852l7 6l8 4M2367 846l8-5l7-5M2367 846l9 0l9 1M2355 836l2-9l4-8l6-7l7-5l6-7M2361 819l9 0l9 2M2380 800l2-9l1-8l-1-9M2383 783l-7-6l-8-4M2382 774l-2-9M2380 800l8-5l6-6M2355 836l6-6l7-6l8-4l8-6M2361 830l9 1l9 2M2376 820l0-9l1-9M2384 814l1-8l4-8M2384 814l8 2l9 2M2332 878l-12-2l-11-3l-12-1l-12 2l-12 1M2352 891l0-9l-3-9l-5-7l-6-7l-8-5M2352 882l-8-4l-8-4M2344 866l-2-9l0-9M2330 854l-8-4l-8-3M2330 854l-4-8l-5-8l-3-8M2321 838l-5-7l-3-8M2318 830l-7-6l-7-5M2318 830l-1-9l1-9M2309 873l-7-7l-8-3l-9-2M2294 863l-6 6l-5 8M2285 861l-9 1l-8 4M2285 861l-8-3l-9-2M2273 875l-9 3l-8 3l-9 3l-7 5l-8 5l-6 6M2264 878l-8-3l-9-2M2226 900l-9-2l-9 0M2226 900l-6 7l-7 6l-8 3M2220 907l4 8l5 7M2205 916l-4 8l-5 8M2205 916l-9 0l-9 2M2226 900l-9 1l-9-2M2217 901l-8-4l-8-4M2273 875l-9 0l-9 1l-9 0l-9 1l-9 1l-8 4M2255 876l-8-4l-7-6M2237 877l-6-7l-7-5M2220 882l-7 6l-6 6l-5 8l-1 9l1 9M2202 902l-8 5l-8 3M2220 882l-8 3l-9 4l-8 2l-8 5l-8 4M2195 891l-9 0l-9 0M2385 864l10-6l8-8l9-9l8-9l10-6l9-9M2395 858l9 3l8 2l9 2l8 4M2404 861l-1 9l3 9M2429 869l9 3l8 4M2429 869l7 6l4 8M2439 817l7-5l8-4l7-6l8-5l5-6M2406 823l-8-9l-6-11l-4-11l-4-12l-4-11M2392 803l-7-6l-6-7l-7-5M2379 790l-1-8l-3-9M2372 785l-9-2l-9-1M2372 785l-2-9l-2-9M2380 769l-5-7l-6-7l-6-7M2375 762l1-9l-1-9M2363 748l-9-2l-8-4M2380 769l-6-7l-7-5l-7-5l-7-6M2374 762l-9 0l-9 2M2353 746l-9-2l-9-1l-9 1M2335 743l-6-7M2353 746l-4-9l-4-7M2380 769l-1-9l-2-8l-6-7l-3-9l-5-7l-4-8M2368 736l0-9l-3-9M2377 752l0-9l-2-9M2417 795l12 0l9 0l9-2l9-1M2447 793l1-9l3-8M2420 780l-1-12l2-12l-1-12l-1-12l2-12M2419 768l-5-7l-7-7l-4-8M2414 761l-3-9l-3-8M2403 746l-2-8l-1-9M2419 732l-8-4l-9-1l-8-2M2402 727l-6-7M2420 780l4-11l5-11l6-11M2424 769l8-3M2435 747l6-6l9-3M2435 747l6-6l8-4M2441 741l3-8l4-8M2630 953l14 15M2566 912l1 12l3 12l4 11M2566 912l-2 9l-4 8M2574 947l8 5l7 5l8 4l8 4M2589 957l-3 9l-4 8M1923 1461l-4-11M1913 1510l-7-6l-8-4M1913 1510l-3-9l-4-8M1898 1500l-9-3l-8-2M1898 1500l-7-6l-6-6M1891 1494l1-9l3-8M1924 1473l6-7l7-5l2-9l3-8M1919 1450l-7-5l-9-3l-8-4l-9-2l-8-3M1895 1438l-7-6l-8-3M1919 1450l-6-6l-8-4l-9-3l-9 0l-9 0M1905 1440l-7-6l-7-6M1878 1437l-2-9l-1-9M1878 1437l-7 5l-6 7l-5 8M1871 1442l5 8l4 8M1878 1437l-8-3l-9-2M1919 1450l-1-9l1-9l1-9l1-9M1919 1432l6-6l5-8M1921 1414l-4-8l-4-8M1921 1414l6-6l7-6M1947 1474l5-7M1927 1492l9-3l7-5M1952 1467l-4-8l-3-9M1952 1467l-2-9l-4-8l-6-7l-6-6l-6-7M1940 1443l-2-9l-3-8M1952 1467l8-4l8-4M1886 1420l-6-11l-7-10M1892 1443l4-8l4-8l5-8M1900 1427l-6-8l-6-6M1905 1419l4-8l5-7M1905 1419l8-4l6-7M1880 1409l1-9l-1-9l-2-9M1881 1400l7-6l5-8M1878 1382l-4-8l-3-8M1878 1382l4-8l5-7M1873 1399l-8-4l-7-5l-5-8l-6-6l-5-8M1865 1395l-9 2l-8 2l-9 2l-8 5l-8 5M1839 1401l-9 0M1847 1376l4-9l3-8M1842 1368l-6-7M1842 1368l-4-8l-7-6l-5-7l-3-9l-1-9M1873 1399l1-9l-1-9l1-9M1874 1390l5-7l4-8M1874 1372l-4-8l-1-9M1874 1372l1-8l0-9M1847 1447l-8 5l-9 2l-7 5M1855 1445l-7-5l-8-4l-9-3M1840 1436l-1-9l1-9M1831 1433l-9 2l-8 4M1831 1433l-8-3l-9-2M1839 1452l-9-1l-9 0M1823 1459l-6 7l-6 6M1817 1466l-2 9l-3 8M1823 1459l-9-2l-8-3l-8-5M1854 1401l-5-8l-4-8l-3-8M1854 1401l4-8l5-8M1845 1385l-9-2l-9 1M1842 1377l-5-8l-2-8l-1-9M1835 1361l-9-2l-8-4M1834 1352l-1-9l1-9M1834 1352l6-7l7-5M1842 1377l0-9l1-9M1820 1355l-9-1l-9 3l-8 2M1811 1354l-8-5l-9 0l-9-1M1810 1340l-7-10l-8-3l-8-5M1811 1316l1-12l3-11l5-11l3-12M1809 1328l9-2l9 1l9-1l9 1M1818 1326l4-8l3-9M1845 1327l7-6l7-5M1845 1327l9-2l9 0M1845 1327l8 4l8 4M1823 1270l-2-9l-3-8M1823 1270l0-9l-2-8l-2-9M1821 1253l7-7l6-6M1819 1244l-4-8l-2-9M1819 1244l2-9l3-9M1823 1270l7-6l5-7l3-8l3-9l1-9M1830 1264l8-5l8-4M1838 1249l-2-9l0-9M1842 1231l-2-9l0-9M1840 1222l5-7l7-6M1842 1231l4-8l5-8l9-1l9 0M1713 1531l-15 1M1898 1471l-1-12l-3-12l-2-12l1-12M1899 1483l8-4l7-5l9-2l8-5M1914 1474l8-5l6-7M1931 1467l5-7l6-7M1931 1467l9 1l9 0M1892 1435l8-5l7-5M1893 1423l-1-9l-2-8l-2-9l-5-8l-4-8M1890 1406l2-9l0-9M1892 1397l6-7l5-7M1883 1389l2-8l4-9M1879 1381l-8-4l-9-3l-8-1M1871 1377l-5 8l-7 6M1854 1373l-9 3M1854 1373l-8-5l-7-6M1879 1381l2-9l2-8M1881 1372l6-5l8-6M1893 1423l5-7l4-8l4-9l3-8M1902 1408l-5-8l-3-8M1909 1391l0-9l2-9M1909 1391l7-5l8-4M1856 1523l-4 11l-6 10l-8 10M1856 1523l2 8l3 9M1838 1554l-3 8l-3 8M1838 1554l-7 5l-7 5l-8 5l-8 4M1821 1512l-9-2l-9 0l-9-1l-9 0M1803 1510l-4-8l-1-9M1785 1509l-6 6l-8 4M1785 1509l-9 1l-8 4M1785 1509l-8-4l-8-4M1786 1522l-7 5l-8 4l-9 2l-8 4l-7 6l-8 4M1754 1537l-9 2l-8 5M1743 1526l-2 9l-5 8l-4 7l-3 9l2 9l-1 9M1771 1471l-11 9M1854 1455l-10 6l-8 9l-7 10l-3 12M1854 1455l-9-3l-8-3M1829 1480l5 8l5 8M1826 1492l-3 8l-5 8l-6 7M1818 1508l-9 0l-9-3M1812 1515l0 9M1812 1515l-7 5l-7 5M1805 1520l-9-2l-9 0M1826 1492l-2 9l-5 7l-2 9l-2 9l0 9l0 9M1832 1443l-5 8l-6 6l-6 6l-5 8l-4 8M1821 1457l-9 1l-9 1M1810 1471l-9 0l-8 2M1806 1479l-3 8l-2 9l-3 9M1806 1479l-8 5l-8 4l-7 6l-6 7l-7 5M1783 1494l-8 1l-9 1M1782 1459l6 7l7 5l7 6l8 4l8 3M1788 1466l0 9l-1 9l-1 9M1788 1475l-9 3l-8 3M1818 1484l9-1l9-2l8-3M1836 1481l5 6l6 7M1818 1484l6 7l8 4M1760 1480l-8-3l-8-5M1752 1477l-9 1l-9 2M1760 1480l-5 8l-5 7l-4 8l-4 8l0 9l-1 9M1760 1480l-7 6l-8 4l-9 3l-8 3l-7 6M1753 1486l-1 9l-1 8M1721 1502l-2 9l-1 8l-2 9l-7 6M1760 1480l-9 1l-9 0l-9 2l-8 3l-8 4l-3 9l-4 8M1990 1348l7-5M1990 1348l9 2l7 5M1997 1343l1-9l3-9M1997 1343l9-2l9 2M1962 1330l-9-3l-9-2M1947 1320l-7-6l-6-7M1954 1325l-9 0l-9-1M1934 1307l-8-2l-9-2M1934 1307l-1-9l-2-8M1957 1313l-6-7l-6-6M1957 1313l3-8l2-9M1945 1300l-9-2l-9-2M1936 1298l-9 2l-9 2M1945 1300l-2-9l1-9M1929 1372l-9 3M1929 1372l-9-2l-8-5M1920 1375l-8 5l-8 1M1920 1375l-9 1l-9-1M1907 1329l-6-7l-6-6l-9-1l-9-3M1895 1316l-7-6l-5-7M1917 1326l5-8M1909 1351l-6-6M1928 1322l-1-8l-3-9M1934 1299l-1-9l-3-8l-5-8l-5-7M1933 1290l-9 2l-9-1M1925 1274l2-9l0-9M1920 1267l-9-2l-9-2l-8-3M1902 1263l-5 8l-6 6M1894 1260l-9-3l-7-5M1894 1260l-8-5l-8-3M1920 1267l-5-8l-3-8M1934 1299l7-6l5-7l4-8l6-7M1946 1286l9-1l8-2M1956 1271l1-9l0-9M1956 1271l8-4l7-5M1895 1299l2-12M1889 1334l7-6l7-5M1897 1287l-5-8l-3-9l-3-8l-5-8M1889 1270l-9-1l-9 1M1881 1254l-7-5l-5-7M1881 1254l1-8l2-9M1897 1287l2-9l5-8l4-8M1899 1278l-2-9l0-9M1908 1262l-1-9l1-9M1908 1262l7-5l5-8M1860 1286l-9-9l-7-9l-7-10M1860 1286l3-9l5-7l7-6l6-6l6-7M1875 1264l8-4l8-3M1837 1258l-8-4l-7-5l-6-7M1829 1254l3-8l4-9M1816 1242l-9-2l-7-5M1816 1242l-4-8l-6-7M1837 1258l-1-9l-1-9l-3-9l-3-8M1836 1249l6-7l6-6M1829 1223l-7-6l-7-5M1829 1223l0-9l-1-9M1842 1271l-5-11l-2-12l-4-11l-4-11M1837 1260l8-3l9-4M1827 1226l-7-6l-8-5l-7-5l-8-4M1820 1220l-9 0l-9 0M1797 1206l-9 2l-9 1M1797 1206l-4-9l-5-7M1827 1226l-2-9l0-9l2-9M1825 1217l8-4l9-3M1827 1199l-4-8l-2-9M1827 1199l6-7l5-7M1833 1192l8 2l9 3M1848 1268l0-12l4-11l4-11l5-11M1848 1256l8-5l8-3l9-2M1864 1248l8 4l8 5M1873 1246l6-6l8-6M1873 1246l8 3l9 1M1861 1223l2-9l1-9M1861 1223l2-9l-1-9l-1-9l1-9M1863 1214l-6-7l-7-5M1862 1187l-3-9l-5-7M1862 1187l1-9l0-9M1861 1223l7-7l6-6l4-8l0-9l-3-9M1878 1202l7-6l6-6M1851 1268l4-11l4-12l7-9l8-9M1851 1268l-4-8l-5-8l-2-8M1847 1260l-7-6l-7-5M1840 1244l-7-6l-9-4M1840 1244l-2-9l1-9M1874 1227l3-8l4-9l4-8M1881 1210l-7-5l-6-7M1885 1202l3-8l5-8M1885 1202l7-5l6-6M1874 1227l9-1l9 2l8 3l9 2M1883 1226l4-7l3-9M1909 1233l9 1l8 3M1909 1233l6 7l5 7M2177 1266l3-16M2120 1345l-2-9l-3-8M2121 1363l-7-5l-9-3M2120 1345l-8-5l-7-5M2115 1328l-5-8l-3-9M2115 1328l-4-9l-2-9M2149 1328l0-12l0-12l-1-12l3-12l0-12M2149 1328l-8-4l-9-1l-8-4l-9-3l-7-5M2124 1319l-7-5l-9-3M2151 1280l-4-8l-2-9M2151 1268l-4-8l-4-8l-3-8l-3-9M2147 1260l2-8l1-9M2137 1235l-8-1l-9-1M2137 1235l-6-6l-4-8M2137 1235l1-9l1-9M2151 1268l1-9l0-9l-3-8l-4-8M2152 1259l8-3l8-5M2145 1234l-5-8l-5-7M2140 1226l-1-9l-3-8M2145 1234l-2-9l-1-9M2164 1294l8 3l9 1l9 2l8 3l9 1l9 0M2181 1298l5 8l2 8M2216 1304l8-4l8-4M2216 1304l9 3l7 5l7 6M2225 1307l8-1l8-4M2239 1318l9 2l9 0M2239 1318l7 5l8 5M2239 1318l2 9l5 8M2177 1266l12-2l11-5l9-8l11-6l11-2M2189 1264l9 1l9 0l9-1M2198 1265l6 7l7 6M2231 1243l8-4l8-4l7-6M2247 1235l9 0l9 1M2254 1229l3-9l4-8M2254 1229l8-5l7-6M2231 1243l9 3l8 3l8 4M2240 1246l8-4l8-4M2256 1253l8 5l8 5M2256 1253l4 9l1 9M2180 1250l-7-10l-8-9l-7-9l-8-9l-10-7M2165 1231l-2-8l-4-8l-6-7M2163 1223l-9-1l-8-3M2153 1208l-6-7l-7-5M2153 1208l-1-9l0-9M2140 1206l-9-1l-8-3l-9 0M2131 1205l-8 3l-9 2M2114 1202l-9 4l-8 4M2114 1202l-7-6l-5-7M2140 1206l-8-4l-7-6l-5-7M2132 1202l2-9l0-9M2120 1189l-8-5l-7-6M2120 1189l-4-8l-5-8M2180 1250l5-11l8-9l8-9l9-8l8-9M2193 1230l-4-7l-7-6M2218 1204l3-8l1-9l-1-9M2221 1196l4-9l2-8M2221 1178l-3-9l-5-7M2221 1178l1-9l4-9M2218 1204l6-7l6-6l7-6l6-7l4-8M2237 1185l9-3l8-3M2180 1250l4-11l7-10l9-8l10-6l12-4M2184 1239l-3-9l0-9l2-8l-2-9l-2-9M2183 1213l5-8l7-5M2210 1215l8 5l7 5M2222 1211l7-6l8-3l9-2M2229 1205l8 4l9 3M2246 1200l9-2l8-4M2246 1200l9 0l9-2M2222 1211l9-1l8-2M2231 1210l5-7l8-5M2176 1482l14 8M2135 1467l9 0l9 3l9 1M2144 1467l9-1l9-1M2162 1471l8-3l9-2l9 0" stroke-width="3.0"/>
<path d="M1962 882l-8-4l-9-1M1970 864l2-9l4-8M1958 851l-9-2M1945 818l-7-6l-6-6l-6-7M1945 818l0-9l1-9l3-8M2045 835l12-3l12 0M2035 831l9 2M2047 786l8-5l8-3M2042 750l-9-9l-7-9l-7-10M2042 750l3-12l0-12l1-12M2018 812l9-1M2014 779l6-7l4-8M2015 755l-4-8l-3-9M2015 755l3-9M1996 771l-5-8M2019 722l0-9M2019 722l7-6M2044 732l10-6M2001 742l1-9M1980 690l7-10M2104 894l-6-7M2110 884l-1-9l2-9M2110 884l9-4l7-5l6-7M2029 835l-7 5M1979 827l-10 6l-11 6l-9 7M1979 827l-8-4l-9-2l-9 0M2121 850l8 3M2125 806l-2-9M2140 787l1-9l1-9l1-9M2140 787l7-6l6-6l5-8M2071 794l-9 1l-8 2M2098 771l8-3l9-3M2078 718l-5-7l-5-8M2078 718l3-11M2188 828l7 10M2153 785l8 2l8 5M2195 838l8 4M2195 838l6 6M2117 695l-2-12M2137 738l-7-4l-8-5M2203 706l11-4l10-7M2209 692l7 9l10 7l11 5M2105 676l-1-16M2058 813l-9-7M2084 837l-2-9M2117 771l3-12l6-10M2106 762l7-5l8-4M2101 737l8-3l9-2l9-2M1906 707l-6-17M1937 901l-11-3M1970 914l-5-7l-6-7M1914 860l-12-3l-11-4M1947 875l-9 2M1972 815l5-11l2-11M1930 781l-12-4l-12 0l-11 3M2045 673l-1-13M2037 816l-5-8l-4-8M2059 779l10-6l12-4M2044 736l-6-6l-8-5M1982 993l3-9M1944 971l4-8l5-7M1915 949l-12 0l-11 2l-12-1M1915 949l-1-8l-1-9l-3-9M1976 985l7-5M1966 936l6-7M1966 924l-6-7l-6-6M1966 924l3-8l5-7M1947 946l-5-7M1994 937l3-8l4-8M2040 926l8-5l7-5l9-3M2040 926l12 4l10 6l8 9M1887 926l-12-4M1920 893l2-9l1-9M1912 854l-7-5M1912 830l-1-9l-2-9l-1-9M1912 830l5-11l7-10l7-10M1858 922l-8 4M1845 910l-7-5M1804 915l-9 2l-9 1M1804 915l-8-5l-5-7M1860 807l-6-10M1892 861l5-7l5-8M1864 818l-8-4M1854 797l-7-6l-6-7M1854 797l-2-9l-2-9M1802 851l-11-4M1849 860l-8 3l-7 6M1825 855l-8 4M1888 803l9-8l9-8M1869 817l9-1M2023 1024l8 3M2041 990l9-3l7-5M2081 996l12-2l11-4l12-1M2081 996l11 6l11 4l9 7M1981 986l6-7M1977 965l7-10M1955 951l-9-2l-9-3M1935 921l-10-7l-10-7l-8-9M1935 921l-2-12l-4-11l-3-12M1909 1034l-5 7M1895 1049l2 9M1877 1057l-9 0l-9 1M1857 1071l-3 8l-2 9l-1 9M1857 1071l-8 4l-8 2M1865 999l-9-2M1854 1026l-9 0M1839 1045l1 9l-1 8M1839 1045l-8 4l-8 2M1857 954l-6-7M1869 947l-6-7l-6-6M1881 926l3-8l4-8M1881 926l7-5M1753 957l-12-3M1793 954l-6-7M1764 958l-8-4M1741 954l-9-2M1741 954l-7-6l-4-8M1737 888l-8-9l-7-10M1765 926l-9-1l-9-4l-8-3M1729 900l-12 0M1753 898l-2 9M1767 831l4-11M1724 772l6-10M1636 899l-12 5M1730 963l-11 5l-10 6M1716 930l-12 4M1716 914l-4-8M1766 764l-6-14M1837 837l-2-12M1812 829l-9 8l-5 10l-4 12M1791 805l-12-1M1986 1223l9-3M1985 1211l-5-7l-3-9M1985 1211l2-8l3-9l5-7M1958 1216l0-9M1919 1198l-8 1M1893 1174l-12-1l-12 1l-11 4M1893 1174l-5-11l-6-11l-2-12M1970 1210l10-6M1948 1220l4-8M1931 1187l-7-6M1931 1132l-9-8l-10-5l-10-8M1931 1132l-3-12l-1-12l-1-11M1879 1250l-8 4M1877 1276l-9 4l-7 6M1856 1294l-4 8l-6 7M1832 1299l-5 8l-5 7l-7 6M1869 1187l0-9M1855 1177l3-9M1832 1143l-6-7l-5-8l-6-6M1832 1143l-3-9l0-9M1862 1183l8-5l7-6M1851 1159l-6-7M1880 1142l4-8l2-9l1-9M1880 1142l9-2l8-5l6-6M1810 1187l2-8M1794 1175l1-8M1789 1152l-3-8l-6-7M1789 1152l2-9l5-7M1767 1219l-9 0M1762 1230l-4 8M1732 1227l-2 9M1732 1227l-7 7M1625 1166l-7-9M1554 1141l-14 9M1717 1211l-7 6l-8 4M1679 1189l-12-1l-12 0l-12-1M1655 1168l-12 2l-11 3M1642 1150l-7-9l-9-9M1612 1133l-4-11M1641 952l-11-12M1802 1178l-12-2M1838 1177l-2 9l-4 8M1790 1176l-6-6M1848 1081l4-12l1-11M1842 1140l5-7l5-8l2-9M1849 1062l3-12l0-12M1814 1123l-1-9l-1-9M1830 1105l9-1l9-3M1806 1053l5-10l5-11l1-12M1733 1064l-12-2l-12-2M1752 1028l2-12l1-12M1716 1035l-12-2l-12-1l-11-3M1690 1010l-9 1l-9 0M1630 940l-5-11M1682 1245l-22-1M1763 1203l-7-10l-6-10M1740 1228l-11-5l-12-1l-12 2M1825 1293l-15 7M1881 1245l-12 0l-12-3M1860 1280l0 12M1776 1088l-16 2M1897 1125l-12 1M1957 1119l-8-4l-8-4M1933 1122l-6 6M1899 1127l-10 6l-10 7M1920 1116l3 9M1888 1069l-9-8l-10-7M1864 1077l-4-11l-8-9M1840 1080l-5-11l-8-9l-7-10M1760 1090l-11 5l-12 2M1760 1090l-11 5l-10 6M1760 1090l-10-6l-10-7M2015 681l5-21M2163 671l7-15M2152 721l-4-11M1939 702l3-16M1949 783l9-8l7-9M1944 750l4-8M2130 680l4-14M2071 917l7-6M2031 881l-6-7l-5-7M2027 835l-6-7l-5-7l-5-8M2027 835l3-12l2-12l5-11M2103 900l8-4M2095 872l5-7M2103 850l0-9l3-9M2103 850l7-6l7-5l8-5M2141 907l6-7M2165 946l0 9M2197 939l6 7l5 8M2232 970l10 6l10 7l11 5M2237 981l2 12l0 12l4 11M2164 841l3-12M2175 827l-6-7M2197 788l-7-6M2205 766l-1-12l1-12l2-11M2205 766l9-8l7-10l6-10M2186 831l4-8M2175 800l-1-9l1-9M2175 800l7-5l8-5M2232 842l1-9M2263 847l9 0M2263 847l9 4M2297 807l12 3M2261 809l7-6l7-6M2309 810l8-1M2309 810l7 5M2334 845l10 6l8 9M2271 804l1 9l-1 9M2298 815l-2 12l2 12M2314 833l7-6M2271 730l-2-12M2278 694l-10-7l-11-6M2387 724l4 11l2 12M2082 969l-5-7l-5-8M2088 942l-5-8M2089 930l-6-7l-7-5l-8-5M2089 930l5-7l3-9l4-8M2115 936l-8-4M2115 924l-2-9l-4-8M2115 924l1-9l-1-9M2180 1003l8 3l9 1M2227 1029l9-2l9-3M2227 1029l9 3l9 2M2226 976l7 5M2223 906l-6-10l-8-9M2238 859l-5-11l-7-10l-9-8M2238 859l8-10l7-9l7-10M2241 1007l7 5M2233 1030l6 7l6 7M2206 1091l0 12l-1 12M2206 1091l-11 5l-11 4M2314 980l11-4M2269 980l-1-9M2325 976l8-5M2325 976l9-1l9 0M2329 1015l11 3M2298 1004l-1 9M2340 1018l9-1M2410 1026l11 6l10 7M2354 995l9-2l9 0M2428 935l8-10l8-8M2374 981l-2-9l-2-9M2416 946l-2-12l-4-11M2403 979l9-2M2466 1024l8 9l9 7M2447 993l8 5M2503 997l9 8M2538 971l11-5l11-4l11-4M2555 976l11-4M2118 1066l8-4M2098 1039l6-6M2094 1016l-3-9l-4-8l-6-7M2094 1016l2-9l4-8l5-8M2123 1026l0-12M2116 1001l8-5l8-4M2104 945l-9-8l-8-9l-9-9M2104 945l1-12l2-12l2-12M2151 1022l9-1M2165 989l0-9l0-9M2165 989l8-4l9-2M2207 1070l5 8M2261 1070l8-4l8-4M2277 1077l9-2M2299 1086l11 4l12 0l12 1M2299 1086l5 11l8 9l5 11M2241 1099l4 7l3 9l1 9M2241 1099l-2 8l-2 9M2267 1009l8-4l6-7M2287 1038l6 7M2319 1032l2-9M2331 1032l7-5l8-4l9-4M2331 1032l8 4l6 6l5 7M2283 991l7-5M2293 946l4-8l5-8M2293 946l9-3l8-3M2341 932l2-9l3-8M2341 932l6-7l7-6M2370 958l8-3M2377 928l2-9M2403 889l-2-12l-4-11M2403 889l7-6l8-4M2467 986l10 7M2408 958l9-1M2433 975l8-5M2477 993l9 3M2477 993l3 9M2431 879l4-11M2420 915l5-7l7-6M2508 957l11 3l12-1l12-2M2454 931l8-3l8-4M2475 943l4 8l6 6M2470 866l3-11l0-12M2470 890l6-7M2558 916l11-2l12-5M2510 910l7-5M2146 1209l6 10M2187 1181l0 9l1 9M2211 1177l2 8M2234 1180l9-3l8-2l9-2M2234 1180l11 5l11 6l12 2M2149 1184l-7 6M2180 1221l-4 8M2216 1264l5 8l6 6l7 6M2216 1264l3 9l3 8l4 8M2218 1161l9-1M2237 1215l9-2M2246 1224l11 5l9 8l6 10M2246 1224l3 8l6 7l7 5M2274 1135l8-4M2274 1170l-4 8l-2 9M2307 1179l7 6l4 8M2343 1185l9 1l8 2l8 5M2343 1185l10 6l9 8l7 10M2307 1088l1-9M2350 1071l-4-8M2356 1061l2-12l0-12l-3-11M2356 1061l9-7l8-10l10-7M2353 1091l9 0M2349 1062l-4-8M2378 1030l4-8l3-8l3-9M2378 1030l9-3l8-3M2390 1086l8-5M2378 1068l-7-6M2385 1021l-3-9M2385 1021l3-9M2448 1032l7-10M2422 1072l9 1l9-2M2455 1022l1-9M2455 1022l6-6M2473 1033l4-11l2-12M2447 1070l-6-6M2463 1055l-2-9M2535 1043l9-7M2486 1077l1-9l0-9M2546 1033l11-6l11-5M2520 1056l8-3M2579 1027l7-9l7-10M2596 1056l4-11M2619 1049l1-11l4-12M2676 1122l16 4M2497 1082l6-6M2517 1084l-3-8l-3-9M2560 1104l8 9l5 11l9 8M2592 1107l12-1M2172 1229l4-8M2198 1219l9 2M2210 1216l8-5l9-2M2210 1216l8 3l9 4l8 4M2190 1235l8-5M2222 1229l8 3M2234 1225l7-5l5-7l5-8M2234 1225l8-1l9 1l9 0M2198 1243l3-9M2209 1228l9 3l9 2M2228 1213l3-9l0-9M2228 1213l8-3l9-1M2223 1296l9 3M2223 1338l-6 6M2220 1362l5 7l3 9M2220 1362l-7 6l-7 5M2279 1263l7 5l5 8M2277 1220l5-8M2277 1203l-8-4M2276 1191l-3-8l-3-8l-1-9M2276 1191l8-9l6-10l7-10M2303 1236l0-9M2347 1208l-1-9M2357 1202l9-9l8-9l9-8M2357 1202l9 1l9 3l9 1M2356 1273l8 3M2371 1277l3-8M2424 1297l9-3l8-2l9-2M2424 1297l7 5l7 6l7 6M2368 1297l7 5M2369 1309l5 7l5 8l2 9M2369 1309l-2 8l0 9l-3 9M2414 1270l-1 9M2434 1268l9-1l9-1M2446 1285l4 8l2 9M2470 1312l8 2l8 5M2470 1312l3 8l0 9l0 9M2460 1266l2 9M2491 1295l4 8M2491 1295l0 9M2506 1158l6-10M2493 1210l7-5l7-7M2512 1148l-1-12M2512 1148l10-7M2525 1298l-7 10l-7 10M2524 1248l-6 6M2534 1263l-7 6M2321 1406l3 22M2298 1295l12 0l12-2M2284 1349l-4 11l-1 12M2308 1365l-6 11M2471 1383l12 8l13 2M2322 1325l7-6l5-7M2340 1357l-3 9M2495 1336l16-2l12-4M2317 1313l7 7l7 5M2359 1322l7 10l9 8M2391 1329l9 1M2418 1336l8-8M2487 770l-4-13M2401 867l2-12l0-12M2429 881l1-9l2-9M2460 860l0-12M2263 834l7-14M2225 1006l9-7M2205 1019l9 0M2247 977l11-4l11-5M2213 990l3-9M2202 946l-4-12M2217 928l-4-11l-2-12M2245 895l10-5l11-5M2270 820l2-12l1-12M2270 820l3-12l1-11M2270 820l11-6l11-4M2406 823l3-11l8-17M2289 970l-12-4l-12-2M2333 927l0-12l0-12l1-12l1-12M2360 900l-8-9l-9-8l-11-5M2620 940l10 13M2567 900l-1 12M1820 1355l-10-15M1924 1473l-1-12M1927 1521l-8-5l-6-6M1941 1481l6-7M1892 1443l-2-12l-4-11M1864 1445l-9 0l-8 2M1860 1418l-2-9l-4-8M1810 1340l-1-12l2-12M1743 1526l-16 3l-14 2M1902 1506l-3-11l0-12l-1-12M1856 1511l0 12M1829 1515l-8-3M1788 1451l-6 8l-11 12M1863 1447l-9 8M1984 1355l6-7M1962 1330l-8-5l-7-5M1962 1330l-2-9l-3-8M1938 1371l-9 1M1914 1334l-7-5M1914 1334l3-8M1928 1322l2-11l4-12M1917 1356l-8-5M1891 1322l1-12l3-11M1867 1308l-2-11l-5-11M1850 1280l-8-9M1850 1280l-2-12M1850 1280l1-12M2170 1280l7-14M2121 1363l1-9l-2-9M2150 1340l-1-12M2161 1469l15 13" stroke-width="4"/>
<path d="M1951 828l-6-10M1980 884l-9 0l-9-2M1968 873l2-9M2046 774l-2-12l-2-12M2034 838l11-3M2027 829l8 2M2015 767l0-12M2009 812l9 0M2015 746l3-12l1-12M2000 779l-4-8M2022 742l11-6l11-4M2000 751l1-9M1991 706l9-9M2104 894l6-10M2074 913l7 5M2003 825l-12 2l-12 0M2052 854l-9-2M2038 831l-9 4M2133 796l7-9M2104 843l8 4l9 3M2083 741l-3-11l-2-12M2089 795l-9-1l-9 0M2090 776l8-5M2172 811l7 9l9 8M2136 780l9 1l8 4M2127 717l-6-11l-4-11M2181 713l11-2l11-5M2200 684l9 8M2101 689l4-13M2074 831l-9-8l-7-10M2103 790l8-9l6-10M2098 766l8-4M1916 725l-10-18M1949 904l-12-3M1935 871l-10-5l-11-6M1964 825l8-10M1941 785l-11-4M2042 704l1-12l2-19M2048 830l-4-8l-7-6M2048 784l11-5M1925 957l-10-8M1980 1011l0-9l2-9M1966 936l0-12M1969 990l7-5M1964 971l-3-8M2016 928l12-1l12-1M1952 954l-5-8M1912 854l1-12l-1-12M1910 932l-11-5l-12-1M1916 901l4-8M1816 914l-12 1M1875 916l-8 3l-9 3M1852 916l-7-6M1864 818l-4-11M1881 876l6-7l5-8M1825 855l-11-3l-12-1M1869 817l10-6l9-8M1828 736l3-12M2057 994l12 1l12 1M2005 1021l9 1l9 2M2033 995l8-5M1949 940l-7-9l-7-10M1972 1001l4-7l5-8M1965 985l7-9l5-11M1867 1063l-10 8M1913 1026l-4 8M1894 1040l1 9M1845 1034l-6 11M1873 1002l-8-3M1875 936l6-10M1861 962l-4-8M1764 958l-11-1M1800 960l-7-6M1749 909l-6-11l-6-10M1753 898l-12 0l-12 2M1755 865l5-11l4-12l3-11M1650 890l-14 9M1758 940l-10 7l-8 9l-10 7M1740 927l-12 1l-12 2M1770 780l-4-16M1838 849l-1-12M1522 1106l-8-10M1986 1223l-1-12M1988 1259l-6-7M1911 1189l-9-7l-9-8M1959 1234l-1-9l0-9M1936 1143l-5-11M1948 1220l11-5l11-5M1939 1190l-8-3M1856 1294l-12 3l-12 2M1896 1244l-9 2l-8 4M1885 1274l-8 2M1835 1154l-3-11M1868 1196l1-9M1852 1186l3-9M1870 1149l10-7M1850 1196l6-6l6-7M1855 1167l-4-8M1791 1164l-2-12M1807 1196l3-9M1637 1187l-6-10l-6-11M1580 1120l-13 8l-13 13M1722 1203l-5 8M1703 1187l-12 3l-12-1M1667 1165l-12 3M1662 977l-11-14l-10-11M1814 1176l-12 2M1843 1104l1-12l4-11M1837 1096l5-12l3-11l4-11M1791 1072l7-9l8-10M1756 1070l-12-4l-11-2M1747 1051l4-11l1-12M1728 1034l-12 1M1716 1244l-16 6l-18-5M1771 1212l-8-9M1844 1288l-19 5M1893 1245l-12 0M1791 1085l-15 3M1933 1122l-12 2l-12 0l-12 1M1920 1116l-10 6l-11 5M1900 1090l-5-11l-7-10M1871 1087l-7-10M2010 700l5-19M2160 690l3-19M1936 720l3-18M2120 693l10-13M2441 718l17 4M2030 846l-3-11M2063 921l8-4M2045 891l-7-4l-7-6M2098 861l5-11M2086 907l8-4l9-3M2219 950l7 10l6 10M2134 912l7-5M2163 928l1 9l1 9M2232 970l5 11M2197 788l3-11l5-11M2159 864l2-11l3-12M2181 834l-6-7M2172 811l3-11M2177 847l4-9l5-7M2251 846l12 1M2228 850l4-8M2285 807l12 0M2314 833l10 7l10 5M2269 795l2 9M2275 741l-4-11M2296 709l-8-9l-10-6M2383 713l4 11M2614 971l13-3l15 0M2088 942l1-12M2088 997l6-7M2085 978l-3-9M2115 936l0-12M2112 975l-2-9M2216 1028l11 1M2172 998l8 5M2184 1012l-3 9M2233 882l2-12l3-11M2209 971l8 2l9 3M2228 917l-5-11M2224 1060l-5 11l-7 10l-6 10M2227 996l8 4l6 7M2226 1024l7 6M2303 984l11-4M2267 989l2-9M2318 1008l11 7M2299 995l-1 9M2388 1020l11 1l11 5M2346 999l8-4M2399 955l10-6l10-7l9-7M2410 969l4-11l2-12M2447 993l5 11l8 9l6 11M2486 981l8 9l9 7M2529 979l9-8M2654 871l16-1M2096 1027l-2-11M2102 1074l7-4l9-4M2106 968l-2-12l0-11M2127 1050l0-12l-4-12M2107 1004l9-3M2159 999l6-10M2154 1049l5-7M2277 1077l11 4l11 5M2203 1062l4 8M2253 1074l8-4M2240 1087l1 12M2231 1040l8-5M2235 1063l-6 7M2319 1032l12 0M2261 1016l6-7M2283 1030l4 8M2287 956l6-10M2275 995l8-4M2337 943l4-11M2316 972l9 3M2391 909l8-9l4-11M2352 960l9-2l9 0M2445 977l11 5l11 4M2400 962l8-4M2419 900l4-12l8-9M2416 923l4-8M2486 947l10 7l12 3M2470 890l-1-12l1-12M2522 912l12 3l12 1l12 0M2661 1043l15-5M2211 1177l11 3l12 0M2135 1188l7 10l4 11M2187 1172l0 9M2209 1242l5 10l2 12M2156 1179l-7 5M2186 1214l-6 7M2237 1215l9 9M2209 1163l9-2M2319 1181l12 1l12 3M2267 1141l7-6M2276 1161l-2 9M2350 1071l6-10M2305 1096l2-8M2364 1049l6-10l8-9M2344 1093l9-2M2353 1070l-4-8M2381 1044l3-11l1-12M2373 1091l9-3l8-2M2435 1053l6-11l7-10M2468 1044l5-11M2453 1077l-6-7M2506 1065l11-5l10-8l8-9M2520 1056l7-9l9-9l10-5M2556 1055l8-9l6-11l9-8M2650 1119l14 0l12 3M2475 1098l6-7l8-5l8-4M2517 1102l0-9l0-9M2724 1213l16-1M2198 1219l12-3M2134 1242l-1-9M2167 1236l5-7M2222 1229l12-4M2178 1248l6-7l6-6M2219 1221l9-8M2195 1251l3-8M2221 1350l-1 12M2216 1291l7 5M2277 1203l-1-12M2262 1258l9 1l8 4M2271 1227l6-7M2347 1208l10-6M2302 1245l1-9M2412 1299l12-2M2347 1271l9 2M2367 1285l4-8M2368 1297l1 12M2359 1268l-8 5M2461 1303l9 9M2414 1261l0 9M2426 1272l8-4M2483 1273l5 11l3 11M2456 1248l3 9l1 9M2495 1179l7-10l4-11M2485 1213l8-3M2532 1275l-4 11l-3 12M2528 1240l-4 8M2320 1390l1 16M2263 1298l11-4l12-1l12 2M2282 1325l2 12l0 12M2444 1377l14 3l13 3M2310 1338l6-7l6-6M2340 1348l0 9M2466 1335l14 1l15 0M2312 1306l5 7M2500 800l-6-15l-7-15M2408 902l-1-12l-4-11l-2-12M2432 898l-2-8l-1-9M2254 867l8-19l1-14M2215 1014l10-8M2213 990l12-3l12-3l10-7M2210 968l-5-10l-3-12M2220 940l-3-12M2392 854l8-14l6-17M2310 979l-10-6l-11-3M2333 939l0-12M2607 929l13 11M1828 1367l-8-12M1926 1497l0-12l-2-12M1927 1492l7-6l7-5M1893 1467l-1-12l0-12M1873 1444l-9 1M1786 1522l-17-1l-12 2l-14 3M1814 1444l-14-4l-12 11M1858 1295l-8-15M1966 1341l-4-11M1978 1362l6-7M1928 1354l-8-9l-6-11M1946 1369l-8 2M1919 1345l5-11l4-12M1889 1334l2-12M2160 1311l4-17l6-14M2121 1372l0-9M2135 1467l15-7l11 9" stroke-width="5.2"/>
<path d="M1973 671l-3-19M1958 851l-3-11l-4-12M1989 884l-9 0M2044 797l3-11l-1-12M2012 848l11-4l11-6M2014 779l1-12M2000 812l9 0M2010 757l5-11M2010 745l12-3M1985 716l6-10M2230 663l14-11M2095 902l9-8M2027 826l-12-2l-12 1M2059 859l-7-5M2119 816l6-10l8-10M2095 843l9 0M2092 764l-3-12l-6-11M2098 798l-9-3M2155 794l10 7l7 10M2137 738l-5-10l-5-11M2169 715l12-2M2100 720l-1-16l2-15M2094 843l-10-6l-10-6M2096 800l7-10M1929 753l-9-13l-4-15M1970 914l-11-4l-10-6M1970 880l-12-3l-11-2l-12-4M1956 834l8-9M2044 736l-4-16l2-16M1832 755l-4-19M1944 971l-9-7l-10-7M1978 1020l2-9M1968 960l1-12l-3-12M1961 995l8-5M1994 937l11-6l11-3M1954 963l-2-9M1914 877l1-12l-3-11M1921 936l-11-4M1840 915l-12 2l-12-3M1873 853l-2-12l-4-11l-3-12M1849 860l-12-4l-12-1M1853 834l7-9l9-8M1731 802l-3-14l-4-16M2033 995l12-2l12 1M1996 1022l9-1M1959 962l-4-11l-6-11M1966 1009l6-8M1885 1048l-8 9l-10 6M1854 1026l-9 8M1882 1004l-9-2M1869 947l6-11M1865 970l-4-8M1788 962l-12 0l-12-4M1765 926l-9-8l-7-9M1765 900l-12-2M1749 875l6-10M1683 906l-14-8l-19-8M1768 933l-10 7M1791 805l-11-12l-10-13M1540 1133l-7-15l-11-12M1985 1235l1-12M1929 1206l-10-8l-8-9M1959 1243l0-9M1941 1166l-1-12l-4-11M1937 1226l11-6M1876 1282l-9 7l-11 5M1905 1244l-9 0M1845 1176l-7-10l-3-12M1866 1205l2-9M1855 1167l8-9l7-9M1842 1201l8-5M1794 1175l-3-11M1767 1219l-5 11M1736 1216l-4 11M1641 1198l-4-11M1625 1143l-13-10l-16-3l-16-10M1728 1197l-6 6M1680 1000l-9-14l-9-9M1838 1177l-12-1l-12 0M1842 1140l-2-12l1-12l2-12M1814 1123l7-10l9-8l7-9M1784 1095l2-12l5-11M1767 1075l-11-5M1729 1232l-13 12M1870 1269l-10 11l-16 8M1825 1081l-16 5l-18-1M1957 1119l-12 2l-12 1M1942 1106l-12 3l-10 7M2000 729l4-16l6-13M2158 708l2-18M1944 750l-5-15l-3-15M2100 720l8-14l12-13M2411 716l19 3l11-1M2040 868l-5-11l-5-11M2056 926l7-5M2091 884l4-12l3-11M2197 939l12 4l10 7M2129 919l5-7M2188 811l5-11l4-12M2159 876l0-12M2173 823l-1-12M2239 848l12-2M2261 809l12-1l12-1M2290 806l8 9l7 10l9 8M2277 765l0-12l-2-12M2308 729l-4-11l-8-9M2587 975l13-1l14-3M2087 966l2-12l-1-12M2080 1001l8-4M2117 947l-2-11M2115 983l-3-8M2193 1019l11 6l12 3M2157 988l7 5l8 5M2228 917l4-11l1-12l0-12M2200 969l9 2M2227 1036l-1 12l-2 12M2221 989l6 7M2279 988l12-2l12-2M2309 1001l9 7M2355 1007l10 6l11 5l12 2M2374 981l9-8l7-10l9-8M2395 988l8-9l7-10M2440 984l7 9M2611 878l18-5l13 3l12-5M2102 1050l-4-11l-2-12M2107 1004l0-12l0-12l-1-12M2125 1062l2-12M2151 1022l5-11l3-12M2150 1057l4-8M2253 1074l12 1l12 2M2196 1056l7 6M2237 1075l3 12M2223 1043l8-3M2295 1032l12 1l12-1M2247 1027l8-5l6-6M2280 966l7-10M2267 999l8-4M2332 954l5-11M2377 928l8-8l6-11M2343 961l9-1M2411 966l12 3l10 6l12 2M2416 923l0-12l3-11M2454 931l10 6l11 6l11 4M2472 914l-1-12l-1-12M2500 904l10 6l12 2M2636 1045l12 0l13-2M2187 1172l12 3l12 2M2128 1178l7 10M2193 1224l8 8l8 10M2162 1172l-6 7M2224 1195l6 11l7 9M2296 1174l11 5l12 2M2259 1145l8-4M2335 1090l9-8l6-11M2302 1105l3-9M2357 1059l7-10M2378 1068l0-12l3-12M2422 1072l5-10l8-9M2458 1066l5-11l5-11M2486 1077l11-6l9-6M2507 1076l6-10l7-10M2549 1065l7-10M2604 1114l15 2l12-1l19 4M2699 1218l13-4l12-1M2178 1231l10-7l10-5M2135 1251l-1-9M2200 1239l11-5l11-5M2209 1228l10-7M2193 1260l2-9M2223 1326l0 12l-2 12M2271 1227l4-12l2-12M2253 1257l9 1M2327 1220l9-7l11-5M2389 1294l11 3l12 2M2368 1285l0 12M2365 1261l-6 7M2446 1285l9 8l6 10M2413 1252l1 9M2474 1264l9 9M2486 1201l4-11l5-11M2532 1251l2 12l-2 12M2308 1365l5 14l7 11M2400 1360l12 5l18 3l14 9M2404 1336l14 0l16-2l16 0l16 1M2485 822l7-10l8-12M2415 925l-3-12l-4-11M2245 895l5-15l4-13M2194 1025l11-6l10-5M2202 993l11-3M2366 889l9-15l10-10l7-10M2580 910l15 11l12 8M1850 1408l-7-17l-9-11l-6-13M1926 1533l1-12l1-12l-2-12M1914 1504l6-7l7-5M1845 1515l-16 0l-15 4l-14 1l-14 2M1863 1447l-16-3l-15-1l-18 1M1867 1308l-9-13M1973 1351l-7-10M1936 1363l-8-9M1914 1368l3-12l2-11M1888 1346l1-12M2150 1340l5-16l5-13M2112 1474l9-3l14-4" stroke-width="6.6"/>
<path d="M1980 690l-7-19M1978 880l-10-7l-6-10l-4-12M2027 829l6-11l6-10l5-11M2005 801l5-11l4-11M2000 779l6-11l4-11M1992 760l8-9l10-6M2200 684l15-10l15-11M2074 913l11-4l10-7M2054 848l-7-10l-9-7l-11-5M2104 834l8-9l7-9M2093 787l-3-11l2-12M2125 774l11 6l9 8l10 6M2140 750l-3-12M2098 752l3-15l-1-17M1941 785l-4-17l-8-15M1994 914l-12 0l-12 0M2048 784l-4-18l2-14l-2-16M1836 790l-2-18l-2-17M1967 998l-6-10l-8-9l-9-8M1963 983l1-12l4-11M1963 956l11-6l10-7l10-6M1915 913l1-12l-1-12l-1-12M1875 916l-12 0l-11 0l-12-1M1882 888l-1-12l-4-11l-4-12M1860 864l-11-4M1737 832l-1-18l-5-12M2003 1012l9-7l10-7l11-3M1966 997l-1-12l-2-12l-4-11M1903 1032l-9 8l-9 8M1872 1011l-8 8l-10 7M1865 970l0-12l4-11M1812 961l-12-1l-12 2M1784 940l-9-8l-10-6M1716 914l-16-4l-17-4M1824 840l-12-11l-12-9l-9-15M1562 1156l-8-10l-14-13M1988 1259l-2-12l-1-12M1951 1234l-5-11l-9-9l-8-8M1937 1202l2-12l0-12l2-12M1897 1253l-5 11l-7 10l-9 8M1859 1195l-7-9l-7-10M1845 1189l4-11l6-11M1800 1186l-6-11M1775 1210l-8 9M1644 1222l-1-12l-2-12M1667 1165l-15-9l-10-6l-17-7M1728 1034l-12-8l-14-11l-12-5l-10-10M1861 1185l-12-4l-11-4M1841 1164l2-12l-1-12M1808 1133l6-10M1754 1216l-14 12l-11 4M1893 1245l-9 13l-14 11M1871 1087l-18-5l-13-2l-15 1M1968 1114l-11 5M1992 760l3-16l5-15M2150 740l2-19l6-13M1950 800l-1-17l-4-15l-1-18M2366 710l17 3l14-1l14 4M2049 903l-4-12l-1-11l-4-12M2086 907l5-11l0-12M2163 928l11 5l12 3l11 3M2176 845l5-11l4-12l3-11M2177 847l-4-12l0-12M2216 849l12 1l11-2M2240 820l10-7l11-4M2257 795l12 0l11 4l10 7M2529 979l13-2l13-1l15 0l17-1M2081 989l4-11l2-12M2115 971l2-12l0-12M2173 1006l11 6l9 7M2215 951l6-11l3-11l4-12M2225 1000l1 12l0 12l1 12M2255 987l12 2l12-1M2290 987l9 8l10 6M2337 990l9 9l9 8M2364 988l10-7M2567 880l16-1l16 0l12-1M2102 1074l1-12l-1-12M2119 1038l-3-11l-6-11l-3-12M2149 1045l0-12l2-11M2218 1065l11 6l12 1l12 2M2230 1052l5 11l2 12M2271 1031l12-1l12 2M2269 987l5-11l6-10M2316 972l9-8l7-10M2343 961l8-9l11-6l9-8l6-10M2378 951l11 5l11 6l11 4M2417 935l-1-12M2444 924l10 7M2596 1056l9-2l14-5l17-4M2151 1171l12 0l12 0l12 1M2173 1194l5 11l8 9l7 10M2215 1174l3 11l6 10M2269 1152l7 9l9 8l11 5M2313 1099l11-3l11-6M2344 1093l5-11l4-12l4-11M2373 1091l4-11l1-12M2416 1095l3-11l3-12M2447 1087l6-10l5-11M2475 1081l11-4M2545 1100l15 4l17 4l15-1l12 7M2654 1219l12-2l17 0l16 1M2156 1240l11-4l11-5M2178 1248l12-3l10-6M2199 1250l4-11l6-11M2218 1303l4 11l1 12M2260 1248l5-11l6-10M2311 1238l8-9l8-9M2357 1278l10 7l11 3l11 6M2368 1273l0 12M2419 1263l7 9l10 7l10 6M2456 1248l9 9l9 7M2478 1236l5-11l2-12l1-12M2522 1229l6 11l4 11M2296 1336l4 16l8 13M2354 1351l17 3l14 3l15 3M2344 1318l15 4l13 4l19 3l13 7M2460 860l8-11l6-12l11-15M2220 940l6-14l7-14l12-17M2333 939l10-15l10-11l7-13l6-11M2540 886l16 10l11 4l13 10M1867 1429l-7-11l-10-10M1902 1506l-16 1l-16 3l-14 1l-11 4M1880 1450l-17-3M1879 1334l-7-16l-5-10M1983 1373l-5-11l-5-11M1956 1376l-10-7l-10-6M2121 1372l9-11l12-13l8-8M2096 1480l16-6" stroke-width="8.4"/>
<path d="M1985 716l-4-13l-1-13M2010 896l-10-6l-11-6l-11-4M2003 855l9-7l7-10l8-9M1996 823l4-11l5-11M1996 790l4-11M2169 715l11-9l9-11l11-11M2050 917l12-1l12-3M2074 878l-9-9l-6-10l-5-11M2086 850l9-7l9-9M2100 810l-2-12l-5-11M2096 800l-1-18l3-16l0-14M1956 834l-4-17l-2-17l-9-15M2043 849l5-19l-2-12l4-18l-2-16M1846 820l-5-17l-5-13M1983 1030l-5-10l-7-10l-4-12M1960 1007l1-12l2-12M1940 982l6-10l8-9l9-7M1920 960l2-12l-1-12l-4-11l-2-12M1898 923l-11-5l-12-2M1885 899l-3-11M1749 875l-5-15l-4-15l-3-13M1989 1045l3-12l4-11l7-10M1963 1032l1-11l2-12l0-12M1936 1018l-11 4l-12 4l-10 6M1893 999l-11 5l-10 7M1868 982l-3-12M1824 960l-12 1M1755 930l-15-3l-12-6l-12-7M1860 864l-13-7l-9-8l-14-9M1595 1186l-15-6l-8-12l-10-12M1994 1282l-3-12l-3-11M1972 1263l-8-10l-5-10l-8-9M1935 1238l2-12l1-12l-1-12M1914 1222l-3 12l-6 10l-8 9M1872 1216l-6-11l-7-10M1841 1213l1-12l3-12M1814 1205l-7-9l-7-10M1784 1202l-9 8M1742 1206l-6 10M1728 1197l-15-6l-10-4l-11-9l-13-8l-12-5M1767 1075l-12-14l-8-10l-7-11l-12-6M1784 1202l-13 10l-17 4M1914 1222l-10 14l-11 9M1913 1095l-13-5l-15-2l-14-1M2325 718l13-12l16 3l12 1M2055 938l1-12l-3-12l-4-11M2078 929l6-11l2-11M2118 913l11 6l11 3l12 2l11 4M2155 887l4-11l6-10l5-11l6-10M2178 871l0-12l-1-12M2204 849l12 0M2454 982l18 2l14-3l14-1l16 0l13-1M2079 1013l1-12l1-12M2117 995l-2-12l0-12M2147 981l10 7l8 10l8 8M2190 976l10-7l9-8l6-10M2218 977l3 12l4 11M2243 984l12 3M2512 899l12-8l16-5l15 0l12-6M2101 1098l2-12l-1-12M2125 1085l1-11l-1-12l-3-12l-3-12M2151 1069l-1-12l-1-12M2186 1050l10 6l11 5l11 4M2213 1035l10 8l7 9M2235 1025l12 2l12 3l12 1M2262 1010l5-11l2-12M2300 990l9-8l7-10M2338 972l5-11M2534 1072l15-7l17 0l14-5l16-4M2116 1178l12 0l12-4l11-3M2156 1162l6 10l6 11l5 11M2196 1143l7 10l6 10l6 11M2240 1130l10 7l9 8l10 7M2285 1122l8-10l9-7l11-6M2329 1111l8-9l7-9M2373 1103l0-12M2475 1098l15 1l14-3l13 6l15-2l13 0M2595 1225l13-6l16 0l12 1l18-1M2123 1255l12-4l10-7l11-4M2157 1259l11-5l10-6M2186 1270l7-10l6-10M2212 1267l2 12l2 12l2 12M2244 1265l9-8l7-9M2284 1262l8-10l10-7l9-7M2330 1254l8 9l9 8l10 7M2359 1250l6 11l3 12M2404 1244l9 8l6 11M2447 1241l9 7M2263 1298l12 12l7 15l14 11l14 2l18 4l12 6l14 3M2284 1298l13 3l15 5l15 5l17 7M2422 912l10-14l8-12l12-14l8-12M2206 982l4-14l5-15l5-13M2300 990l10-11l7-17l9-12l7-11M1898 1477l-5-10l-8-10l-12-13l-6-15M1914 1504l-12 2M1888 1346l-9-12M1985 1385l-2-12M2090 1400l8-9l11-12l12-7" stroke-width="11.0"/>
<path d="M1990 747l-4-17l-1-14M2140 750l10-10l9-10l10-15M2093 858l1-15l-1-12l2-15l1-16M1978 894l-8-14l-4-18l-4-15l-6-13M2040 880l2-18l1-13M1860 864l-4-15l-3-15l-7-14M1777 925l-8-10l-4-15l-6-13l-10-12M1784 940l-16-7l-13-3M1630 1213l-12-6l-12-12l-11-9M1752 1212l-13-7l-11-8M1822 1141l-14-8l-8-13l-7-13l-9-12l-8-7l-9-13M1986 1123l-18-9l-10-3l-16-5l-16-6l-13-5M2277 765l10-12l9-13l12-11l17-11M2350 990l14-2l17 1l14-1l16-2l16-3l13 1l14-2M2444 924l12-5l16-5l13-8l15-2l12-5M2463 1085l12-4l16 0l16-5l16-4l11 0M2432 1092l14 3l16-2l13 5M2536 1228l15 0l17 0l12-4l15 1M2240 1276l11 14l12 8M2404 940l11-15l7-13M2186 1050l6-12l2-13l4-14l4-18l4-11M1937 1545l-11-12l-7-15l-5-14l-5-14l-11-13M1930 1371l-16-3l-15-10l-11-12" stroke-width="14"/>
<path d="M1995 809l1-19l0-12l-4-18l-2-13M2108 800l6-15l11-11l8-8l7-16M2090 890l2-17l1-15M2010 940l-8-11l-8-15l-7-9l-9-11M1888 911l-3-12l-8-9l-9-15l-8-11M1841 969l-17-9l-11-5l-17-9l-12-6l-7-15M1700 1215l-13-1l-14 6l-16 2l-13 0l-14-9M1880 1206l-8-12l-11-9l-11-12l-9-9l-13-12l-6-11M2012 1132l-12-6l-14-3M2204 849l11-10l13-11l12-8l8-13l9-12l9-17l11-13M2218 977l13 6l12 1l17 0l17 0l13 3l15-1l15 4l17 0l13 0M2338 972l14-7l13-7l13-7l13-2l13-9l13-5l12-6l15-5M2356 1107l17-4l14-4l16-2l13-2l16-3l15-5l16-2M2435 1243l12-2l15-4l16-1l13-2l16-4l15-1l14-1M1970 1616l-8-15l-6-12l-8-17l-5-14l-6-13M1972 1381l-16-5l-15-4l-11-1" stroke-width="18"/>
<path d="M2002 868l1-13l-3-15l-4-17l-1-14M2074 878l6-14l6-14l4-14l7-11l3-15l8-10M1920 960l-7-12l-8-10l-7-15l-10-12M1936 1018l-17-6l-10-8l-16-5l-13-9l-12-8l-15-4l-12-9M1784 1202l-12 3l-17 3l-13-2l-15 6l-15-2l-12 5M2118 913l14-5l14-8l9-13l11-10l12-6l13-13l13-9M2079 1013l11-6l18-7l9-5l17-10l13-4l13-7l13 2l17 0l12 0l16 1M2225 1032l10-7l13-10l14-5l15-7l10-7l13-6l13-4l15-10l10-4M2240 1130l14-5l16-1l15-2l16-2l12-4l16-5l16 1l11-5M2330 1254l14-1l15-3l17 1l11-2l17-5l14-3l17 2M2012 1390l-12-4l-15-1l-13-4" stroke-width="24"/>
<path d="M2012 924l-2-14l0-14l-4-14l-4-14M2028 956l8-14l8-14l6-11l10-14l6-11l8-14M1970 1018l-10-11l-8-15l-12-10l-10-10l-10-12M2004 1052l-15-7l-12-5l-14-8l-12-6l-15-8M1884 1218l-12-2l-14-4l-17 1l-14-5l-13-3l-14 0l-16-3M2040 944l15-6l10-6l13-3l13-8l17-3l10-5M2052 1028l13-7l14-8M2101 1098l11-7l13-6l11-8l15-8l11-6l10-7l14-6l11-9l16-6l12-3M2116 1178l14-9l12-2l14-5l16-4l13-9l11-6l14-4l17-1l13-8M2201 1267l11 0l16 0l16-2l11 0l17 0l12-3l16-2l15-4l15-2" stroke-width="30"/>
<path d="M1992 1040l-9-10l-13-12M1994 1282l-9-8l-13-11l-11-5l-11-11l-15-9l-7-7l-14-9l-12-1l-18-3M2062 1120l12-8l15-4l12-10M2072 1192l14-3l12-6l18-5M2080 1240l13 3l16 3l14 9l18 4l16 0l12 5l17 6l15-3" stroke-width="38"/>
<path d="M2006 1290l-12-8" stroke-width="48"/>
</g>
</g>
</svg>

<!-- top-right filler strip above properties panel -->
<div class="abs" style="left:2006px;top:0;width:36px;height:46px;background:#2b2b2b"></div>
<!-- bottom status bar -->
<div class="abs" style="left:0;top:1314px;width:2043px;height:28px;background:#2a2a2a"></div>
<div class="abs" style="left:0;top:1314px;width:367px;height:28px;background:#323232"></div>
<div class="abs" style="left:74px;top:1315px;color:#b4b4b4;font-size:23.6px;line-height:30px;white-space:nowrap">文档:53.4M/53.0M</div>
<svg class="abs" style="left:344px;top:1318px" width="16" height="24" viewBox="0 0 16 24"><path d="M5 3l6 10-6 10" fill="none" stroke="#c8c8c8" stroke-width="1.8"/></svg>
<div class="abs" style="left:908px;top:1320px;width:668px;height:19px;border-radius:10px;background:#454545"></div>

<!-- properties panel -->
<div class="abs" style="left:1411px;top:46px;width:630px;height:1284px;background:#323232;box-shadow:0 0 12px 3px rgba(0,0,0,.75)"></div>
<div class="abs" style="left:1411px;top:46px;width:630px;height:57px;background:#282828"></div>
<div class="abs" style="left:1494px;top:48px;width:80px;height:55px;background:#323232"></div>
<div class="abs t22" style="left:1430px;top:58px;color:#a2a2a2;line-height:34px">信息</div>
<div class="abs t22" style="left:1512px;top:58px;color:#ececec;line-height:34px;font-weight:700">属性</div>
<div class="abs" style="left:1411px;top:170px;width:630px;height:2px;background:#2a2a2a"></div>
<div class="abs" style="left:2010px;top:172px;width:31px;height:1092px;background:#2d2d2d"></div>
<div class="abs t22" style="left:1537px;top:124px;color:#ababab;line-height:34px">阈值</div>
<!-- histogram -->
<div class="abs" style="left:1455px;top:208px;width:512px;height:204px;background:#474747"></div>
<div class="abs t22" style="left:1428px;top:453px;color:#b2b2b2;line-height:34px;white-space:nowrap">阈值色阶:</div>
<div class="abs" style="left:1534px;top:453px;width:64px;height:32px;background:#2a2a2a;border:1px solid #4b4b4b"></div>
<div class="abs t22" style="left:1542px;top:453px;color:#e4e4e4;line-height:35px">128</div>
<!-- bottom toolbar -->
<div class="abs" style="left:1411px;top:1264px;width:630px;height:2px;background:#2a2a2a"></div>
<div class="abs" style="left:1884px;top:1265px;width:58px;height:49px;background:#424242"></div>
<div class="abs" style="left:1411px;top:1314px;width:630px;height:16px;background:#2c2c2c;border-top:2px solid #262626;box-sizing:border-box"></div>
<svg class="abs" style="left:0;top:0;pointer-events:none" width="2672" height="1342" viewBox="0 0 2672 1342">
 <!-- tab bar icons -->
 <g fill="none" stroke="#a8a8a8" stroke-width="2.2"><path d="M1960 68l7 7-7 7M1970 68l7 7-7 7"/><path d="M1993 64v22" stroke="#8a8a8a"/></g>
 <g fill="#a8a8a8"><rect x="2008" y="68" width="20" height="2"/><rect x="2008" y="72" width="20" height="2"/><rect x="2008" y="76" width="20" height="2"/><rect x="2008" y="80" width="20" height="2"/></g>
 <!-- threshold icon in dark box -->
 <rect x="1434" y="115" width="44" height="45" rx="5" fill="#1f1f1f" stroke="#3a3a3a"/>
 <rect x="1440" y="124" width="31" height="26" fill="#dedede"/>
 <path d="M1443 144v-8h5v-4h6v-3h7v-3h8v5h-4v4h-6v3h-7v3h-5v3z" fill="#1f1f1f"/>
 <path d="M1457 150v-3h6v-3h6v6z" fill="#1f1f1f"/>
 <!-- mask icon -->
 <rect x="1487" y="126" width="33" height="26" rx="3" fill="#dedede"/>
 <circle cx="1503.500" cy="139" r="8" fill="#333"/>
 <!-- histogram -->
 <path d="M1556 412V381h2V378h2V381h2V384h2V384h2V385h2V386h2V386h2V386h2V385h2V385h2V383h2V382h2V381h2V380h2V379h2V378h2V376h2V374h2V373h2V373h2V372h2V372h2V372h2V371h2V371h2V370h2V370h2V370h2V369h2V369h2V368h2V367h2V366h2V365h2V364h2V363h2V358h2V352h2V348h2V342h2V335h2V328h2V321h2V322h2V318h2V306h2V302h2V305h2V306h2V306h2V294h2V283h2V286h2V279h2V281h2V292h2V293h2V288h2V298h2V301h2V294h2V305h2V309h2V301h2V298h2V300h2V303h2V305h2V308h2V306h2V313h2V306h2V306h2V309h2V319h2V323h2V318h2V307h2V310h2V314h2V318h2V320h2V319h2V323h2V318h2V318h2V315h2V303h2V308h2V309h2V307h2V318h2V325h2V318h2V330h2V330h2V322h2V324h2V328h2V323h2V336h2V334h2V337h2V332h2V308h2V306h2V296h2V282h2V269h2V256h2V242h2V226h2V208h2V250h2V270h2V251h2V295h2V378h2V392h2V395h2V398h2V399h2V400h2V401h2V400h2V398h2V395h2V390h2V368h2V355h2V411h2V412z" fill="#dedede"/>
 <!-- slider -->
 <path d="M1711 415.500l9 10v6.500q0 2.500-2.500 2.500h-13q-2.500 0-2.500-2.500v-6.500z" fill="#e2e2e2" stroke="#1e1e1e" stroke-width="1.500"/>
 <!-- auto icon -->
 <path d="M1624 476v-19h2v6h2v-3h2v3h2v-6h2.500v5h2v-3h2v4h2.500v-5h2v6l-6 12z" fill="#dcdcdc"/>
 <path d="M1655 459l12.500 23h-25z" fill="#dcdcdc" stroke="#323232" stroke-width="1.500"/>
 <rect x="1654" y="466" width="2.400" height="9" fill="#323232"/><rect x="1654" y="477" width="2.400" height="2.500" fill="#323232"/>
 <!-- bottom icons -->
 <g fill="#d6d6d6">
  <rect x="1735" y="1279" width="20" height="20"/>
  <path d="M1720 1287l6 0-2 2 10 10-2 2-10-10-2 2zM1726 1286v-1.500h8v2.200h-5.800v5.800h-2.200z" />
 </g>
 <g fill="#8c8c8c">
  <path d="M1779 1288q12-14 24 0q-12 14-24 0z"/><circle cx="1791" cy="1288" r="5" fill="#323232"/><circle cx="1791" cy="1288" r="3.500"/>
  <path d="M1806 1280q9 8 0 17" fill="none" stroke="#8c8c8c" stroke-width="3"/><path d="M1800 1295l9 0-5 7z"/>
  <path d="M1850 1293a9 9 0 1 1 14 1" fill="none" stroke="#8c8c8c" stroke-width="3"/><path d="M1841 1289l12 0-6 8z"/><rect x="1843" y="1299" width="24" height="2"/>
 </g>
 <g fill="#e4e4e4">
  <path d="M1901 1288q12-14 24 0q-12 14-24 0z"/><circle cx="1913" cy="1287.500" r="4.200" fill="#424242"/><circle cx="1914.500" cy="1286" r="1.200"/>
 </g>
 <g fill="none" stroke="#d6d6d6" stroke-width="2">
  <path d="M1960 1283h22M1967 1283v-4h8v4M1962.500 1283v17h17v-17M1967.500 1287v10M1971 1287v10M1974.500 1287v10"/>
 </g>
 <g stroke="#232323" stroke-width="1.500"><path d="M1707 1319v8M1711 1319v8M1715 1319v8M1719 1319v8M1723 1319v8M1727 1319v8M1731 1319v8M1735 1319v8M1739 1319v8M1743 1319v8"/></g>
</svg>

<div class="abs" style="left:2041px;top:0;width:83px;height:1342px;background:#262626"></div>
<div class="abs" style="left:2044px;top:0;width:75px;height:1342px;background:#323232"></div>
<svg class="abs" style="left:0;top:0" width="2672" height="1342" viewBox="0 0 2672 1342">
 <g fill="#262626">
  <rect x="2044" y="51" width="75" height="3"/><rect x="2044" y="133" width="75" height="3"/><rect x="2044" y="271" width="75" height="3"/><rect x="2044" y="466" width="75" height="3"/><rect x="2044" y="603" width="75" height="3"/><rect x="2044" y="685" width="75" height="3"/><rect x="2044" y="767" width="75" height="3"/>
 </g>
 <g id="grip" stroke="#262626" stroke-width="2">
  <path d="M2063 60v8M2067 60v8M2071 60v8M2075 60v8M2079 60v8M2083 60v8M2087 60v8M2091 60v8M2095 60v8M2099 60v8M2103 60v8"/>
  <path d="M2063 142v8M2067 142v8M2071 142v8M2075 142v8M2079 142v8M2083 142v8M2087 142v8M2091 142v8M2095 142v8M2099 142v8M2103 142v8"/>
  <path d="M2063 280v8M2067 280v8M2071 280v8M2075 280v8M2079 280v8M2083 280v8M2087 280v8M2091 280v8M2095 280v8M2099 280v8M2103 280v8"/>
  <path d="M2063 474v8M2067 474v8M2071 474v8M2075 474v8M2079 474v8M2083 474v8M2087 474v8M2091 474v8M2095 474v8M2099 474v8M2103 474v8"/>
  <path d="M2063 612v8M2067 612v8M2071 612v8M2075 612v8M2079 612v8M2083 612v8M2087 612v8M2091 612v8M2095 612v8M2099 612v8M2103 612v8"/>
  <path d="M2063 694v8M2067 694v8M2071 694v8M2075 694v8M2079 694v8M2083 694v8M2087 694v8M2091 694v8M2095 694v8M2099 694v8M2103 694v8"/>
 </g>
 <g fill="#d8d8d8">
  <!-- brush settings -->
  <path d="M2061 8q9-6 17-2q3 5-2 9q-8 1-15-7z"/><rect x="2082" y="8.500" width="21" height="4" rx="2"/>
  <rect x="2066" y="25" width="20" height="4" rx="2"/><path d="M2088 27l11-10q6 9 0 20z"/>
  <!-- stamp -->
  <rect x="2064" y="85" width="4" height="4"/><rect x="2070" y="86" width="9" height="2"/>
  <rect x="2064" y="91" width="4" height="4"/><rect x="2070" y="92" width="9" height="2"/>
  <rect x="2064" y="97" width="4" height="4"/><rect x="2070" y="98" width="9" height="2"/>
  <circle cx="2088.500" cy="93" r="6.500"/><path d="M2086 97h5l1 9h9v7h-25v-7h9z"/><rect x="2076" y="115" width="25" height="2"/>
  <!-- 3d -->
 </g>
 <circle cx="2083" cy="183.500" r="15" fill="none" stroke="#d8d8d8" stroke-width="2.600"/>
 <rect x="2081.600" y="181" width="3" height="12" fill="#d8d8d8"/><circle cx="2083" cy="176" r="2" fill="#d8d8d8"/>
 <rect x="2054" y="216" width="54" height="44" rx="5" fill="#1f1f1f" stroke="#3a3a3a"/>
 <path d="M2077 222l8 4v9l-8 5-8-5v-9z" fill="#777" stroke="#d8d8d8" stroke-width="1.500"/><path d="M2069 226l8 4 8-4M2077 230v10" fill="none" stroke="#d8d8d8" stroke-width="1.500"/>
 <rect x="2090" y="222" width="8" height="7" fill="#d8d8d8"/><rect x="2090" y="232" width="8" height="7" fill="#d8d8d8"/>
 <rect x="2068" y="246" width="30" height="8" fill="#d8d8d8"/><path d="M2090 248h6l-3 4z" fill="#1f1f1f"/>
 <!-- text icons -->
 <text x="2067" y="333" font-family="Liberation Sans, sans-serif" font-size="37" fill="#d8d8d8">A</text>
 <rect x="2095.500" y="304" width="1.800" height="34" fill="#d8d8d8"/>
 <text x="2066" y="391" font-family="Liberation Serif, serif" font-style="italic" font-weight="bold" font-size="44" fill="#d8d8d8">A</text>
 <text x="2069" y="444" font-family="Liberation Sans, sans-serif" font-size="40" fill="#d8d8d8">¶</text>
 <!-- share / libraries -->
 <g fill="none" stroke="#bdbdbd" stroke-width="3"><circle cx="2079" cy="515" r="11"/><path d="M2079 515l16-16M2079 515l16 16"/></g>
 <circle cx="2079" cy="515" r="5" fill="#bdbdbd"/><circle cx="2096" cy="498.500" r="5.500" fill="#d8d8d8"/><circle cx="2096" cy="531.500" r="5.500" fill="#d8d8d8"/>
 <!-- CC -->
 <g fill="none" stroke="#b4b4b4" stroke-width="3.500"><path d="M2074 585q-11-1-11-11q1-10 11-11q6-9 16-7q12 2 13 14q0 14-14 15z"/><path d="M2071 578q-5-8 3-12q7-2 12 4l8 9"/></g>
 <path d="M2074 583q-9-1-9-9q1-8 9-9q6-8 15-6q10 2 11 12q0 12-12 13z" fill="#8a8a8a" opacity=".55"/>
 <!-- crop -->
 <g fill="none" stroke="#d8d8d8" stroke-width="3.500"><path d="M2072 634v29h30M2064 642h29v30"/></g>
 <text x="2076.500" y="659.500" font-family="Liberation Sans, sans-serif" font-size="12" font-weight="bold" fill="#d8d8d8">C</text>
 <!-- clover -->
 <g fill="#d8d8d8"><path d="M2080 731h-9a9 9 0 1 1 9-9zM2080 737h-9a9 9 0 1 0 9 9zM2086 737h9a9 9 0 1 1-9 9z"/></g>
 <path d="M2087.500 729.500h7.500a7.500 7.500 0 1 0-7.500-7.500z" fill="none" stroke="#d8d8d8" stroke-width="3"/>
</svg>

<div class="abs" style="left:2124px;top:0;width:548px;height:1342px;background:#2f2f2f"></div>
<div class="abs" style="left:2126px;top:-34px;width:60px;height:60px;background:#353535"></div>
<div class="abs" style="left:2190px;top:-34px;width:60px;height:60px;background:#353535"></div>
<div class="abs" style="left:2254px;top:-34px;width:60px;height:60px;background:#353535"></div>
<div class="abs" style="left:2318px;top:-34px;width:60px;height:60px;background:#353535"></div>
<div class="abs" style="left:2382px;top:-34px;width:60px;height:60px;background:#353535"></div>
<div class="abs" style="left:2446px;top:-34px;width:60px;height:60px;background:#353535"></div>
<div class="abs" style="left:2510px;top:-34px;width:60px;height:60px;background:#353535"></div>
<div class="abs" style="left:2574px;top:-34px;width:60px;height:60px;background:#353535"></div>
<div class="abs" style="left:2126px;top:30px;width:60px;height:60px;background:#353535"></div>
<div class="abs" style="left:2190px;top:30px;width:60px;height:60px;background:#353535"></div>
<div class="abs" style="left:2254px;top:30px;width:60px;height:60px;background:#353535"></div>
<div class="abs" style="left:2318px;top:30px;width:60px;height:60px;background:#353535"></div>
<div class="abs" style="left:2382px;top:30px;width:60px;height:60px;background:#353535"></div>
<div class="abs" style="left:2446px;top:30px;width:60px;height:60px;background:#353535"></div>
<div class="abs" style="left:2510px;top:30px;width:60px;height:60px;background:#353535"></div>
<div class="abs" style="left:2574px;top:30px;width:60px;height:60px;background:#353535"></div>
<div class="abs" style="left:2126px;top:94px;width:60px;height:60px;background:#353535"></div>
<div class="abs" style="left:2190px;top:94px;width:60px;height:60px;background:#353535"></div>
<div class="abs" style="left:2254px;top:94px;width:60px;height:60px;background:#353535"></div>
<div class="abs" style="left:2318px;top:94px;width:60px;height:60px;background:#353535"></div>
<div class="abs" style="left:2141px;top:-19px;width:30px;height:30px;background:linear-gradient(#fff 0,#b01010 60%,#300 100%);box-shadow:0 2px 2px rgba(0,0,0,.5)"></div>
<div class="abs" style="left:2205px;top:-19px;width:30px;height:30px;background:#6a6a6a;box-shadow:0 2px 2px rgba(0,0,0,.5)"></div>
<div class="abs" style="left:2269px;top:-19px;width:30px;height:30px;background:#3b3b3b;box-shadow:0 2px 2px rgba(0,0,0,.5)"></div>
<div class="abs" style="left:2333px;top:-19px;width:30px;height:30px;background:#676767;box-shadow:0 2px 2px rgba(0,0,0,.5)"></div>
<div class="abs" style="left:2397px;top:-19px;width:30px;height:30px;background:radial-gradient(circle at 50% 30%,#ff7a20 0,#f03010 35%,#1020c0 60%);box-shadow:0 2px 2px rgba(0,0,0,.5)"></div>
<div class="abs" style="left:2455px;top:-25px;width:32px;height:32px;background:#666;border:3px double #e8e8b8;border-radius:6px;box-shadow:0 0 0 2px #e8e8b8 inset"></div>
<div class="abs" style="left:2455px;top:-24px;width:38px;height:38px;border:2px solid #ecebc0;border-radius:7px"></div>
<div class="abs" style="left:2459px;top:-20px;width:30px;height:30px;border:2px solid #ecebc0;border-radius:4px;background:#646464"></div>
<div class="abs" style="left:2525px;top:-19px;width:30px;height:30px;background:radial-gradient(circle,#333 0,#000 30%,#2a2a2a 45%,#000 60%);box-shadow:0 2px 2px rgba(0,0,0,.5)"></div>
<div class="abs" style="left:2589px;top:-19px;width:30px;height:30px;background:linear-gradient(#1b6fd0,#5aa0e0);box-shadow:0 2px 2px rgba(0,0,0,.5)"></div>
<div class="abs" style="left:2141px;top:45px;width:30px;height:30px;background:#a9a9a9"></div>
<div class="abs" style="left:2205px;top:45px;width:30px;height:30px;background:linear-gradient(#555 0,#999 20%,#777 30%,#5a5a5a 40%,#6d6d6d 70%,#b0b0b0 82%,#555 100%)"></div>
<div class="abs" style="left:2269px;top:45px;width:30px;height:30px;background:#6b5e3e"></div>
<div class="abs" style="left:2333px;top:45px;width:30px;height:30px;background:linear-gradient(#4a3608,#8a7a50 60%,#a89a78)"></div>
<div class="abs" style="left:2397px;top:45px;width:30px;height:30px;background:linear-gradient(#b070e0 0,#9060e0 8%,#1818a0 12%,#1818a0 28%,#e03030 32%,#e04040 52%,#b08070 56%,#e03030 62%,#e03030 76%,#1818a0 80%,#1818a0 100%)"></div>
<div class="abs" style="left:2461px;top:45px;width:30px;height:30px;background:conic-gradient(from 40deg at 55% 55%,#201060,#f0e080,#c03020,#3040c0,#f0d090,#101010,#e06030,#4060d0,#201060)"></div>
<div class="abs" style="left:2525px;top:45px;width:30px;height:30px;background:radial-gradient(circle at 45% 55%,#b0a020 0,#c8b020 25%,#f0d020 45%,#f09010 70%,#d06010 100%)"></div>
<div class="abs" style="left:2589px;top:45px;width:30px;height:30px;background:linear-gradient(165deg,#e0a040 0,#c0b050 15%,#40a060 40%,#3090c0 60%,#3060c0 80%,#6050a0 100%)"></div>
<div class="abs" style="left:2141px;top:109px;width:30px;height:30px;background:linear-gradient(#4a8ad0 0,#80b0e0 40%,#e8f0ff 85%,#fff 92%,#b0a0e0 100%)"></div>
<div class="abs" style="left:2205px;top:109px;width:30px;height:30px;background:linear-gradient(#1858c0 0,#60a0e0 20%,#fff 50%,#f0f0e0 56%,#201000 62%,#d09020 72%,#e0b050 100%)"></div>
<div class="abs" style="left:2269px;top:109px;width:30px;height:30px;background:#c8c8c8"></div>
<div class="abs" style="left:2333px;top:109px;width:30px;height:30px;background:linear-gradient(#f0a0a0 0,#d07080 12%,#7060c0 30%,#5070c0 50%,#8060b0 60%,#d07080 75%,#e09090 90%,#200 100%)"></div>
<div class="abs" style="left:2269px;top:109px;width:30px;height:30px;background:repeating-conic-gradient(#fff 0 9deg,#777 9deg 17deg,#eee 17deg 31deg,#666 31deg 36deg);opacity:.75"></div>
<div class="abs" style="left:2124px;top:208px;width:548px;height:50px;background:#323232;border-top:2px solid #2a2a2a;box-sizing:border-box"></div>
<div class="abs" style="left:2124px;top:258px;width:548px;height:6px;background:#262626"></div>
<div class="abs" style="left:2124px;top:264px;width:548px;height:56px;background:#282828"></div>
<div class="abs" style="left:2124px;top:264px;width:80px;height:56px;background:#323232"></div>
<div class="abs" style="left:2124px;top:320px;width:548px;height:241px;background:#323232"></div>
<div class="abs t22" style="left:2143px;top:275px;color:#ececec;line-height:34px;font-weight:700">调整</div>
<div class="abs t22" style="left:2140px;top:331px;color:#b4b4b4;line-height:34px;white-space:nowrap">添加调整</div>
<div class="abs" style="left:2124px;top:561px;width:548px;height:6px;background:#262626"></div>
<div class="abs" style="left:2124px;top:567px;width:548px;height:54px;background:#282828"></div>
<div class="abs" style="left:2124px;top:567px;width:80px;height:54px;background:#323232"></div>
<div class="abs" style="left:2284px;top:567px;width:2px;height:54px;background:#2d2d2d"></div><div class="abs" style="left:2364px;top:567px;width:2px;height:54px;background:#2d2d2d"></div>
<div class="abs" style="left:2124px;top:621px;width:548px;height:721px;background:#323232"></div>
<div class="abs t22" style="left:2143px;top:578px;color:#ececec;line-height:34px;font-weight:700">图层</div>
<div class="abs t22" style="left:2222px;top:578px;color:#9c9c9c;line-height:34px">通道</div>
<div class="abs t22" style="left:2304px;top:578px;color:#9c9c9c;line-height:34px">路径</div>
<div class="abs" style="left:2132px;top:640px;width:146px;height:34px;background:#2a2a2a;border:2px solid #454545;border-radius:5px"></div>
<div class="abs t22" style="left:2174px;top:642px;color:#e4e4e4;line-height:34px;font-weight:700">类型</div>
<div class="abs" style="left:2124px;top:686px;width:548px;height:2px;background:#2a2a2a"></div>
<div class="abs" style="left:2132px;top:698px;width:222px;height:35px;background:#2a2a2a;border:2px solid #454545;border-radius:5px"></div>
<div class="abs t22" style="left:2146px;top:700px;color:#e4e4e4;line-height:34px;font-weight:700">正常</div>
<div class="abs t22" style="left:2365px;top:700px;color:#b0b0b0;line-height:34px;white-space:nowrap">不透明度:</div>
<div class="abs" style="left:2124px;top:744px;width:548px;height:2px;background:#2a2a2a"></div>
<div class="abs t22" style="left:2134px;top:758px;color:#b4b4b4;line-height:34px;white-space:nowrap;font-weight:700">锁定:</div>
<div class="abs t22" style="left:2411px;top:758px;color:#b4b4b4;line-height:34px;white-space:nowrap">填充:</div>
<div class="abs" style="left:2124px;top:807px;width:548px;height:112px;background:#323232"></div>
<div class="abs" style="left:2186px;top:808px;width:486px;height:54px;background:#4b4b4b"></div>
<div class="abs" style="left:2124px;top:806px;width:548px;height:2px;background:#2a2a2a"></div>
<div class="abs" style="left:2124px;top:862px;width:548px;height:2px;background:#2a2a2a"></div>
<div class="abs" style="left:2124px;top:918px;width:548px;height:2px;background:#2a2a2a"></div>
<div class="abs" style="left:2184px;top:807px;width:2px;height:112px;background:#2a2a2a"></div>
<div class="abs" style="left:2124px;top:920px;width:548px;height:377px;background:#2e2e2e"></div>
<div class="abs t22" style="left:2367px;top:819px;color:#ececec;line-height:34px;white-space:nowrap;font-weight:700">阈值 1</div>
<div class="abs t22" style="left:2272px;top:874px;color:#ececec;line-height:34px;white-space:nowrap;font-weight:700">背景</div>
<div class="abs" style="left:2192px;top:873px;width:64px;height:38px;background:linear-gradient(#62629c 0,#8f80ac 40%,#b89aa8 58%,#a09088 66%,#77775f 74%,#6c7058 100%);border:1px solid #555;box-sizing:border-box"></div>
<div class="abs" style="left:2286px;top:817px;width:61px;height:34px;background:#fff;border:2px solid #5e5e5e"></div>
<div class="abs" style="left:2124px;top:1297px;width:548px;height:45px;background:#323232;border-top:2px solid #2a2a2a;box-sizing:border-box"></div>
<div class="abs" style="left:2420px;top:1297px;width:54px;height:45px;background:#424242"></div>
<svg class="abs" style="left:0;top:0" width="2672" height="1342" viewBox="0 0 2672 1342">
<path d="M2229 905v-12M2229 896l-6-8M2229 894l6-9M2229 890l-3-9M2229 890l4-8M2226 888l-5-4M2232 887l6-3" stroke="#34304a" stroke-width="1.600" fill="none"/><circle cx="2229" cy="886" r="8" fill="#3a3458" opacity=".35"/><ellipse cx="2200" cy="898" rx="9" ry="4" fill="#e8b070" opacity=".45"/><circle cx="2198" cy="898" r="2.500" fill="#ffe9b0" opacity=".9"/><path d="M2204 901l10-4 12 3 8 1" stroke="#8a7a88" stroke-width="2" fill="none" opacity=".7"/>
<g fill="none" stroke="#8c8c8c" stroke-width="2.600"><circle cx="2491" cy="233" r="9.500"/><path d="M2484 226.500l14 13.500"/></g>
<path d="M2540 224h18v19h-10l-8-8zM2540 235h8v8" fill="none" stroke="#8c8c8c" stroke-width="2"/>
<g fill="none" stroke="#8c8c8c" stroke-width="2"><path d="M2596 227h22M2603 227v-4h8v4M2598.500 227v17h17v-17M2603.500 231v10M2607 231v10M2610.500 231v10"/></g>
<g fill="#a8a8a8"><rect x="2644" y="285" width="20" height="2"/><rect x="2644" y="289" width="20" height="2"/><rect x="2644" y="293" width="20" height="2"/><rect x="2644" y="297" width="20" height="2"/></g>
<g fill="#a8a8a8"><rect x="2660" y="588" width="20" height="2"/><rect x="2660" y="592" width="20" height="2"/><rect x="2660" y="596" width="20" height="2"/><rect x="2660" y="600" width="20" height="2"/></g>
<defs><linearGradient id="gh" x1="0" x2="1" y1="0" y2="0"><stop offset="0" stop-color="#2a2a2a"/><stop offset="1" stop-color="#e6e6e6"/></linearGradient><linearGradient id="gs" x1="0" x2="1"><stop offset="0" stop-color="#222"/><stop offset=".2" stop-color="#ddd"/><stop offset=".4" stop-color="#222"/><stop offset=".6" stop-color="#ddd"/><stop offset=".8" stop-color="#222"/><stop offset="1" stop-color="#ddd"/></linearGradient><radialGradient id="gv" cx=".5" cy=".3" r=".5"><stop offset="0" stop-color="#2a2a2a"/><stop offset="1" stop-color="#999"/></radialGradient></defs>
<g transform="translate(2238,397)"><circle r="9" fill="none" stroke="#dcdcdc" stroke-width="2"/><path d="M0-9a9 9 0 0 1 0 18z" fill="#dcdcdc"/><g stroke="#dcdcdc" stroke-width="2.400" stroke-linecap="round"><path d="M0-16v-3M0 16v3M-16 0h-3M16 0h3M-11.500-11.500l-2-2M11.500-11.500l2-2M-11.500 11.500l-2 2M11.500 11.500l2 2"/></g></g>
<path transform="translate(2268,385)" d="M0 22V10h2V6h2v8h2v2h2V8h2V3h2v9h2V6h2V1h2v7h2v4h2V5h2v8h2v3h2V9h2v5h2V6h2v16z" fill="#dcdcdc"/>
<g transform="translate(2318,384)"><rect x="1" y="1" width="30" height="24" fill="none" stroke="#9a9a9a" stroke-width="2"/><path d="M11 1v24M21 1v24M1 9h30M1 17h30" stroke="#9a9a9a" stroke-width="2"/><path d="M1 25c12 0 12-4 15-12s4-12 15-12" fill="none" stroke="#dcdcdc" stroke-width="2.400"/></g>
<g transform="translate(2366,384)"><rect x="1" y="1" width="30" height="24" fill="#2a2a2a" stroke="#dcdcdc" stroke-width="2"/><path d="M1 1h30L1 25z" fill="#dcdcdc"/><path d="M5 9h8M9 5v8" stroke="#2a2a2a" stroke-width="2"/><path d="M19 18h8" stroke="#dcdcdc" stroke-width="2"/></g>
<path transform="translate(2416,385)" d="M1 1h27l-13.500 24z" fill="url(#gv)" stroke="#dcdcdc" stroke-width="2.400"/>
<g transform="translate(2198,438)"><rect x="1" y="1" width="30" height="24" fill="#dcdcdc"/><rect x="3" y="3" width="26" height="9" fill="url(#gs)"/><rect x="3" y="14" width="26" height="9" fill="url(#gh)"/></g>
<g transform="translate(2245,437)" fill="none" stroke="#dcdcdc" stroke-width="2"><circle cx="17" cy="5" r="3"/><path d="M5 6h9M20 6h9M6.500 6l-5 12M6.500 6l5 12M27.500 6l-5 12M27.500 6l5 12"/><path d="M0 18h13a6.500 6.500 0 0 1-13 0zM21 18h13a6.500 6.500 0 0 1-13 0z" fill="#dcdcdc"/></g>
<g transform="translate(2294,438)"><rect x="1" y="1" width="30" height="24" fill="#2c2c2c" stroke="#dcdcdc" stroke-width="2"/><rect x="16" y="1" width="15" height="24" fill="#dcdcdc"/></g>
<g transform="translate(2342,437)"><path d="M0 6h8l3-4h8l3 4h7v18H0z" fill="#dcdcdc"/><circle cx="14" cy="14" r="5.500" fill="#dcdcdc" stroke="#2a2a2a" stroke-width="2.400"/><circle cx="27" cy="23" r="6" fill="#444" stroke="#dcdcdc" stroke-width="2.400"/></g>
<g transform="translate(2405,451)"><circle cx="0" cy="-6" r="9" fill="#8a8a8a"/><circle cx="-7" cy="5" r="9" fill="#d6d6d6"/><circle cx="7" cy="5" r="9" fill="#bdbdbd" opacity=".9"/><circle cx="0" cy="1" r="4.500" fill="#2e2e2e"/></g>
<g transform="translate(2438,438)"><rect x="1" y="1" width="30" height="24" fill="#444" stroke="#dcdcdc" stroke-width="2"/><path d="M11 1v24M21 1v24M1 9h30M1 17h30" stroke="#dcdcdc" stroke-width="2"/><rect x="2" y="2" width="8" height="6" fill="#8a8a8a"/><rect x="12" y="2" width="8" height="6" fill="#666"/><rect x="2" y="10" width="8" height="6" fill="#6a6a6a"/><rect x="22" y="18" width="8" height="6" fill="#222"/><rect x="12" y="18" width="8" height="6" fill="#333"/></g>
<g transform="translate(2221,492)"><rect x="1" y="1" width="30" height="24" fill="#2c2c2c" stroke="#dcdcdc" stroke-width="2"/><path d="M31 1v24H1z" fill="#dcdcdc"/><circle cx="16" cy="13" r="8" fill="#dcdcdc"/><path d="M10.300 18.700a8 8 0 0 0 11.400-11.400z" fill="#2c2c2c"/></g>
<g transform="translate(2270,492)"><rect x="1" y="1" width="30" height="24" fill="#444" stroke="#dcdcdc" stroke-width="2"/><g fill="none" stroke-width="4.500"><path d="M1 15q10-4 15-8t15-6" stroke="#cfcfcf"/><path d="M1 21q10-4 15-8t15-6" stroke="#8a8a8a"/><path d="M4 26q10-4 14-8t13-6" stroke="#cfcfcf"/></g><rect x="1" y="1" width="30" height="24" fill="none" stroke="#dcdcdc" stroke-width="2"/></g>
<g transform="translate(2318,491)"><rect x="0" y="0" width="32" height="27" fill="#dcdcdc"/><path d="M3 20v-8h5v-4h6v-3h7v-3h8v5h-4v4h-6v3h-7v3h-5v3z" fill="#262626"/><path d="M12 24v-3h8v-3h9v6z" fill="#262626"/></g>
<g transform="translate(2366,492)"><rect x="1" y="1" width="30" height="24" fill="#dcdcdc"/><path d="M3 3l13 10L3 23z" fill="#555"/><path d="M29 3L16 13l13 10z" fill="#3a3a3a"/><path d="M3 23l13-10 13 10z" fill="#999"/><rect x="1" y="1" width="30" height="24" fill="none" stroke="#dcdcdc" stroke-width="2"/></g>
<g transform="translate(2414,492)"><rect x="1" y="1" width="30" height="24" fill="url(#gh)" stroke="#dcdcdc" stroke-width="2"/></g>
<g fill="none" stroke="#e0e0e0" stroke-width="2.600"><circle cx="2156" cy="657" r="6.500"/><path d="M2161 662l7 7" stroke-linecap="round"/></g>
<path d="M2261 656l6.500 6.500 6.500-6.500" fill="none" stroke="#d0d0d0" stroke-width="2.200"/>
<path d="M2337 714l6.500 6.500 6.500-6.500" fill="none" stroke="#d0d0d0" stroke-width="2.200"/>
<g><rect x="2313" y="649" width="22" height="18" fill="none" stroke="#dcdcdc" stroke-width="2"/><path d="M2316 664l5-7 3 4 3-3 5 6z" fill="#dcdcdc"/></g>
<g><circle cx="2372" cy="659" r="9.500" fill="none" stroke="#dcdcdc" stroke-width="2"/><path d="M2378.700 652.300a9.500 9.500 0 0 1-13.400 13.400z" fill="#dcdcdc"/></g>
<text x="2409" y="669" font-family="Liberation Serif, serif" font-weight="bold" font-size="30" fill="#dcdcdc">T</text>
<g fill="#9a9a9a"><rect x="2199" y="764" width="22" height="22" fill="#4a4a4a"/><rect x="2204.5" y="764.0" width="5.500" height="5.500"/><rect x="2215.5" y="764.0" width="5.500" height="5.500"/><rect x="2199.0" y="769.5" width="5.500" height="5.500"/><rect x="2210.0" y="769.5" width="5.500" height="5.500"/><rect x="2204.5" y="775.0" width="5.500" height="5.500"/><rect x="2215.5" y="775.0" width="5.500" height="5.500"/><rect x="2199.0" y="780.5" width="5.500" height="5.500"/><rect x="2210.0" y="780.5" width="5.500" height="5.500"/><rect x="2199.500" y="764.500" width="21" height="21" fill="none" stroke="#8a8a8a" stroke-width="1"/></g>
<path d="M2267 763q2 0 1 3l-9 13q-2 3-5 1q-2-2 0-4zM2252 779q4 0 4 4q-1 5-13 5q5-2 5-5q0-3 4-4z" fill="#9a9a9a"/>
<g fill="#dcdcdc"><path d="M2297 762l5 6h-3.500v5.500h5.500v-3.500l6 5-6 5v-3.500h-5.500v5.500h3.500l-5 6-5-6h3.500v-5.500h-5.500v3.500l-6-5 6-5v3.500h5.500v-5.500h-3.500z"/></g>
<path d="M2332.500 768.500h11l7 6v8h-18z" fill="none" stroke="#dcdcdc" stroke-width="2.400"/><g fill="#dcdcdc"><rect x="2327" y="766" width="3" height="3"/><rect x="2353" y="766" width="3" height="3"/><rect x="2327" y="782" width="3" height="3"/><rect x="2353" y="782" width="3" height="3"/><rect x="2331.500" y="762" width="3" height="3"/><rect x="2349" y="762" width="3" height="3"/><rect x="2331.500" y="786" width="3" height="3"/><rect x="2349" y="786" width="3" height="3"/></g>
<g><rect x="2376" y="771" width="20" height="15" rx="2" fill="#dcdcdc"/><path d="M2380.500 771v-3a5.500 5.500 0 0 1 11 0v3" fill="none" stroke="#dcdcdc" stroke-width="2.600"/><circle cx="2386" cy="778.500" r="2.200" fill="#323232"/></g>
<g><path d="M2142 836.5 q12.500-13.500 25 0q-12.500 13.500-25 0z" fill="#e4e4e4"/><circle cx="2154.500" cy="836.0" r="4.600" fill="#323232"/><circle cx="2156" cy="834.5" r="1.300" fill="#e4e4e4"/></g>
<g><path d="M2142 892.5 q12.500-13.500 25 0q-12.500 13.500-25 0z" fill="#e4e4e4"/><circle cx="2154.500" cy="892.0" r="4.600" fill="#323232"/><circle cx="2156" cy="890.5" r="1.300" fill="#e4e4e4"/></g>
<g><circle cx="2224" cy="836" r="9.500" fill="none" stroke="#dcdcdc" stroke-width="2"/><path d="M2230.700 829.300a9.500 9.500 0 0 1-13.400 13.400z" fill="#dcdcdc"/></g>
<g fill="none" stroke="#dcdcdc" stroke-width="2.600"><rect x="2264.500" y="822" width="12" height="14.500" rx="6"/><rect x="2264.500" y="834.500" width="12" height="14.500" rx="6"/></g><rect x="2268.700" y="828.500" width="3.600" height="14" rx="1" fill="#dcdcdc"/>
<path d="M2283 826v-11h22M2331 815h22v11M2283 847v11h22M2331 858h22v-11" fill="none" stroke="#fff" stroke-width="2"/>
<g fill="none" stroke="#8c8c8c" stroke-width="2.400"><rect x="2271" y="1315" width="15" height="12" rx="6"/><rect x="2282" y="1315" width="15" height="12" rx="6"/><path d="M2278 1321h12"/></g>
<text x="2328" y="1331" font-family="Liberation Sans, sans-serif" font-style="italic" font-size="30" fill="#dcdcdc">fx</text><path d="M2350 1334h8l-4 4z" fill="#dcdcdc"/>
<g><rect x="2381" y="1311" width="24" height="19" fill="#dcdcdc"/><circle cx="2393" cy="1320.500" r="5.500" fill="#323232"/></g>
<g><circle cx="2447" cy="1321" r="9.500" fill="none" stroke="#e4e4e4" stroke-width="2"/><path d="M2453.700 1314.300a9.500 9.500 0 0 1-13.400 13.400z" fill="#e4e4e4"/><path d="M2460 1336h8l-4 4z" fill="#e4e4e4"/></g>
<path d="M2489 1314h9l3 3h12v15h-24z" fill="#dcdcdc"/>
<path d="M2545 1312h18v19h-10l-8-8zM2545 1323h8v8" fill="none" stroke="#dcdcdc" stroke-width="2"/>
<g fill="none" stroke="#dcdcdc" stroke-width="2"><path d="M2598 1315h22M2605 1315v-4h8v4M2600.500 1315v17h17v-17M2605.500 1319v10M2609 1319v10M2612.500 1319v10"/></g>
</svg>

<div class="abs" id="menu" style="left:2424px;top:524px;width:232px;height:734px;background:#c4c4c4;border-radius:11px;box-shadow:0 6px 18px rgba(0,0,0,.45)">
<div class="abs" style="left:0;top:121.8px;width:232px;height:2px;background:#b3b3b3"></div>
<div class="abs" style="left:0;top:282.0px;width:232px;height:2px;background:#b3b3b3"></div>
<div class="abs" style="left:0;top:543.5px;width:232px;height:2px;background:#b3b3b3"></div>
<div class="abs" style="left:0;top:624.0px;width:232px;height:34px;background:#2568d7"></div>
<div class="abs mi" style="top:9.6px;color:#000">纯色...</div>
<div class="abs mi" style="top:43.6px;color:#000">渐变...</div>
<div class="abs mi" style="top:77.6px;color:#000">图案...</div>
<div class="abs mi" style="top:136.0px;color:#000">亮度/对比度...</div>
<div class="abs mi" style="top:170.0px;color:#000">色阶...</div>
<div class="abs mi" style="top:204.0px;color:#000">曲线...</div>
<div class="abs mi" style="top:238.0px;color:#000">曝光度...</div>
<div class="abs mi" style="top:296.0px;color:#000">自然饱和度...</div>
<div class="abs mi" style="top:330.0px;color:#000">色相/饱和度...</div>
<div class="abs mi" style="top:364.0px;color:#000">色彩平衡...</div>
<div class="abs mi" style="top:398.0px;color:#000">黑白...</div>
<div class="abs mi" style="top:432.0px;color:#000">照片滤镜...</div>
<div class="abs mi" style="top:466.0px;color:#000">通道混合器...</div>
<div class="abs mi" style="top:500.0px;color:#000">颜色查找...</div>
<div class="abs mi" style="top:557.0px;color:#000">反相</div>
<div class="abs mi" style="top:591.0px;color:#000">色调分离...</div>
<div class="abs mi" style="top:625.0px;color:#fff">阈值...</div>
<div class="abs mi" style="top:659.0px;color:#000">渐变映射...</div>
<div class="abs mi" style="top:693.0px;color:#000">可选颜色...</div>
</div>

<svg class="abs" style="left:0;top:0" width="2672" height="1342" viewBox="0 0 2672 1342">
<rect x="1396.300" y="150.900" width="618" height="378.700" fill="none" stroke="#f0507e" stroke-width="12.600"/>
<rect x="2400.100" y="1135.500" width="259.200" height="53.900" fill="none" stroke="#f0507e" stroke-width="12"/>
</svg>
<div class="abs wm" style="left:2001px;top:1223px"><span style="font-weight:900">头条</span> @设计原来如此</div>

</div>
</body></html>
